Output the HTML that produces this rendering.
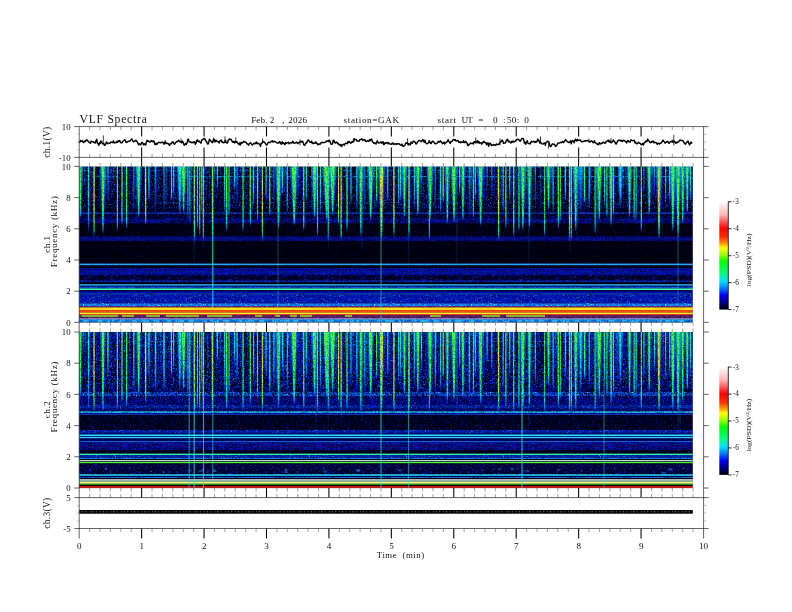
<!DOCTYPE html><html><head><meta charset="utf-8"><title>VLF Spectra</title>
<style>html,body{margin:0;padding:0;background:#fff}svg{display:block}text{font-family:"Liberation Serif","DejaVu Serif",serif;fill:#111}</style></head><body>
<svg width="792" height="612" viewBox="0 0 792 612">
<rect width="792" height="612" fill="#fff"/>
<defs>
<linearGradient id="gG" x1="0" y1="0" x2="0" y2="1">
<stop offset="0" stop-color="#48ff38" stop-opacity="1"/>
<stop offset="0.5" stop-color="#30ff48" stop-opacity="1"/>
<stop offset="0.72" stop-color="#10ff80" stop-opacity="1"/>
<stop offset="0.85" stop-color="#00e0d0" stop-opacity="0.95"/>
<stop offset="0.93" stop-color="#0090ff" stop-opacity="0.8"/>
<stop offset="1" stop-color="#0030ff" stop-opacity="0"/>
</linearGradient>
<linearGradient id="gY" x1="0" y1="0" x2="0" y2="1">
<stop offset="0" stop-color="#a0ff20" stop-opacity="1"/>
<stop offset="0.25" stop-color="#e8f020" stop-opacity="1"/>
<stop offset="0.4" stop-color="#ffd040" stop-opacity="1"/>
<stop offset="0.55" stop-color="#d0ff20" stop-opacity="1"/>
<stop offset="0.78" stop-color="#50ff50" stop-opacity="1"/>
<stop offset="0.9" stop-color="#00e0c0" stop-opacity="0.9"/>
<stop offset="1" stop-color="#0060ff" stop-opacity="0"/>
</linearGradient>
<linearGradient id="gC" x1="0" y1="0" x2="0" y2="1">
<stop offset="0" stop-color="#10f0d0" stop-opacity="1"/>
<stop offset="0.35" stop-color="#00f0e0" stop-opacity="1"/>
<stop offset="0.65" stop-color="#00c0ff" stop-opacity="0.95"/>
<stop offset="0.85" stop-color="#0070ff" stop-opacity="0.8"/>
<stop offset="1" stop-color="#0020ff" stop-opacity="0"/>
</linearGradient>
<linearGradient id="gc" x1="0" y1="0" x2="0" y2="1">
<stop offset="0" stop-color="#00c0ff" stop-opacity="0.9"/>
<stop offset="0.4" stop-color="#0080ff" stop-opacity="0.75"/>
<stop offset="0.8" stop-color="#0040ff" stop-opacity="0.5"/>
<stop offset="1" stop-color="#0020ff" stop-opacity="0"/>
</linearGradient>
<linearGradient id="gH" x1="0" y1="0" x2="0" y2="1">
<stop offset="0" stop-color="#00a0ff" stop-opacity="0.8"/>
<stop offset="0.5" stop-color="#0060ff" stop-opacity="0.65"/>
<stop offset="1" stop-color="#0020e0" stop-opacity="0"/>
</linearGradient>
<linearGradient id="gB" x1="0" y1="0" x2="0" y2="1">
<stop offset="0" stop-color="#0030ff" stop-opacity="0.9"/>
<stop offset="0.5" stop-color="#0020e0" stop-opacity="0.75"/>
<stop offset="0.85" stop-color="#0010c0" stop-opacity="0.4"/>
<stop offset="1" stop-color="#0010a0" stop-opacity="0"/>
</linearGradient>
<linearGradient id="gK" x1="0" y1="0" x2="0" y2="1">
<stop offset="0" stop-color="#000010" stop-opacity="0"/>
<stop offset="0.25" stop-color="#000010" stop-opacity="0.9"/>
<stop offset="0.75" stop-color="#000018" stop-opacity="0.9"/>
<stop offset="1" stop-color="#000020" stop-opacity="0"/>
</linearGradient>
<linearGradient id="gF" x1="0" y1="0" x2="0" y2="1">
<stop offset="0" stop-color="#50ff50" stop-opacity="1"/>
<stop offset="0.35" stop-color="#30ff90" stop-opacity="1"/>
<stop offset="0.65" stop-color="#20f0d0" stop-opacity="0.95"/>
<stop offset="1" stop-color="#20e0f0" stop-opacity="0.9"/>
</linearGradient>
<linearGradient id="gT" x1="0" y1="0" x2="0" y2="1">
<stop offset="0" stop-color="#00ffc0" stop-opacity="0.9"/>
<stop offset="0.5" stop-color="#00c0ff" stop-opacity="0.7"/>
<stop offset="1" stop-color="#0060ff" stop-opacity="0.0"/>
</linearGradient>
<linearGradient id="cb" x1="0" y1="0" x2="0" y2="1">
<stop offset="0" stop-color="#ffffff"/>
<stop offset="0.12" stop-color="#ffb4b4"/>
<stop offset="0.25" stop-color="#ff0000"/>
<stop offset="0.33" stop-color="#ff3000"/>
<stop offset="0.375" stop-color="#ff8000"/>
<stop offset="0.43" stop-color="#ffff00"/>
<stop offset="0.49" stop-color="#a0ff00"/>
<stop offset="0.555" stop-color="#00ff00"/>
<stop offset="0.666" stop-color="#00ff80"/>
<stop offset="0.74" stop-color="#00e0ff"/>
<stop offset="0.8" stop-color="#0080ff"/>
<stop offset="0.867" stop-color="#0000ff"/>
<stop offset="0.94" stop-color="#000080"/>
<stop offset="1" stop-color="#000000"/>
</linearGradient>
<pattern id="nb" width="97" height="97" patternUnits="userSpaceOnUse">
<path d="M75.5 69v1M29.5 81v1M33.5 86v1M7 81.5h2M83 34.5h1M10.5 43v1M40 73.5h1M0.5 61v2M4.5 95v1M84 2.5h1M0 62.5h2M68.5 34v1M54 16.5h2M9 30.5h1M20 12.5h1M18.5 74v1M82.5 91v1M22 47.5h2M58 61.5h1M89 65.5h1M75 77.5h1M69 67.5h1M93.5 81v1M62 22.5h1M67.5 27v1M17 59.5h1M8.5 25v1M90 20.5h1M56.5 62v1M30 12.5h1M83.5 65v1M56 89.5h1M64.5 92v2M30 88.5h1M74 1.5h1M28.5 71v1M87 78.5h1M41.5 21v1M79.5 52v1M35 62.5h1M95 36.5h1M6.5 0v1M1 35.5h1M86 63.5h1M72.5 31v2M37 23.5h1M66.5 4v1M53.5 32v1M30 62.5h1M88 59.5h1M18 6.5h1M48 13.5h1M49.5 45v1M38.5 21v1M6.5 77v2M14.5 73v1M75 76.5h1M79.5 67v1M41 55.5h1M56.5 43v1M82.5 50v1M29 60.5h2M23.5 13v1M72.5 21v1M85.5 46v1M79.5 11v2M52 70.5h1M15 12.5h1M96 10.5h1M27 94.5h1M39 80.5h1M49.5 23v1M29.5 25v1M28.5 42v1M44 27.5h1M68 14.5h1M42.5 1v1M13 82.5h2M41.5 90v1M79.5 93v2M38.5 11v1M71.5 73v1M80.5 30v1M95 49.5h1M83 20.5h1M96.5 51v2M95.5 67v1M60.5 96v2M86 75.5h2M11.5 88v1M79.5 38v2M20 80.5h2M13.5 22v2M66 92.5h1M90.5 56v1M92 5.5h1M96.5 0v1M82.5 47v1M21.5 80v1M25.5 43v2M9.5 85v2M35 39.5h1M88.5 46v2M38.5 47v1M19 40.5h1M92.5 77v1M34 42.5h1M16 27.5h1M74.5 30v1M60 26.5h1M0 64.5h1M16.5 78v1M47.5 46v1M65.5 60v2M49.5 85v1M87.5 12v1M38 46.5h1M49 60.5h1M67 93.5h1M5.5 20v1M23.5 11v2M88.5 61v1M33.5 58v1M36 38.5h2M75.5 49v1M34 85.5h2M40 70.5h1M51 35.5h1M44 6.5h1M39.5 23v2M76 43.5h1M29.5 34v1M48 36.5h1M57 16.5h2M47.5 3v1M84 87.5h1M88 51.5h1M81.5 15v1M85 14.5h1M53.5 4v2M10 53.5h1M57 1.5h1M23.5 82v1M90 83.5h1M50.5 58v1M4 1.5h1M21.5 65v2M2 72.5h1M33 52.5h1M52 89.5h1M45 53.5h2M55.5 8v1M80 9.5h1M43.5 85v1M7.5 3v1M60 87.5h2M12 84.5h2M19 63.5h1M60.5 85v1M85.5 5v1M20.5 6v1M77.5 51v1M77 36.5h2M30 68.5h2M60 70.5h1M25.5 52v1M95 42.5h2M41 61.5h1M1.5 14v1M40 96.5h1M7.5 42v1M81 4.5h2M92 2.5h1M37 28.5h1M17 87.5h2M42.5 37v1M74 41.5h1M20.5 81v2M91.5 51v1M19 40.5h1M7.5 91v1M50 56.5h1M88.5 86v2M40.5 62v1M38.5 68v1M65 75.5h2M72 92.5h1M71.5 28v1M48.5 11v2M66 32.5h1M93 11.5h1M29.5 28v1M56 11.5h2M96 42.5h1M56 41.5h1M38 67.5h1M14.5 94v1M42.5 28v1M47.5 69v1M15 77.5h1M81.5 20v1M46.5 77v1M67 78.5h2M0 41.5h1M21.5 40v1M89.5 12v1M9 67.5h1M59 76.5h1M91.5 19v1M89.5 51v2M96 89.5h1M66.5 35v1M73.5 50v1M36 60.5h1M69 31.5h1M41.5 5v1M33 80.5h1M30 86.5h2M92.5 78v1M82 35.5h1M9.5 3v1M96 6.5h1M39.5 90v1M60 21.5h1M48 42.5h1M48 34.5h1M35 60.5h1M42 9.5h1M11 62.5h2M18 25.5h2M92 39.5h1M25.5 82v1M22 70.5h1M17.5 78v1M24.5 75v1M79 35.5h1M18 18.5h1M9 92.5h1M21 24.5h1M60.5 49v1M92 2.5h2M44.5 96v1M32.5 33v2M52.5 86v1M7.5 47v1M57.5 61v1M36 68.5h1M9 82.5h1M53.5 61v2M90 94.5h1M13.5 27v1M64 91.5h1M27 14.5h1M89.5 87v2M85.5 69v2M64 90.5h1M2.5 79v2M23 65.5h1M56 17.5h1M45 9.5h1M35.5 51v2M85 87.5h2M95.5 54v1M42.5 12v1M82.5 55v1M42 61.5h1M90.5 93v1M68 69.5h1M9 95.5h2M47.5 68v1M28.5 3v1M47.5 63v2M40 39.5h1M16 15.5h2M27 59.5h2M46 40.5h2M49.5 20v1M53.5 75v1M90.5 74v1M55 33.5h1M37 1.5h2M53.5 24v1M82 5.5h1M70 27.5h1M80.5 31v2M53 45.5h1M70.5 16v1M85.5 4v1M59 49.5h1M94 67.5h2M56 87.5h1M44 83.5h1M85.5 63v1M14.5 29v1M89.5 88v1M78 3.5h1M18.5 44v1M91.5 27v1M55 95.5h2M24.5 25v1M30 36.5h1M63.5 24v1M89.5 30v2M47 40.5h1M2 36.5h1M64.5 14v1M7 5.5h1M49.5 66v1M46 47.5h1M77.5 4v1M11 61.5h1M43.5 79v1M94 43.5h1M86 92.5h1M29.5 36v1M76 57.5h1M64.5 44v1M45 52.5h1M60 85.5h1M91.5 46v1M74 16.5h2M72.5 12v2M39.5 43v1M65.5 3v1M76 16.5h1M59.5 57v1M42.5 71v1M55 11.5h1M47 6.5h1M17 20.5h1M59.5 58v1M48 78.5h1M19.5 57v1M68 90.5h1M48.5 27v1M85.5 66v1M54 79.5h1M93.5 52v2M2.5 76v1M30 65.5h1M96.5 49v1M16 73.5h1M1.5 19v1M67 26.5h1M26.5 73v1M36.5 57v1M87 84.5h1M78 24.5h2M61.5 54v1M88.5 83v1M28 47.5h1M70 25.5h2M65.5 28v1M18 41.5h1M68.5 89v1M8 25.5h2M46 69.5h1M57 67.5h1M24.5 14v1M44.5 64v1M47.5 0v2M18 87.5h2M11.5 57v1M55.5 10v1M37 69.5h1M8 77.5h2M71 23.5h1M15 2.5h1M15.5 53v1M14 17.5h2M10 12.5h1M79 33.5h1M42 22.5h1M25 29.5h1M23.5 17v1M45.5 40v1M66.5 65v1M65.5 77v1M57.5 65v1M28 30.5h1M83 42.5h1M25.5 41v1M2 8.5h2M28 72.5h1M46.5 85v1M95.5 23v1M77 32.5h1M39.5 42v1M89.5 29v2M74.5 6v1M11.5 26v1M84 82.5h1M49.5 54v1M22.5 28v2M87.5 24v1M12 90.5h1M57.5 49v1M67.5 61v1M84 22.5h1M15 17.5h1M63 30.5h1M11.5 72v1M96.5 17v1M6.5 71v2M11 26.5h1M4 87.5h1M91 0.5h2M21.5 63v1M94.5 33v1M18.5 5v1M64.5 8v2M44 50.5h1M31.5 76v1M58.5 95v1M68.5 38v1M28.5 28v1M62.5 74v1M2 27.5h1M68.5 54v1M73 61.5h1M29.5 65v1M11 22.5h2M22.5 35v2M45 61.5h1M46.5 21v2M4.5 14v2M2 53.5h2M29 56.5h1M47 64.5h1M0 42.5h1M42 72.5h1M56 60.5h1M4 0.5h1M94.5 70v1M0 19.5h1M28 41.5h2M91 18.5h2M86.5 11v1M22.5 47v1M93 50.5h1M5.5 18v2M47.5 93v1M4 74.5h2M73.5 58v2M60 29.5h1M66 85.5h1M72 27.5h1M59.5 47v1M65.5 44v2M46.5 11v2M30 76.5h1M58 92.5h2M42 84.5h1M29.5 96v1M68 61.5h1M92.5 23v1M61 85.5h1M5 53.5h1M42 65.5h1M23 50.5h1M26 87.5h2M53 95.5h1M0 67.5h1M82 3.5h1M57 44.5h2M26 70.5h1M19 80.5h1M60.5 59v1M95.5 15v2M73.5 43v2M66.5 72v1M56.5 53v1M25 29.5h1M40 42.5h1M13.5 13v1M74.5 29v1M10.5 92v1M17 66.5h1M1 1.5h1M52.5 40v1M51 40.5h1M45.5 12v1M79.5 56v1M9.5 63v2M93 76.5h2M47 20.5h1M82 25.5h1M33.5 36v2M71 77.5h1M18.5 25v2M29.5 62v1" stroke="#0018e8" stroke-width="1" fill="none"/>
<path d="M80 74.5h1M33.5 70v1M69.5 70v1M94 1.5h1M91.5 54v1M17 46.5h1M74.5 29v1M11.5 44v2M37.5 78v1M33 66.5h1M74.5 40v1M38 75.5h1M83.5 89v1M34.5 28v1M72 52.5h1M40 20.5h1M75 38.5h1M10 72.5h1M5 67.5h1M22.5 3v1M32.5 47v1M95.5 20v1M48 25.5h1M93 5.5h1M9 26.5h2M6.5 17v1M57 69.5h1M85.5 95v1M49.5 40v1M67 87.5h2M14.5 72v1M40 13.5h2M4.5 92v1M67 46.5h1M64 21.5h1M57.5 40v1M38 62.5h1M11 75.5h1M43 61.5h1M14 64.5h1M22.5 94v2M38 93.5h2M96 9.5h2M60.5 75v2M56 9.5h1M45 46.5h1M59 66.5h2M74 78.5h1M96 82.5h1M29.5 25v1M59.5 34v1M68 68.5h1M49.5 25v2M72.5 87v1M28 60.5h1M35.5 17v1M75 80.5h2M84.5 67v1M39.5 80v1M62 2.5h1M87.5 63v1M44.5 51v2M47 63.5h1M86 71.5h2M71 65.5h1M35.5 87v1M64.5 72v2M32.5 37v1M19 5.5h1M85 92.5h1M30 0.5h1M50.5 12v1M72.5 65v1M81.5 39v1M2.5 1v1M67.5 95v1M46.5 92v1M55.5 18v1M63 40.5h1M0.5 64v1M21.5 61v1M48 60.5h1M1 60.5h1M1 58.5h1M4.5 15v1M30 66.5h2M93 38.5h1M50.5 91v1M43.5 30v1M7.5 59v1M31 87.5h1M94.5 2v2M11 26.5h1M82.5 71v1M83.5 27v1M14 79.5h1M24.5 9v2M28.5 13v1M35.5 51v1M3.5 77v1M3.5 22v1M91 49.5h1M65 71.5h1M38.5 10v2M78.5 48v2M13.5 31v1M91.5 91v1M0 48.5h2M8 24.5h1M72.5 12v1M52 88.5h2M68.5 56v1M10 65.5h1M35 28.5h2M90.5 81v1M64 12.5h1M83 62.5h1M12.5 10v2M94 77.5h1M45.5 4v1M67.5 59v1M38 95.5h1M87 30.5h1M37 30.5h1M60 80.5h1M83 76.5h1M84.5 65v2M33 96.5h2M73 2.5h1M46 80.5h1M9 81.5h1M6.5 51v1M69 25.5h1M10 22.5h1M23.5 54v1M64.5 25v1M48.5 69v1M82.5 24v1M14 14.5h1M85 46.5h1M60 91.5h2M53 71.5h1M96 37.5h1M68.5 4v1M72 96.5h1M75.5 57v1M0 3.5h1M96 64.5h1M14 81.5h1M18 45.5h1M38.5 3v1M88.5 89v1M43.5 84v1M70 40.5h1M3 45.5h1M32.5 96v1M74.5 8v2M72 56.5h1M45 94.5h1M29.5 58v1M37 72.5h1M51 91.5h1M67 66.5h2M42 48.5h1M78 78.5h2M82 66.5h1M73.5 0v1M35 40.5h1M62 9.5h2M82.5 79v1M95.5 10v1M30 39.5h1M89 58.5h2M29.5 8v1M3 50.5h1M34 95.5h1M58.5 31v1M84 79.5h1M17 61.5h1M7 32.5h1M37.5 37v1M50 49.5h1M14 59.5h2M49 90.5h1M7.5 28v1M88 30.5h1M45.5 7v2M82.5 4v1M85.5 44v1M38 12.5h2M56 91.5h1M74 35.5h1M32.5 81v1M83 45.5h1M79.5 4v1M22 65.5h1M46.5 62v1M6 36.5h1M66 24.5h1M92 84.5h1M61.5 18v1M24 33.5h2M96 40.5h1M43.5 31v1M87 20.5h1M3.5 24v1M17.5 10v1M68.5 22v1M29.5 23v1M32 40.5h1M72 25.5h2M90 71.5h2M37.5 61v1M52 85.5h1M56.5 9v1M68.5 66v2M3.5 54v1M28.5 77v1M54.5 92v1M44.5 75v2M59 90.5h1M54.5 69v1M96.5 6v1M6.5 74v1M36 85.5h1M47.5 17v1M23.5 85v1M50 69.5h1M88.5 32v1M7.5 92v1M53.5 22v1M94.5 46v1M20 61.5h1M8.5 48v2M12.5 64v1M1 78.5h1M7 50.5h1M89 24.5h1M54 32.5h1M29.5 90v1M44 70.5h2M51 70.5h1M47.5 63v1M12 49.5h1M81 12.5h1M90.5 4v1M48 88.5h1M0 88.5h1M37 61.5h1M86.5 39v1M19 45.5h1M51 63.5h1M42.5 40v2M86 0.5h1M42 50.5h1M16.5 13v1M46 54.5h1M90.5 2v2M9 36.5h1M88 77.5h1M35.5 1v1M2.5 17v1M31 63.5h1M29 0.5h1M63 10.5h1M81.5 13v1M36 64.5h1M37 92.5h2M30 60.5h1M81.5 84v1M73 49.5h2M4 66.5h2M51 66.5h1M81.5 63v1M38.5 91v1M39.5 6v2M93.5 42v1M0 31.5h1M13 0.5h1M62.5 95v1M6 16.5h1M31 46.5h1M35.5 77v1M72 24.5h2M31 95.5h1M56 67.5h1M19 39.5h2M71 75.5h1M86.5 66v1M26.5 79v1M44.5 60v1M44.5 7v1M35.5 55v1M96.5 8v1M74.5 32v1M90 4.5h1M29.5 48v1M18 41.5h2M54 8.5h2M69.5 32v1M47.5 34v1M3.5 71v1M37 50.5h1M54.5 4v1M89 10.5h1M92 67.5h1M50 66.5h1M30.5 94v1M69.5 17v1M91 68.5h1M81.5 47v1M74 33.5h1M0.5 50v1M54.5 10v1M1 41.5h1M2.5 13v1M3.5 32v1M41.5 53v2M72 1.5h1M41.5 31v1M27.5 77v1M55 3.5h2M14 10.5h1M36.5 50v1M48 4.5h1M36 94.5h1M5.5 45v1M79 65.5h1M41 68.5h1M50 16.5h1M4.5 24v2M32 80.5h1M91.5 19v2M56.5 45v1M91 79.5h1M95.5 54v1M38 84.5h1M77.5 16v2M7 17.5h1M60 69.5h1M12.5 5v2M69.5 44v1M2 80.5h2M70 39.5h1M48 13.5h1M91.5 40v1M19 69.5h1M31 82.5h1M65 41.5h1M14.5 22v1M36.5 67v2M85.5 0v1M43.5 26v1M2 71.5h1M35 39.5h1M43.5 14v1M42.5 9v1M54 37.5h1M7.5 73v1M72 78.5h1M26 6.5h2M82 80.5h1M70.5 82v1M20 3.5h1M56.5 44v1M28.5 57v1M21 55.5h1M34 13.5h1M25.5 15v2M81.5 49v1M37.5 81v1M63 40.5h1M59.5 74v2M52 1.5h1M96.5 65v1M37.5 84v1M66.5 42v2M3.5 16v1M2 37.5h1M76.5 19v2M13 74.5h1M27.5 90v2M55.5 49v2M64.5 28v2M64 23.5h1M39.5 72v1M10.5 55v1M48.5 62v2M44.5 78v1M87 75.5h1M83 1.5h2M54 5.5h2M54 9.5h1M82.5 61v1M82.5 6v1M4 70.5h1M3 85.5h1M53 7.5h1M96.5 20v1M3 47.5h2M71 8.5h1M86 38.5h1M60 73.5h1M12 70.5h1M78.5 40v1M21.5 10v2M65.5 26v1M15.5 6v1M40.5 46v1M46 61.5h1M50 72.5h1M40 34.5h1M18.5 22v1M7.5 43v2M35.5 44v1M25 48.5h1M85 4.5h1M92.5 40v1M23.5 40v1M20.5 63v1M14 83.5h1M37 25.5h2M16 81.5h1M24.5 12v1M45 32.5h1M59 42.5h1M2 6.5h1M54 9.5h1M83 60.5h1M82.5 34v1M61.5 5v1M72 83.5h1M8.5 40v1M48.5 43v1M92 32.5h1M87 92.5h1M77.5 43v1M66 52.5h1M11 33.5h2M78 6.5h1M19.5 48v1M0.5 32v1M64 59.5h1M24 74.5h2M52 74.5h1M20.5 78v2M1.5 96v1M56.5 42v1M10 95.5h1M31.5 15v2M15.5 6v1M71.5 28v1M47.5 58v1M49.5 54v2M29.5 56v1M76.5 53v1M7 5.5h1M0 13.5h1M89.5 37v2M90.5 72v2M36 86.5h1M74.5 82v1M24.5 79v1M38.5 36v1M21.5 43v1M11 62.5h1M58 2.5h1M31.5 23v2M62 81.5h1M71 11.5h1M24.5 96v1M40 95.5h1M52.5 72v1M10.5 61v2M30 41.5h1M1 67.5h1M65.5 94v1M68.5 36v1M94 81.5h1M79.5 84v1M1 45.5h1M81.5 70v1M75.5 54v1M84.5 84v2M31 61.5h1M28 69.5h1M29.5 59v1M77.5 96v1M96.5 62v1M86 39.5h1M70 85.5h1M83.5 38v1M53 42.5h1M9.5 88v1M81 13.5h2M80 68.5h1M0.5 61v1M31.5 91v1M32 96.5h1M83 33.5h1M15 0.5h1" stroke="#0020ff" stroke-width="1" fill="none"/>
<path d="M5 38.5h2M85.5 89v1M73.5 72v1M34 36.5h1M5.5 48v2M49.5 82v1M34.5 55v1M7 86.5h1M34 59.5h1M36 69.5h1M14.5 43v1M61 7.5h1M15 21.5h1M83.5 69v1M55 6.5h1M33 15.5h1M48 85.5h1M13 75.5h2M65.5 67v1M53 10.5h1M86.5 66v1M56 75.5h1M37.5 85v2M74 34.5h2M26.5 59v1M3.5 61v1M40.5 15v1M67 14.5h2M18.5 42v2M94 50.5h1M93 14.5h1M29.5 64v1M4.5 91v1M24 20.5h1M80 50.5h1M45 23.5h1M40 68.5h2M56.5 48v1M59 91.5h1M66 7.5h1M13 52.5h2M70 14.5h1M62 13.5h2M47 81.5h1M92 44.5h2M93.5 40v1M24 15.5h1M45 40.5h1M50.5 27v1M50.5 76v1M41 13.5h1M49.5 91v1M25.5 85v1M93 20.5h1M50.5 90v1M56.5 33v1M48.5 84v1M67.5 12v1M18 56.5h1M21.5 28v1M57 32.5h1M43 48.5h1M71 55.5h2M91.5 20v1M27 37.5h1M25 57.5h2M30 32.5h1M55 27.5h2M32.5 79v2M72.5 63v1M7.5 1v1M10 34.5h1M20.5 29v1M60.5 67v1M46.5 45v1M9.5 36v2M69.5 74v2M44.5 35v1M28 83.5h1M11.5 21v1M92 38.5h1M84 19.5h1M54 3.5h1M58.5 30v1M80 94.5h1M34.5 12v1M53 95.5h1M45 26.5h1M38 69.5h2M11 49.5h1M70 96.5h1M0.5 30v1M61.5 20v2M36 86.5h1M35 62.5h1M17 85.5h1M12 8.5h1M5 52.5h1M30.5 32v1M63.5 86v1M66 27.5h2M57.5 77v1M12 37.5h1M92 50.5h2M51 33.5h1M40.5 75v1M9 60.5h1M80 56.5h1M58 14.5h1M31.5 47v1M65 50.5h1M7.5 88v1M51 9.5h2M37.5 2v1M61.5 69v2M52 11.5h1M5.5 78v1M47.5 16v1M34.5 15v1M77.5 55v1M88 22.5h1M86 3.5h1M38 72.5h1M57 39.5h1M43.5 24v1M78 37.5h1M58 11.5h1M71.5 25v1M63.5 38v1M16.5 52v1M48 19.5h1M31 76.5h1M83.5 40v1M91 91.5h1M91 59.5h2M73.5 44v1M32 0.5h1M28.5 32v2M15 44.5h2M71.5 52v1M47.5 46v1M21 6.5h1M25 29.5h1M82 19.5h2M66 74.5h1M43 37.5h1M59.5 16v1M16.5 38v1M35 33.5h1M69 45.5h1M32 90.5h1M22 72.5h1M33.5 39v2M5.5 39v1M83 44.5h1M94 12.5h1M36 93.5h1M54.5 26v1M32.5 78v1M74 63.5h2M6 52.5h1M25.5 72v1M48.5 11v1M22.5 55v2M47.5 48v1M81.5 72v1M12.5 68v1M81.5 14v1M39.5 18v1M45 1.5h1M10.5 64v1M38.5 82v1M56 92.5h1M20.5 31v2M43.5 5v1M9 20.5h2M53 22.5h1M67 22.5h1M20 48.5h1M93 25.5h1M3.5 34v1M35.5 92v1M4.5 13v2M27.5 24v1M57.5 15v1M33.5 80v1M54.5 61v1M8 1.5h1M1.5 6v1M54 13.5h2M49.5 17v1M20.5 4v1M86 22.5h1M11 31.5h1M16.5 11v1M95.5 3v2M46.5 1v1M54 37.5h2M43.5 77v1M75.5 69v1M22.5 35v1M21.5 78v1M35 85.5h1M22 89.5h1M87.5 37v2M95.5 56v1M90 93.5h2M3.5 59v2M17.5 19v2M20.5 1v2M53.5 58v1M7.5 81v2M9.5 80v1M54 3.5h1M84 73.5h2M92 26.5h1M38 73.5h1M17 67.5h1M26.5 38v2M6.5 25v1M61 74.5h1M80.5 67v1M16 36.5h2M25 37.5h1M90 82.5h1M63 64.5h1M37 0.5h1M96.5 62v1M45.5 46v2M67 86.5h1M92.5 79v2M23 19.5h1M2 66.5h1M56 78.5h1M39 88.5h1M57 41.5h2M25 51.5h1M88.5 82v1M5.5 55v2M81 1.5h1M17 61.5h1M45 31.5h1M40 41.5h1M49.5 20v1M62 41.5h1M5.5 34v1M41.5 80v1M14.5 75v1M94 68.5h1M35.5 16v1M76.5 24v2M93.5 37v1M8.5 45v1M82 10.5h1M63 18.5h1M26.5 92v1M8.5 77v1M35.5 24v1M43.5 36v1M72 74.5h1M15 83.5h1M92.5 45v1M3.5 52v1M0.5 44v1M47.5 53v1M8 87.5h1M94.5 37v1M50 15.5h1M17 21.5h1M67.5 44v1M17 30.5h1M60 92.5h2M77.5 52v1M73.5 74v1M76 74.5h1M10.5 12v1M83 15.5h1M69 95.5h2M26 7.5h2M18 39.5h1M8.5 77v1M32.5 90v1M19.5 0v1M33 3.5h1M91.5 38v1M39 44.5h1M58 12.5h1M92.5 89v1M57 27.5h1M88.5 5v1M59 82.5h1M0 92.5h1M17 38.5h1M39 26.5h2M2 59.5h2M16 47.5h2M12 46.5h1M19 94.5h1M65.5 58v2M34 0.5h2M94.5 71v1M44.5 76v1M90 58.5h1M47 7.5h2M14.5 29v1M27.5 5v1M70.5 0v1M71 47.5h1M95.5 89v2M32 38.5h2M39 80.5h1M88 52.5h1M93 56.5h1M91.5 2v2M10 37.5h2M92.5 56v1M2.5 50v1M31 96.5h1M47.5 25v1M75 94.5h1M18.5 66v1M63.5 87v1M75 96.5h1M70 46.5h1M15.5 94v1M79 54.5h1M22.5 19v1M86 64.5h1M44.5 56v2M19 54.5h1M89.5 36v1M96 34.5h1M78.5 18v1M58 67.5h1M46 74.5h1M43.5 84v1M89 5.5h1M27 91.5h2M85.5 76v1M77 48.5h1M50.5 74v1M83.5 51v1M20.5 29v1M8 91.5h1M3 25.5h1M24 92.5h2M44 33.5h1M93 39.5h1M79 95.5h2M43 24.5h1M19 30.5h1M49 55.5h1M88.5 94v1M70.5 49v1M18.5 5v2M19.5 6v1M71.5 56v1M77 77.5h1M34 75.5h1M16 76.5h1M83 17.5h2M14 92.5h1M45.5 34v2M44 50.5h1M5 90.5h1M39.5 22v2M62.5 1v1M25.5 79v2M84 90.5h1M89 93.5h1M72.5 93v1M95.5 87v2M7 48.5h2M45.5 48v1M57 35.5h2M13 10.5h1M44.5 96v1M30.5 6v2M50.5 28v1M68.5 14v1M12 25.5h1M24 55.5h1M66.5 49v1M84 51.5h1M31 28.5h1M23.5 73v1M37 88.5h1M72 6.5h1M14 28.5h1M46 26.5h1M29 81.5h1M68 91.5h1M95.5 68v1M77 73.5h2M14 0.5h1M50 52.5h1M85 74.5h1M19.5 9v1M80 23.5h1M71.5 49v1M37 37.5h1M21 44.5h2M53.5 12v2M53.5 74v1M77.5 87v2M90 61.5h1M40.5 95v1M83.5 18v1M62.5 33v1M11 32.5h1M70 17.5h1M82.5 62v1M59 32.5h1M39.5 71v1M52 66.5h1M7 29.5h1M0 65.5h2M47.5 51v1M56 77.5h2M19 82.5h1M89 30.5h1M63 78.5h1M5 26.5h1M43 20.5h1M6 86.5h1M44 57.5h1M87.5 41v2M7 55.5h1M17 27.5h2M21 41.5h1M60 16.5h1M49 66.5h1M78.5 57v1M46.5 14v2M38.5 26v1M20 29.5h1M5.5 11v1M33 86.5h1M55 22.5h1M89.5 50v1M32 34.5h1M15.5 59v1M22 96.5h1M83 19.5h1M19 70.5h1M24 51.5h1M11.5 53v1M30.5 51v2M18.5 26v2M73 36.5h1M86.5 57v2M91 45.5h1M71.5 82v2M29 47.5h1M19.5 18v1M20 92.5h1M93.5 25v1M17.5 88v1M92.5 35v2M15.5 85v2M84.5 85v2M74 43.5h2M82 14.5h1M14.5 85v1M30 59.5h1M16.5 45v2" stroke="#0028ff" stroke-width="1" fill="none"/>
<path d="M53.5 64v2M64 30.5h2M40 46.5h2M77 90.5h1M47.5 76v1M86.5 28v1M31 34.5h2M0 7.5h1M54 15.5h1M53 88.5h1M74.5 38v1M61.5 18v1M30 24.5h1M4.5 45v1M0 3.5h1M86.5 47v2M13.5 96v2M86 93.5h1M47.5 37v1M41 42.5h1M79 14.5h1M80 44.5h1M47 0.5h1M51 77.5h1M48 81.5h1M59.5 60v1M36 36.5h1M38.5 95v1M70 17.5h1M57.5 36v1M13 55.5h2M23.5 83v1M6 34.5h1M40 78.5h1M67.5 95v2M11 59.5h1M34.5 23v1M93 82.5h1M57.5 16v1M7 30.5h2M64 47.5h1M8.5 78v1M48.5 0v1M8.5 1v1M75 17.5h1M63.5 31v1M32.5 44v1M93 14.5h1M56.5 47v1M61.5 80v1M69.5 41v2M72.5 23v1M92 62.5h1M47.5 87v1M93.5 43v1M65.5 17v1M32 5.5h2M19.5 14v1M66.5 92v1M39.5 60v1M77 3.5h1M60 95.5h1M95.5 61v2M76.5 7v1M71.5 38v1M74 9.5h2M7.5 68v2M44 76.5h1M71 37.5h1M61.5 35v1M40 10.5h1M41.5 89v1M56.5 66v1M9 29.5h2M96 21.5h1M56.5 7v2M47.5 84v1M68 9.5h1M74.5 30v1M18 73.5h1M74 48.5h1M47.5 23v1M93.5 24v1M75.5 33v1M1.5 72v1M45.5 81v2M52 6.5h1M60 89.5h1M40 4.5h1M10 88.5h1M88.5 18v1M94.5 90v1M12.5 29v1M80.5 3v1M21 45.5h1M28 11.5h1M79.5 59v1M42.5 68v1M74 61.5h1M36.5 26v1M20.5 45v1M64 81.5h1M96 11.5h1M44 8.5h1M75.5 83v1M87.5 73v1M93 24.5h1M0 0.5h1M51.5 45v1M9.5 30v1M15 1.5h2M42.5 80v1M26.5 38v1M96 5.5h2M70.5 46v1M75.5 34v1M90 47.5h1M28.5 90v2M85.5 56v2M65 81.5h1M78.5 22v1M43.5 62v1M69.5 79v1M34 10.5h1M65.5 96v1M75 26.5h2M42 43.5h1M64.5 33v1M15.5 22v2M85.5 96v1M45 8.5h1M91.5 71v2M19 95.5h1M7 68.5h1M33.5 83v1M60.5 47v1M72 33.5h1M75.5 23v2M90 63.5h1M63.5 46v1M34 55.5h1M72.5 81v1M34 90.5h2M61.5 87v1M60 58.5h1M25 27.5h1M71.5 65v2M76 30.5h1M15.5 46v2M31 8.5h1M38.5 26v2M64.5 60v1M89 94.5h1M83.5 94v2M48 54.5h1M78.5 50v1M72 15.5h1M47.5 71v1M46 60.5h1M40.5 14v1M43.5 28v1M16.5 12v1M77.5 70v2M25 46.5h1M49.5 78v2M45.5 30v1M13 24.5h1M0.5 69v1M65.5 84v1M82.5 72v1M74.5 54v2M19 29.5h1M52.5 38v1M29 92.5h1M3 93.5h1M33.5 85v1M39.5 90v1M70.5 61v1M62 19.5h1M65.5 28v1M69.5 84v2M42 11.5h1M64.5 32v2M84.5 62v1M40 24.5h1M60 68.5h1M9.5 33v1M55 62.5h1M90.5 57v1M52.5 12v1M42 76.5h1M62.5 47v1M69.5 48v1M44 13.5h1M19 83.5h1M9 56.5h1M56.5 39v2M85.5 18v1M30 30.5h1M52.5 20v1M92.5 82v1M60.5 1v1M12 13.5h2M40 3.5h2M14 61.5h1M26.5 63v1M3 87.5h1M73.5 32v1M41 40.5h1M4 87.5h2M93.5 46v1M16.5 1v2M14.5 29v2M64 62.5h2M24.5 86v1M57.5 42v1M45 91.5h2M19 84.5h1M14.5 23v2M17.5 19v1M36.5 92v1M51.5 87v1M85 6.5h2M61.5 35v1M14.5 4v1M59 51.5h1M70.5 22v1M2.5 40v1M44 43.5h1M5 70.5h1M28 64.5h1M36.5 15v1M63.5 15v1M58 34.5h1M56.5 84v1M50 48.5h2M94 77.5h1M87.5 52v1M78.5 72v2M55.5 59v1M67 28.5h1M6.5 34v1M91.5 8v1M89 23.5h1M54.5 23v1M73 75.5h1M11.5 55v1M53.5 50v1M37 67.5h2M47.5 81v1M77 29.5h1M13 38.5h1M68 2.5h2M21 92.5h1M30 17.5h2M13.5 0v1M42.5 65v1M7 95.5h1M6 40.5h1M77 46.5h1M2.5 38v1M15.5 54v1M66 60.5h1M84 27.5h1M84.5 46v1M49.5 41v2M13 70.5h1M17 24.5h1M50 90.5h2M37 43.5h1M76.5 92v1M95 93.5h1M14.5 74v1M27.5 56v1M38.5 84v1M75 22.5h1M80.5 29v2M59.5 5v1M33.5 3v1M39 12.5h1M50.5 65v1M86 1.5h1M76.5 3v1M26 54.5h2M38 11.5h2M36.5 58v1M57 23.5h1M82.5 14v1M65.5 35v1M36.5 31v1M50 91.5h1M45.5 61v1M49.5 82v1M3.5 43v2M53.5 60v1M45.5 92v1M39.5 93v1M11 51.5h2M46 58.5h1M77 28.5h1M70 59.5h1M54 90.5h1M17 83.5h1M39.5 29v1M72 52.5h1M9 16.5h1M21 29.5h1M43.5 73v1M96.5 93v1M37.5 63v1M3 11.5h2M25 79.5h1M59.5 39v2M28 49.5h2M48.5 74v1M43 85.5h1M83 75.5h1M11.5 66v1M14.5 31v1M30.5 27v1M52.5 39v2M44.5 80v1M96.5 77v2M10.5 46v1M77.5 35v1M36 41.5h1M6.5 83v1M72.5 15v1M57.5 88v1M11 42.5h1M11.5 6v1M21.5 36v1M17 4.5h1M36.5 10v2M53 49.5h1M1.5 73v1M96 42.5h1M29.5 44v1M43.5 6v2M36.5 88v2M29.5 22v1M79.5 19v1M22.5 77v1M25.5 56v1M32.5 38v1M50.5 22v2M26.5 86v1M82 62.5h2M21.5 71v1M64 78.5h1M40.5 68v1M59.5 34v1M41 43.5h1M52 65.5h1M29.5 80v1M71.5 16v1M54.5 20v2M89.5 95v2M87 70.5h1M15 3.5h1M88 48.5h1M37 48.5h2M34.5 19v2M17.5 30v1M58 28.5h1M91 8.5h1M43.5 19v1M31.5 79v1M75 8.5h2M83 71.5h1M25.5 84v1M78 40.5h1M18.5 82v1M2 26.5h2M50 32.5h1M76 63.5h1M55 55.5h2M65.5 21v2M43.5 18v1M95.5 63v1M87 4.5h1M50 31.5h2M60.5 86v2M4.5 80v1M55 5.5h1M86.5 47v2M91 44.5h1M66.5 79v1M46 31.5h1M27 25.5h2M64 7.5h1M88.5 68v1M64.5 17v1M10 79.5h1M70.5 85v2M61 78.5h2M79.5 10v1M58 8.5h1M9 71.5h1M72 71.5h1M61.5 5v1M23.5 6v1M18 82.5h1M42.5 1v1M30.5 58v2M48.5 93v1M2.5 94v1M91.5 75v2M16 3.5h2M91 89.5h1M20.5 78v1M1 51.5h1M12 3.5h1M52 51.5h1M67.5 41v1M91 33.5h1M67.5 59v1M83.5 12v1M51.5 15v1M86 17.5h1M17.5 26v1M24 3.5h1M52.5 28v2M35.5 1v1M91.5 30v1M48 88.5h1M30 59.5h1M84 3.5h1M34.5 81v1M12 28.5h1M59 6.5h1M89.5 28v1M88.5 47v1M89 91.5h1M93 22.5h1M49 37.5h1M66 57.5h1M91.5 15v1M36.5 72v1M13 70.5h1M5 17.5h1M40 76.5h2M53 79.5h1M39 42.5h1M60 96.5h1M80.5 47v1M53 21.5h1M54 69.5h2M50.5 39v1M26.5 0v1M35.5 42v1M23 15.5h1M50 79.5h1M86 54.5h1M24 32.5h1M61.5 1v1M25 30.5h2M21.5 26v1M93 94.5h1M50 89.5h1M68 75.5h2M78 52.5h1M68.5 19v1M7.5 85v2M11.5 36v2M26 4.5h1M61.5 49v2M8 43.5h2M30.5 64v2M87.5 54v1M7.5 61v1M8.5 88v2M4 28.5h1M46 89.5h2M43 7.5h1M26.5 77v1M87 91.5h1M26 33.5h2M8 96.5h1M80.5 14v1M26.5 66v1M70 9.5h1M85.5 68v1M18.5 67v1M86.5 0v1M2.5 19v2M63 29.5h2M60.5 12v1M68.5 48v1M65 95.5h1M62.5 6v1M51 3.5h1" stroke="#0008b0" stroke-width="1" fill="none"/>
<path d="M37 54.5h1M76 68.5h1M3 72.5h1M79 44.5h1M75 36.5h1M88.5 65v2M61.5 95v1M61.5 4v1M14.5 86v1M70.5 7v1M32 21.5h2M93 10.5h1M56.5 67v1M13.5 91v1M19.5 34v1M68 54.5h1M59 58.5h2M26.5 33v1M30 51.5h1M93.5 37v1M2 21.5h1M19.5 21v1M88 86.5h2M78.5 6v1M43 72.5h1M5.5 14v1M25 32.5h1M77 66.5h1M42 30.5h1M23 12.5h1M1.5 16v1M77 69.5h2M3.5 54v1M62.5 82v1M80 0.5h1M23 80.5h1M35 13.5h1M47 18.5h1M8.5 53v1M46.5 65v1M55 93.5h2M74 63.5h1M81 95.5h1M84.5 42v1M65.5 67v1M30 51.5h1M91.5 53v1M77.5 61v1M27 14.5h1M41.5 18v1M27.5 16v1M87.5 17v1M36 87.5h1M5.5 27v1M69 85.5h1M51 3.5h1M9.5 63v1M90 65.5h1M14 87.5h1M86.5 38v1M63 8.5h1M53 85.5h2M77 51.5h1M17 50.5h1M75 43.5h1M36.5 25v1M13.5 53v2M40 77.5h1M69 42.5h1M85 10.5h1M84 42.5h1M27 96.5h1M0 41.5h1M81.5 40v1M60 20.5h1M23 12.5h1M95.5 14v1M84.5 74v1M33 69.5h1M13.5 41v1M45 75.5h1M36.5 87v2M49.5 78v1M10 31.5h2M31 88.5h1M60 83.5h1M22.5 56v1M42 7.5h2M53 29.5h1M17 65.5h1M2.5 15v1M48 64.5h1M95 63.5h1M73.5 70v1M2 71.5h1M16.5 74v2M6 11.5h1M91 33.5h2M10.5 96v1M12 14.5h2M33.5 88v1M9 36.5h2M60 34.5h1M35.5 60v1M29 10.5h1M5.5 24v2M35.5 25v2M36.5 25v1M21.5 76v1M21 37.5h1M22.5 4v1M28.5 17v1M69.5 84v2M21 45.5h1M22 19.5h1M52 84.5h1M72.5 3v1M63.5 56v1M23 94.5h1M22 9.5h1M64 13.5h1M23 54.5h1M40 58.5h1M82.5 29v1M91 86.5h2M50.5 72v1M93 50.5h1M65 27.5h1M8.5 30v1M41 86.5h2M90 23.5h1M32.5 49v1M72.5 85v1M57 75.5h1M12 36.5h1M44.5 62v1M18.5 52v1M10.5 41v1M5 24.5h2M39 51.5h1M61 33.5h2M39.5 65v1M81 40.5h1M39 38.5h1M61.5 44v2M2.5 76v1M93 58.5h1M40 84.5h2M28 79.5h1M88 78.5h1M33.5 73v1M55.5 72v1M49 14.5h1M72 48.5h1M74.5 56v1M71 83.5h1M1 24.5h1M63 2.5h1M16 54.5h2M68.5 78v2M67.5 7v1M43 79.5h1M49.5 19v2M9 52.5h1M74 62.5h2M20 63.5h2M6.5 27v1M84.5 61v2M60.5 51v2M49.5 28v2M34.5 10v1M64.5 50v2M58 8.5h1M33 63.5h2M8.5 96v1M37.5 84v2M38 53.5h1M79 72.5h1M33.5 84v1M19 45.5h1M59.5 17v2M5 66.5h1M58 93.5h1M48.5 93v1M77.5 56v1M26.5 16v2M84 81.5h2M30 15.5h1M57 56.5h1M47 33.5h1M63 72.5h1M20.5 28v2M90 91.5h2M83.5 56v1M46.5 27v1M74.5 50v2M71 7.5h1M33.5 72v1M55 7.5h2M55 19.5h1M12 0.5h2M72 27.5h1M23.5 67v1M37 68.5h1M23 71.5h1M72 82.5h1M83.5 64v1M57 6.5h1M25 79.5h1M19.5 34v1M0 85.5h1M91.5 43v1M84.5 0v1M22 92.5h2M70 37.5h1M62 19.5h1M88 15.5h1M36 6.5h1M65 61.5h1M28 21.5h1M59 67.5h1M70 91.5h1M71.5 84v1M14.5 19v2M16 55.5h2M63.5 69v1M94 96.5h1M33.5 64v1M25 84.5h1M65.5 26v1M56 42.5h1M60 69.5h2M13 46.5h1M73.5 35v1M6.5 57v2M0.5 64v2M72 84.5h1M90 23.5h1M8.5 22v1M31.5 54v1M42.5 80v1M52 29.5h1M58 46.5h1M76.5 34v1M22 83.5h1M57.5 26v1M27.5 71v1M53.5 48v1M58.5 79v1M40 78.5h1M1 28.5h1M96.5 81v1M74 96.5h1M66.5 23v1M53.5 35v2M15 6.5h1M75.5 49v1M85.5 53v1M52 22.5h1M83.5 70v1M67 25.5h2M53 37.5h2M85 83.5h2M7.5 48v1M9 8.5h2M67.5 48v2M21 36.5h1M44 59.5h1M51.5 28v1M27.5 53v2M31.5 74v1M92.5 75v1M8 72.5h1M13.5 29v2M47.5 55v2M55.5 91v1M80.5 40v1M66.5 51v1M12 94.5h1M31 75.5h1M70 74.5h1M86 48.5h1M48 36.5h1M24.5 16v1M16 53.5h2M25.5 18v1M50 79.5h1M28 37.5h1M28 27.5h1M80.5 59v1M73 86.5h2M7.5 16v1M64.5 85v1M9.5 69v1M56 30.5h1M2.5 37v1M22 25.5h2M87.5 42v1M23 12.5h1M20.5 90v1M7.5 25v1M92 21.5h1M64.5 90v1M54 93.5h1M30.5 55v2M79.5 56v1M67.5 80v1M96 72.5h1M92.5 17v1M75.5 30v1M94.5 66v2M16 30.5h2M51 0.5h1M77 81.5h1M52.5 47v1M23 47.5h1M24.5 16v1M77 39.5h2M65 90.5h1M87 61.5h2M13 79.5h2M18 59.5h1M45.5 14v1M44 29.5h1M67.5 39v1M69 74.5h1M79 8.5h1M95 89.5h1M19 58.5h1M4 43.5h2M90.5 35v2M10 36.5h1M84 87.5h1M37 71.5h2M11 69.5h1M36 3.5h1M49 52.5h1M90.5 68v1M13.5 37v1M94 55.5h1M44.5 37v1M20.5 48v1M57 55.5h1M4.5 54v2M43 73.5h1M34 59.5h1M91.5 7v1M13 44.5h2M1.5 14v1M30.5 25v1M29 72.5h1M64 21.5h2M86.5 75v1M12 45.5h1M41 76.5h1M60 42.5h1M24.5 47v1M46 52.5h2M13 85.5h1M22.5 54v2M73.5 22v2M33 18.5h1M54 66.5h1M0.5 89v1M29 34.5h1M86.5 57v1M90 11.5h1M91.5 88v1M77.5 50v1M54.5 93v1M21.5 68v1M88 43.5h1M74 41.5h1M35 13.5h1M96 28.5h1M8 45.5h1M80.5 61v1M28 75.5h1M89 77.5h1M49 53.5h2M90.5 3v1M7 45.5h2M78 72.5h1M40 45.5h2M17.5 73v1M42.5 57v1M80 80.5h1M59.5 14v1M38.5 63v1M18 79.5h1M0 7.5h1M82.5 21v1M0.5 77v2M68.5 34v1M49 13.5h1M23 0.5h2M6.5 46v1M88.5 51v2M50.5 37v1M44 75.5h1M71 21.5h1M4.5 75v1M58.5 54v2M66 61.5h1M12.5 4v1M6.5 88v2M37.5 53v1M19 7.5h2M90.5 8v1M36.5 82v1M51 6.5h1M94.5 68v1M38 75.5h1M25 61.5h1M73 47.5h2M42 27.5h2M96 9.5h2M29 5.5h2M10 89.5h2M71.5 2v1M6 23.5h1M61 91.5h1M2 12.5h1M27.5 20v1M3.5 6v2M21 9.5h1M37 51.5h1M11.5 87v1M81 39.5h1M46.5 54v1M82.5 42v1M6 87.5h2M0.5 21v1M33 66.5h1M84 76.5h2M57.5 19v1M92 89.5h1M78 95.5h1M30.5 71v1M4 47.5h1M38 76.5h1M5.5 51v2M72.5 37v1M10 62.5h1M40.5 83v1M8 32.5h1M96 51.5h1M46.5 77v2M92.5 31v1M91 0.5h1" stroke="#0010d0" stroke-width="1" fill="none"/>
</pattern>
<pattern id="nB" width="97" height="97" patternUnits="userSpaceOnUse">
<path d="M38 13.5h2M13.5 33v1M22 31.5h1M52 54.5h1M29.5 39v1M41 12.5h1M15 42.5h2M32 48.5h1M76.5 86v1M41.5 4v1M34.5 85v1M20.5 85v2M22 90.5h1M86.5 79v1M42 83.5h1M79.5 84v1M95.5 41v1M4 40.5h1M90 92.5h1M38 61.5h1M32.5 65v1M10.5 20v1M57 93.5h2M67 75.5h1M4.5 25v2M89.5 39v1M86.5 26v1M6.5 6v1M17.5 50v1M2 3.5h1M79.5 5v1M55.5 94v1M93 44.5h2M63.5 60v1M20 18.5h1M22.5 25v1M13 66.5h1M61 83.5h1M33.5 75v2M38 20.5h1M42 81.5h1M47 82.5h1M55.5 87v1M73 79.5h1M78.5 23v1M2 58.5h2M28.5 60v1M22 25.5h1M28 1.5h1M20.5 88v1M71 9.5h1M62.5 31v1M86 49.5h1M80 31.5h1M8.5 63v1M86 60.5h1M37 85.5h2M78.5 47v1M10 76.5h1M92 44.5h1M22 28.5h2M76.5 42v1M80 21.5h2M17 78.5h1M50.5 74v1M93 53.5h1M51.5 72v1M95 21.5h1M34.5 24v1M62.5 41v1M19 8.5h1M14 60.5h2M96.5 65v1M92.5 50v2M77 77.5h1M34 77.5h1M88 91.5h1M54 96.5h1M62 85.5h2M27 12.5h1M12 26.5h1M16 12.5h1M61 66.5h1M72 71.5h1M96.5 76v1M62.5 4v1M24.5 8v1M35 10.5h1M53 22.5h1M15.5 50v1M10 87.5h1M33 67.5h1M23 30.5h2M85.5 41v1M72 67.5h1M81.5 76v1M85 93.5h1M72 64.5h2M36 45.5h2M39.5 92v1M74.5 77v1M28 60.5h2M1.5 24v1M94 89.5h1M70 65.5h1M30 75.5h1M41.5 15v1M14.5 59v1M32 66.5h2M17 74.5h1M39 52.5h1M55.5 12v1M12.5 93v1M69 14.5h1M57.5 39v2M40.5 18v2M82.5 50v1M76 0.5h1M19 19.5h2M52 20.5h2M32 80.5h2M8 95.5h2M76 26.5h1M91.5 17v2M16 54.5h1M33 71.5h1M73 22.5h1M4.5 25v1M84.5 38v2M51 62.5h1M5 92.5h1M41 33.5h1M29 32.5h1M75 95.5h1M32 29.5h1M76 24.5h1M34 63.5h1M42 24.5h1M15 29.5h1M75 90.5h1M93 22.5h1M41.5 28v2M27 20.5h2M65.5 22v2M69.5 38v1M13.5 25v1M25 9.5h1M93 54.5h1M70.5 0v1M81.5 31v1M94.5 29v1M23 3.5h1M8 77.5h1M71.5 57v1M56 39.5h1M59 85.5h1M35.5 5v2M50 45.5h1M32 90.5h1M7.5 25v2M7 60.5h1M76 80.5h1M50.5 80v1M68.5 94v1M84.5 12v1M9.5 35v2M54 22.5h1M2.5 92v1M29.5 66v1M47.5 23v1M55.5 12v1M12.5 44v2M78 40.5h1M35.5 79v2M49.5 61v1M38.5 1v1M61.5 3v1M37.5 68v1M65 58.5h1M44 77.5h1M91.5 41v1M0 50.5h1M19 31.5h1M69.5 30v1M90.5 50v1M91 77.5h1M27 3.5h1M56.5 40v1M60.5 93v2M39.5 8v1M43.5 62v2M15.5 80v1M91.5 52v1M75 38.5h1M27.5 48v2M81.5 91v1M4.5 11v1M6 44.5h1M29.5 65v1M96 3.5h1M42.5 34v1M7 89.5h1M95 41.5h2M50 32.5h1M35 44.5h1M81 75.5h1M79.5 50v1M14.5 72v2M36.5 3v2M46 45.5h1M21 45.5h2M59.5 4v1M53.5 54v2M82 83.5h1M44.5 70v1M71.5 17v1M16 8.5h2M57.5 28v2M51 39.5h1M57 9.5h2M40.5 10v1M5.5 36v2M41.5 95v2M96 81.5h1M27.5 67v1M24.5 60v1M30 8.5h1M26.5 36v1M47 80.5h2M0 66.5h1M86 0.5h1M40 27.5h2M23.5 45v1M12.5 5v1M39 15.5h1M80.5 69v2M50.5 49v1M32.5 78v1M96 69.5h1M79 11.5h1M39.5 65v1M90.5 32v2M53 46.5h1M34 48.5h1M62 42.5h1M36 31.5h1M80.5 43v1M8 66.5h1" stroke="#0858ff" stroke-width="1" fill="none"/>
<path d="M2 51.5h1M28 66.5h1M5.5 59v2M52 25.5h2M45.5 89v1M37 79.5h1M46 5.5h1M72 51.5h1M55 26.5h1M27.5 20v1M50.5 48v1M66 1.5h1M10 69.5h1M79 46.5h1M82 39.5h1M77.5 2v1M45.5 12v1M22.5 83v1M92 70.5h1M35.5 86v1M29 29.5h1M80.5 27v1M9.5 28v1M1 61.5h1M61 55.5h2M21 79.5h1M31.5 66v1M84.5 22v1M23 19.5h1M28.5 24v1M57 89.5h1M10.5 61v1M23 78.5h1M92 84.5h1M68.5 44v1M77 19.5h1M37 60.5h2M0.5 37v1M11.5 66v1M88 7.5h1M77.5 0v1M83 87.5h1M12 23.5h1M90.5 62v1M42.5 68v1M63.5 1v2M29.5 43v1M4.5 56v1M43.5 90v1M26 91.5h1M21.5 18v1M35 33.5h1M13.5 51v1M70.5 24v1M13.5 17v2M81.5 41v1M19 40.5h1M71 59.5h2M93.5 68v2M61 53.5h1M54.5 50v2M70 19.5h1M79.5 80v1M32.5 72v1M16 2.5h2M83.5 1v1M7 8.5h2M7.5 43v2M63 82.5h1M22.5 30v1M31.5 41v1M26.5 30v1M5.5 82v1M37.5 24v1M17.5 91v2M76.5 91v1M70.5 20v1M65 32.5h1M1 42.5h1M6.5 95v1M14 0.5h1M89.5 72v2M1.5 17v1M3 84.5h1M91.5 1v1M10 79.5h2M2.5 27v1M18 36.5h1M43.5 11v1M73 5.5h1M0.5 4v1M68.5 5v1M3.5 91v2M9 55.5h2M34 63.5h1M71 32.5h2M89 39.5h2M47.5 61v1M11.5 48v1M49.5 19v2M43 0.5h1M43 71.5h1M18 21.5h1M93 84.5h1M67 25.5h2M24.5 23v1M34 65.5h1M0.5 38v1M51 63.5h1M68.5 72v1M72.5 69v1M75.5 86v1M87 0.5h1M64 76.5h1M8 18.5h1M25.5 6v1M95 78.5h2M70.5 43v1M54.5 23v1M11.5 29v1M94 9.5h1M53 64.5h1M9.5 43v1M91.5 68v1M58.5 89v2M94 90.5h2M0 10.5h2M27 48.5h1M57.5 73v1M87.5 19v1M80.5 71v1M90 18.5h1M49.5 21v1M18 18.5h1M48 78.5h1M6.5 92v1M22 96.5h1M78 30.5h1M65.5 60v1M89.5 25v1M95.5 79v2M36.5 11v1M31 86.5h2M29.5 91v2M6 96.5h1M70.5 7v1M0 51.5h1M41 11.5h1M74.5 78v1M48.5 45v1M44.5 19v1M92.5 42v1M9 33.5h1M7.5 22v1M59 92.5h2M81 22.5h1M4 82.5h1M21.5 68v1M52 83.5h1M94 48.5h2M0 92.5h1M17 87.5h1M70.5 28v1M80.5 41v1M12 51.5h1M26 86.5h1M39.5 16v1M66 33.5h2M6.5 10v1M69.5 70v2M44 29.5h1M23.5 67v1M25 36.5h2M94 5.5h2M24 22.5h2M68.5 62v1M73 46.5h1M11.5 42v2M49.5 12v1M38.5 15v1M93 10.5h1M48 56.5h1M63.5 54v1M35 86.5h2M59 78.5h2M27.5 39v2M35.5 50v2M15 70.5h1M71 24.5h1M31.5 66v2M22.5 46v1M25.5 21v2M56 50.5h1M39 66.5h2M56.5 43v1M74 61.5h1M62.5 15v1M59.5 62v1M54.5 60v2M13 2.5h1M51.5 2v1M60 82.5h1M29.5 77v1M20 10.5h2M54.5 43v1M88.5 18v1M56.5 0v1M15 71.5h1M17.5 88v1M86.5 58v1M6.5 6v1M38.5 59v1M36.5 48v1M37.5 10v1M88 28.5h2M9 13.5h1M87.5 78v1M19.5 11v1M38 79.5h1M12.5 58v1M92.5 84v1M48.5 53v1M58.5 90v1M40 95.5h2M10 85.5h1M67.5 59v1M64 38.5h1M83.5 17v2M92.5 46v2M28.5 14v2M20 40.5h2M35.5 1v1M16.5 64v1M47.5 95v1M44 65.5h1M87 57.5h1M6.5 57v1M90 90.5h1" stroke="#0040ff" stroke-width="1" fill="none"/>
<path d="M34 24.5h1M11 77.5h1M0.5 37v1M55.5 95v1M94 86.5h1M19.5 83v1M37.5 73v1M31 67.5h1M18.5 41v1M43.5 50v1M80 85.5h1M49 29.5h2M33.5 69v1M45.5 29v1M69.5 59v2M84 43.5h1M25 73.5h1M56 52.5h1M77 39.5h2M16.5 6v1M2.5 67v1M78.5 80v1M39.5 82v2M61.5 80v1M13.5 84v1M38 49.5h2M26 90.5h2M35 65.5h1M86.5 82v1M85.5 27v2M1 58.5h1M37 72.5h1M94 77.5h1M90 85.5h2M46.5 55v1M73 24.5h2M69.5 63v2M68 4.5h1M53.5 5v1M9 25.5h1M17.5 75v1M68.5 58v1M90.5 26v1M47 84.5h1M4.5 66v1M65 44.5h1M12 48.5h1M12 16.5h1M52 40.5h1M54.5 56v1M19.5 33v1M79.5 65v1M73.5 51v1M84 81.5h2M34 73.5h1M89 36.5h1M3.5 10v1M74.5 51v1M93.5 4v1M74.5 65v1M41.5 88v1M95.5 56v2M78.5 1v1M55.5 26v1M32 7.5h1M72 13.5h1M79.5 95v1M72 12.5h1M35.5 86v2M56 27.5h1M52 16.5h2M88 54.5h1M21 56.5h1M21 6.5h2M59.5 60v1M37.5 76v1M7.5 66v1M0.5 67v1M62 91.5h1M27.5 38v1M15 13.5h1M25 71.5h1M34.5 96v2M35 96.5h1M64.5 64v2M6 65.5h1M67.5 54v1M55 71.5h1M27.5 76v1M9 78.5h1M45.5 90v1M32.5 40v1M40.5 66v1M80 84.5h1M2.5 72v1M6 19.5h2M90 11.5h2M17.5 67v1M78.5 73v2M69.5 75v1M42 79.5h1M32.5 94v1M37 43.5h1M74.5 29v1M86 46.5h1M21 13.5h1M62.5 86v1M67.5 24v1M80.5 8v1M64 93.5h1M78 92.5h1M72 84.5h1M22 70.5h1M82.5 4v1M76 68.5h1M15 65.5h1M70 26.5h1M19 8.5h1M45.5 67v1M34.5 11v1M81.5 27v1M0 3.5h1M56.5 93v1M81 12.5h1M59 60.5h1M76.5 72v1M76.5 8v1M78.5 8v1M0.5 79v1M67 57.5h2M66.5 26v1M38 33.5h1M85.5 87v1M61.5 77v1M68 36.5h1M22.5 48v1M88.5 84v1M36.5 9v1M43 5.5h1M79 64.5h2M26 14.5h1M51 95.5h1M8 20.5h1M43 71.5h1M52.5 46v2M13 81.5h1M40.5 48v1M46 3.5h1M22 92.5h1M94 96.5h1M83 41.5h1M33 10.5h1M67 78.5h1M91.5 90v2M67 40.5h1M57.5 53v1M19 85.5h1M83.5 58v2M93 74.5h1M36.5 69v2M21 15.5h2M94 42.5h1M74.5 93v1M63.5 75v1M54 78.5h1M21.5 18v1M81.5 85v1M19 39.5h1M60.5 39v1M50 68.5h1M55.5 4v2M13.5 60v1M61 18.5h1M88 92.5h1M32.5 81v1M1.5 78v1M18.5 29v1M50.5 79v1M17.5 49v1M2.5 58v1M31.5 16v1M52 4.5h1M76 55.5h2M30 13.5h1M41.5 95v2M43.5 19v1M58 62.5h2M91 7.5h1M72 83.5h1M50 32.5h1M12.5 88v1M93.5 33v2M39 8.5h1M75 88.5h2M7 24.5h1M77 67.5h1M45.5 63v1M54 49.5h1M57 54.5h2M41.5 90v1M49.5 80v1M71.5 60v1M90 53.5h1M67 87.5h1M21 90.5h1M63 40.5h1M80 49.5h1M18.5 94v1M20.5 77v1M6 77.5h1M43 95.5h1M92.5 15v1M96.5 28v2M52 52.5h1M71 92.5h1M3.5 15v1M82.5 82v1M23 83.5h1M5.5 60v2M85 12.5h1M60.5 52v1M57.5 85v1M56.5 32v1M95.5 5v2M27.5 30v1M60 2.5h1M47.5 59v2M55.5 27v2M38.5 86v1M66 41.5h1M4 81.5h1M3.5 38v2M42 26.5h1M73 2.5h2M64.5 6v1M18.5 12v1M51.5 42v1M91 6.5h1M15 28.5h1M74.5 13v1M80 79.5h1M50 34.5h1M82 50.5h1M4 57.5h1M15 64.5h2M15.5 81v1M34 56.5h1M45.5 64v2M15.5 10v2M32.5 27v1M89 34.5h1M95 43.5h1M33 44.5h1M36 82.5h1M5.5 89v1M12 19.5h1M24.5 7v1M34.5 9v1M83 39.5h1M81.5 42v1M57.5 58v1M18.5 33v2" stroke="#0068ff" stroke-width="1" fill="none"/>
<path d="M89.5 43v1M26 14.5h1M83 25.5h1M62 4.5h1M27 63.5h1M82.5 40v1M72 60.5h2M3.5 10v1M71 32.5h1M8.5 80v1M54 15.5h1M67 9.5h1M78 79.5h1M84.5 73v1M76 30.5h1M51.5 64v1M88 71.5h2M79 3.5h1M77 8.5h1M42 21.5h1M45 10.5h1M63.5 8v2M80.5 52v1M20 17.5h2M27.5 14v1M36.5 67v1M4.5 36v1M38.5 75v1M93 55.5h1M70 93.5h1M49 67.5h1M93.5 13v2M94 95.5h1M76.5 17v2M32.5 75v1M73 29.5h1M46.5 8v1M90.5 93v1M56 46.5h2M76.5 92v1M67 41.5h1M34.5 33v1M10.5 34v1M91 85.5h1M53 47.5h1M73 3.5h1M52.5 32v2M52.5 34v1M21 2.5h2M43 7.5h1M76.5 35v1M55 59.5h1M96 67.5h1M47 70.5h2M57.5 36v1M28.5 49v2M75.5 20v1M16 69.5h1M41 72.5h1M27 68.5h1M15.5 23v1M27 9.5h1M89 35.5h1M28.5 33v1M66.5 74v1M34.5 2v1M38.5 17v1M96 92.5h1M81.5 58v1M62 43.5h1M69 26.5h2M10.5 84v1M12.5 88v2M74 36.5h1M80.5 60v1M81 86.5h2M22.5 72v2M65.5 53v2M67.5 38v1M42 87.5h1M33 89.5h1M14 1.5h1M78 1.5h1M63 81.5h1M63.5 9v1M88.5 57v1M23 66.5h1M31.5 94v1M6.5 89v1M61 15.5h1M51.5 4v1M44 23.5h1M19.5 33v1M12.5 17v1M43.5 86v1M87 71.5h1M1.5 27v1M12 27.5h1M89.5 56v1M9 40.5h1M77 89.5h1M18 68.5h1M74 34.5h2M16.5 65v1M83 53.5h1M11.5 4v2M79 83.5h2M85.5 11v1M47.5 4v1M22 76.5h2M82.5 88v1M89 9.5h1M74 14.5h1M28 88.5h1M47.5 89v1M46.5 41v2M7.5 15v1M27 15.5h1M12 28.5h1M54 88.5h2M79 89.5h1M93.5 6v1M86 90.5h2M55.5 48v1M78 0.5h1M41 32.5h1M59 32.5h1M58 53.5h1M91.5 53v2M57 81.5h1M78.5 22v2M4 5.5h1M79 13.5h1M30.5 90v1M49 20.5h2M30.5 74v1M55 58.5h1M90 75.5h1M85 59.5h1M50.5 35v1M44 16.5h1M88.5 25v1M35 34.5h1M36.5 30v1M92 0.5h2M32 94.5h1M2 22.5h1M81 44.5h2M94 85.5h2M5.5 38v2M16 89.5h1M2 74.5h1M38.5 11v1M24.5 57v1M39.5 3v2M11 3.5h1M30.5 60v1M64.5 60v1M95.5 41v1M88.5 70v1M77.5 40v1M88.5 72v1M55 25.5h2M3.5 5v1M18.5 90v1M26.5 12v1M35.5 59v1M62 22.5h1M38.5 25v1M47 55.5h2M87.5 23v2M32.5 8v1M53.5 72v1M45 34.5h2M38 71.5h1M94.5 52v2M79 77.5h1M68 9.5h1M68.5 94v1M74 13.5h1M25 34.5h1M50 12.5h1M56 94.5h1M19.5 12v2M78 21.5h1M90.5 0v1M36.5 69v1M39 65.5h1M52.5 9v1M43 34.5h1M21 81.5h2M63 53.5h1M78.5 3v2M48 5.5h2M83 75.5h1M58 81.5h1M88.5 64v1M68 38.5h1M24 67.5h1M81 62.5h1M40 2.5h1M25 85.5h2M80.5 64v1M50.5 64v1M75 51.5h2M80.5 14v2M12 15.5h1M59.5 4v1M63 82.5h2M35 90.5h1M89 7.5h1M36 94.5h1M94 49.5h1M69 2.5h1M53 0.5h1M52.5 86v2M65 96.5h1M7.5 12v2M43.5 83v1M47 53.5h1M41.5 19v1M87 71.5h1M38 4.5h1M25.5 70v1M50 12.5h1M0.5 77v1M6.5 83v1M38 66.5h1M92.5 48v1M70 86.5h1M53 20.5h1M81 50.5h1M83.5 79v1M11.5 2v1M84.5 40v1M58.5 8v1M71.5 28v1M75.5 2v1M81.5 29v1M69.5 9v2M65 62.5h1M44 13.5h1M62 41.5h1M66 7.5h1M1 19.5h2M0.5 21v1M34.5 14v1M51 68.5h1M42.5 68v1M75 61.5h1M38.5 2v2M44 92.5h1" stroke="#1888ff" stroke-width="1" fill="none"/>
</pattern>
<pattern id="nc" width="97" height="97" patternUnits="userSpaceOnUse">
<path d="M94.5 45v1M61 89.5h1M51 2.5h1M18.5 43v1M60 51.5h1M65 70.5h2M88 75.5h2M62.5 33v2M83 22.5h1M41 85.5h1M44 35.5h2M92.5 3v1M23 61.5h1M52.5 14v2M12 37.5h1M45.5 16v1M59 18.5h1M63 32.5h1M62 36.5h1M37.5 63v2M78 37.5h1M87 95.5h1M70.5 58v1M7.5 17v1M71 70.5h2M14.5 35v2M7 88.5h1M12.5 91v1M88.5 57v1M47.5 12v1M55 33.5h1M25.5 96v1M65.5 49v1M78 74.5h2M31 12.5h1M79 9.5h1M93 9.5h1M2.5 14v2M71 58.5h1M76 87.5h1M27 50.5h1M42.5 27v1M47 61.5h1M91.5 74v2M21.5 75v1M70 47.5h1M49.5 21v1M71 15.5h1M33 58.5h1M66 84.5h2M62.5 80v1M96.5 74v1M52 52.5h1M83.5 13v2M36 21.5h2M80 45.5h1M17 67.5h1M11 22.5h1M23.5 0v1M92 10.5h1M73.5 57v2M12 10.5h2M5.5 39v1M12.5 63v1M33.5 58v2M60 40.5h1M47 43.5h1M12 43.5h1M52 21.5h2M81 27.5h2M11 29.5h1M72 60.5h1M39 88.5h1M91.5 28v2M6 75.5h1M29.5 85v1M55.5 0v1M13 80.5h1M5 18.5h1M18 69.5h1M25 18.5h1M91.5 55v1M61 14.5h2M84 83.5h1M35 39.5h1M64.5 89v1M40 42.5h1M9 13.5h1M84.5 73v1M17.5 87v1M48 31.5h1M22.5 74v1M22.5 43v1M25 46.5h2M94.5 46v1M14.5 74v2M88.5 65v1M43 54.5h2M16.5 33v1M92.5 74v2M29 64.5h1M88 44.5h1M22 3.5h1M42.5 20v1M79.5 47v1M31.5 80v1M44 77.5h1M41 73.5h1M18.5 68v1M33 46.5h2M21 1.5h1M53 30.5h1M54 84.5h1M19.5 54v1M50.5 4v1M65 75.5h1M95.5 2v1M49 93.5h1M22.5 15v2M1.5 88v1M71 55.5h1M37 42.5h1M60 37.5h1M33 53.5h1M7 79.5h1M47.5 91v1M78.5 40v1M20 85.5h1M64.5 77v1M27.5 49v1M46 75.5h1M68.5 87v1M44.5 81v2M1 5.5h1M88.5 95v1M14.5 19v1M3 32.5h2M94 26.5h1M27.5 59v2M91 35.5h1M60 42.5h1M41.5 79v1M72.5 14v1M32.5 2v1M0.5 15v1M31.5 42v1M79 23.5h2M29.5 30v1M11.5 59v1M3.5 11v1M22.5 64v1M64.5 34v1M74 41.5h1M61.5 64v1M92.5 79v1M88.5 14v2M19 79.5h1M11.5 58v1M11.5 47v1M2.5 78v1M54 45.5h1M3 69.5h2M94.5 65v1M30 45.5h1M78.5 44v2M44 86.5h1M14.5 65v1M9.5 74v1M75 50.5h1M69 46.5h2M51.5 95v1M69.5 28v1M12.5 96v1M50 77.5h1M94.5 81v2M95 53.5h1" stroke="#40ffe0" stroke-width="1" fill="none"/>
<path d="M83 6.5h1M48 69.5h1M52.5 35v1M16 0.5h1M21.5 21v1M23.5 88v1M33.5 8v1M7.5 32v1M15.5 96v1M92.5 6v1M80 52.5h1M7 53.5h1M66 58.5h2M80 63.5h1M88.5 57v2M25 46.5h2M28.5 87v1M91 47.5h1M41 80.5h2M63.5 37v1M1.5 54v2M37 59.5h1M37 90.5h1M52 20.5h1M32.5 96v1M47 58.5h1M95.5 14v1M37.5 42v2M94 23.5h1M9 47.5h2M15 85.5h1M93.5 20v1M84.5 10v2M59.5 46v1M5.5 4v1M22 89.5h1M10.5 40v1M76.5 9v1M39.5 61v1M89 10.5h1M73.5 3v1M33 63.5h2M74 79.5h1M80.5 90v1M59 76.5h1M68 60.5h1M61 90.5h2M35.5 25v1M46.5 45v1M49 2.5h1M36 36.5h1M86 78.5h1M55 24.5h1M89.5 78v2M47.5 78v2M91 70.5h1M43.5 48v1M34 85.5h1M24.5 56v1M50.5 64v1M38.5 24v1M58 9.5h1M72.5 17v1M39 7.5h1M47 43.5h1M94.5 15v1M68 89.5h1M33 40.5h1M45.5 10v2M53 70.5h2M5 12.5h2M24 41.5h1M31 21.5h2M37.5 83v1M85 51.5h2M82.5 35v1M94.5 12v1M13 22.5h1M54.5 53v2M41.5 74v1M88.5 42v1M55 78.5h1M5.5 28v2M47.5 58v1M13 88.5h1M30.5 92v1M78.5 62v1M36.5 93v1M15.5 77v1M75.5 59v1M77 20.5h2M94.5 13v1M37 69.5h1M35 51.5h2M35 48.5h1M47.5 55v1M72 78.5h1M53.5 62v1M59.5 61v2M30.5 41v1M1.5 62v1M40.5 36v2M5 55.5h2M46 70.5h2M40 63.5h1M26 44.5h1M48.5 66v1M65.5 2v2M88 74.5h2M78.5 50v1M63.5 53v1M75 73.5h2M6 49.5h1M74 93.5h2M17 70.5h1M9 24.5h2M10 84.5h2M75 77.5h1M6 0.5h2M77 59.5h1M46 72.5h1M22.5 25v1M2 69.5h1M14.5 56v1M84 60.5h1M33.5 96v1M10 21.5h1M2 56.5h1M89 87.5h1M11.5 91v2M11 13.5h1M31 72.5h1M67.5 26v1M16 37.5h2M93.5 56v1M92.5 78v2M41 68.5h1M76.5 80v1M62.5 34v1M25 42.5h2M52 91.5h1M88 17.5h2M30 64.5h1M65 61.5h1M55 80.5h1M59 51.5h1M81.5 61v1M12.5 69v1M67.5 84v1M74 32.5h1M12.5 84v1M8 43.5h1M21 94.5h1M6.5 3v2M21.5 66v1M70 37.5h1M69 76.5h1M86 95.5h1M61 29.5h1M73.5 33v1M63.5 28v1M29 69.5h2M44 87.5h1M60.5 37v1M83.5 42v1M63 1.5h1M1.5 59v1M23.5 19v2M44.5 38v2M23 42.5h2M40.5 64v1M77.5 64v1M22.5 48v2M32.5 35v1M69 96.5h1M87 94.5h2M36 41.5h1M32 78.5h2M79 43.5h1M48.5 81v1M46.5 2v1M86 0.5h1M66 14.5h1M61.5 84v1" stroke="#20e0ff" stroke-width="1" fill="none"/>
<path d="M20.5 9v1M38 2.5h1M74.5 1v1M44.5 65v1M13.5 75v2M4.5 30v2M83.5 53v1M38.5 79v1M28 21.5h1M44.5 48v1M25.5 17v2M20.5 76v1M31 37.5h1M1 61.5h1M4.5 31v1M49.5 60v1M39.5 18v1M42.5 68v1M61.5 41v1M6.5 19v2M27 17.5h2M17.5 92v2M46.5 66v1M84 44.5h1M41 59.5h1M20 30.5h1M11 60.5h1M57.5 39v1M69.5 45v1M66 80.5h1M40 16.5h1M89 31.5h1M96 71.5h1M71 16.5h1M16 46.5h1M54 15.5h1M87 6.5h1M44 18.5h1M4 12.5h1M57.5 74v1M46.5 75v1M50 0.5h2M23 28.5h2M61 67.5h1M35 10.5h2M43.5 95v1M31 11.5h1M48.5 1v1M46.5 36v1M19.5 25v2M17.5 59v1M17.5 30v1M44 2.5h1M5 7.5h1M22 76.5h1M86.5 83v1M22 25.5h1M73 44.5h1M64.5 68v1M22.5 81v1M9.5 28v1M55.5 14v1M5 26.5h1M90.5 77v1M88.5 93v2M86 20.5h2M66 77.5h1M84.5 36v1M43 93.5h1M59.5 47v1M15.5 94v1M87 93.5h1M61 37.5h1M79 78.5h1M64 25.5h2M7.5 38v1M21 14.5h1M57 18.5h1M67.5 25v2M21 50.5h1M27 56.5h1M73.5 9v1M12.5 20v1M89.5 7v1M54 15.5h1M84 29.5h1M59 79.5h1M33.5 16v1M45.5 35v1M4 24.5h2M74.5 85v1M29 7.5h1M18 15.5h1M28 56.5h2M76 77.5h1M50.5 62v2M68.5 7v2M61 29.5h1M66 0.5h1M12 39.5h1M14.5 13v1M67.5 24v2M52 1.5h2M61 32.5h1M23.5 28v1M73 17.5h1M41 85.5h1M52.5 28v1M96.5 67v2M45 38.5h1M25.5 50v1M36 79.5h1M60.5 77v1M82 79.5h1M2.5 83v1M21 45.5h1M62.5 53v2M96.5 86v1M17.5 42v1M10 43.5h1M75.5 49v1M9.5 57v1M2 87.5h2M92.5 21v1M3 5.5h1M90.5 63v1M27.5 54v1M31 80.5h1M45.5 53v2M8 87.5h2M91.5 30v2M24 80.5h2M28 29.5h2M8 50.5h2M1.5 17v1M28.5 59v1M31 42.5h2M10 3.5h1M63 64.5h1M20 53.5h1M59 19.5h1M32 88.5h1M76.5 89v2M12 75.5h1M53.5 42v2M64.5 30v1M23.5 58v1M10.5 24v1M33.5 66v1M8.5 17v1M13 17.5h1M39.5 89v1M7.5 69v1M8 59.5h1M11.5 37v1M10 16.5h1M55.5 33v1M89.5 67v1M95.5 70v2M24 21.5h1M49.5 51v1M39.5 1v1M15.5 92v2M11.5 70v2M4 58.5h2M14 72.5h1M87.5 95v1M62.5 76v1M33 58.5h1M71.5 90v1M31.5 49v1M57 81.5h1M19 7.5h2M50.5 12v2M12.5 61v1M69.5 91v1M68.5 3v1M3 52.5h1" stroke="#00a0ff" stroke-width="1" fill="none"/>
<path d="M76 86.5h1M55.5 11v1M39 87.5h1M80.5 19v2M63.5 42v1M92.5 85v1M48.5 13v1M2.5 16v1M88.5 55v1M8.5 93v1M84 3.5h1M51 89.5h1M28.5 78v1M84 48.5h2M95 51.5h1M40 87.5h2M83.5 43v1M15 64.5h1M23 25.5h1M61.5 4v1M82.5 77v1M59.5 7v1M63 50.5h1M93 6.5h2M3 15.5h1M25.5 48v1M35 91.5h1M85 38.5h1M15.5 30v1M19.5 14v1M40.5 24v2M24 86.5h1M25 26.5h1M31 51.5h2M76 47.5h1M73 14.5h1M66 55.5h1M70 61.5h1M0 18.5h1M27.5 3v1M1 23.5h1M36 14.5h1M1.5 27v1M83.5 15v2M94 27.5h1M63 0.5h1M52 92.5h1M5.5 8v2M82 87.5h1M25.5 33v1M88 14.5h1M52 42.5h2M59.5 48v1M78.5 68v1M82.5 59v1M43.5 73v1M0.5 62v2M20 73.5h1M95.5 64v1M18 54.5h1M24 68.5h1M90.5 77v1M95.5 0v2M92.5 77v1M29.5 61v1M68.5 61v1M82 87.5h1M75 38.5h1M43 26.5h1M65.5 72v2M39.5 46v1M22.5 1v1M72.5 13v1M8 10.5h1M87 51.5h1M5 25.5h1M81.5 14v2M36 62.5h1M75 41.5h1M75.5 74v1M25 64.5h2M15.5 57v1M8 54.5h1M96.5 2v1M26 24.5h1M33.5 67v1M40 39.5h1M85 22.5h1M95.5 44v1M43 5.5h1M54 24.5h1M48 40.5h2M96 58.5h1M91 76.5h1M2.5 85v1M89.5 67v1M44.5 36v1M27 85.5h1M12 75.5h1M68 94.5h1M87.5 9v1M81.5 2v1M14.5 60v1M5 14.5h2M21.5 87v2M76.5 92v1M48.5 36v1M38 20.5h1M18.5 22v2M37.5 26v2M16.5 81v1M69.5 89v1M74.5 18v2M41.5 81v1M48.5 17v2M89.5 60v2M5 43.5h1M35 93.5h1M25.5 33v1M80 34.5h2M1 92.5h1M2.5 2v1M70.5 74v1M4 25.5h1M51.5 56v1M85.5 54v1M52 3.5h1M47 23.5h2M94 6.5h1M14.5 3v1M93.5 62v1M68.5 21v1M82.5 21v1M39 15.5h1M52 69.5h1M37 52.5h2M36.5 13v2M88 18.5h1M59.5 88v1M8.5 10v1M57 89.5h1M76.5 66v1M56 3.5h1M12 80.5h1M78.5 3v1M61.5 1v1M5.5 74v1M60.5 81v2M42 89.5h1M19.5 89v1M25 14.5h2M62 24.5h1M49 75.5h2M64.5 53v1M38 88.5h1M55 21.5h1M38 23.5h1M84 46.5h2M52.5 18v1M49.5 4v1M27 93.5h1M45 55.5h1" stroke="#00c0ff" stroke-width="1" fill="none"/>
</pattern>
<pattern id="nk" width="97" height="97" patternUnits="userSpaceOnUse">
<path d="M10 62.5h1M75 60.5h3M69.5 87v1M93.5 33v3M37.5 12v3M46.5 62v1M89.5 64v1M34 39.5h2M79.5 39v1M95 50.5h1M22 2.5h1M46 24.5h1M32.5 52v2M20.5 79v1M72 14.5h2M1 54.5h3M80 31.5h1M12.5 91v1M10.5 20v2M57 63.5h3M30 68.5h3M86 14.5h1M63 81.5h1M3 23.5h1M70 84.5h1M95 47.5h1M12 86.5h1M28.5 52v1M22.5 6v1M93 54.5h2M1.5 32v1M87.5 42v1M4 46.5h1M34 29.5h1M66 80.5h2M13 0.5h1M50.5 60v1M69.5 60v1M46 28.5h1M64 14.5h1M96 15.5h1M31.5 22v1M5.5 64v3M28.5 60v1M26 77.5h1M7 10.5h1M11 22.5h2M91.5 9v2M58 24.5h3M17 50.5h1M82.5 35v1M95.5 15v1M7 52.5h1M85 60.5h1M20.5 46v1M76.5 14v1M66 33.5h2M92.5 35v3M7 64.5h1M5.5 86v1M9.5 93v1M24.5 64v1M61 42.5h1M27 85.5h1M69 83.5h2M69.5 21v3M89.5 36v1M4 56.5h1M55.5 46v3M25 78.5h1M0.5 19v1M5 62.5h1M76.5 44v3M6.5 7v1M30 67.5h2M57.5 48v3M9 12.5h1M31.5 69v1M90 78.5h1M30 41.5h3M93 13.5h1M40 57.5h1M5 9.5h1M49.5 38v2M91.5 80v1M15.5 22v1M50.5 68v1M42 90.5h1M71.5 85v1M15 42.5h1M90 60.5h1M96 73.5h3M30 89.5h1M92.5 91v2M29.5 76v2M15 15.5h1M57 81.5h1M55.5 74v1M41.5 35v1M78.5 37v1M54 23.5h1M3.5 14v1M29 11.5h1M26 13.5h2M57.5 71v1M55.5 45v2M65.5 21v1M31 32.5h2M15 11.5h3M49.5 45v2M20 82.5h1M0 90.5h2M96 40.5h1M79 81.5h1M11.5 64v1M2 58.5h2M66 60.5h1M83.5 83v2M60.5 14v1M18 38.5h1M9.5 73v1M3.5 2v1M26 83.5h1M45.5 21v2M75 73.5h1M40 89.5h3M93.5 20v1M6.5 34v1M3.5 79v1M53 62.5h3M17.5 72v1M20 64.5h1M65.5 71v1M41.5 65v1M31 63.5h1M86.5 15v1M34 5.5h2M15.5 87v1M45.5 52v1M24.5 60v1M62.5 94v1M74 84.5h1M86 37.5h2M30 48.5h1M11.5 86v1M7.5 93v1M20.5 42v1M84.5 28v1M61 14.5h1M10 88.5h1M13 15.5h1M33 16.5h3M95 17.5h1M92 95.5h1M46 12.5h3M41 24.5h1M83 65.5h1M56.5 5v1M48.5 76v1M54 42.5h1M84 17.5h2M0 6.5h1M36.5 28v1M95.5 50v1M80 38.5h1M50.5 24v1M62 16.5h1M8 59.5h2M11 22.5h1M71.5 17v1M67 14.5h1M51.5 69v1M45.5 80v3M79 44.5h1M59.5 11v1M94.5 16v1M14.5 68v1M21.5 28v1M90 53.5h1M45.5 68v1M70 59.5h2M4.5 61v3M85.5 65v1M47.5 33v1M79 49.5h1M73.5 65v3M69.5 77v1M19 54.5h1M45.5 45v1M25 18.5h1M59 16.5h1M60.5 32v1M70 91.5h1M74 18.5h3M55 81.5h2M70.5 14v3M8.5 48v2M73.5 18v1M40.5 15v1M90 28.5h1M88.5 69v1M37.5 32v3M47 7.5h1M78.5 56v1M39 60.5h2M20.5 53v1M47 57.5h1M25.5 88v1M5 8.5h1M52.5 82v1M25 70.5h1M14 17.5h1M74.5 47v2M31.5 45v1M88.5 64v1M10.5 77v1M74 82.5h1M10.5 2v1M27 82.5h3M38.5 14v1M89 89.5h1M62 38.5h1M52 92.5h1M51 2.5h1M19 19.5h2M6.5 81v1M37.5 67v2M31.5 83v3M96.5 65v1M95 62.5h1M11.5 27v3M67.5 78v1M30.5 14v1M35 40.5h1M43 51.5h1M54 5.5h1M68 58.5h1M81 89.5h2M1 1.5h1M48.5 22v1M21 36.5h1M14 47.5h1M4.5 9v1M26.5 19v1M65 15.5h1M88.5 69v1M85 67.5h3M46.5 27v1M93 31.5h1M40.5 87v1M53.5 38v1M25.5 67v1M17.5 40v3M95 80.5h1M11 75.5h1M69.5 21v1M57 75.5h1M11 11.5h1M30.5 19v1M53 3.5h1M71.5 2v1M35 55.5h3M58 10.5h1M11.5 2v1M45.5 42v1M45 22.5h1M48 93.5h1M3.5 57v1M61.5 35v1M74.5 40v1M43 63.5h1M0 79.5h1M17.5 53v3M73 10.5h1M20.5 93v1M48 34.5h1M84 89.5h1M40 24.5h1M65 73.5h1M48 95.5h1M93.5 69v1M32 27.5h1M40.5 8v1M93.5 34v1M3.5 90v1M19.5 77v1M88 59.5h1M40.5 1v2M28 34.5h1M57 34.5h3M58.5 94v2M39 40.5h1M39 0.5h3M57.5 69v3M18.5 72v1M83.5 3v2M46 52.5h1M33.5 51v1M27 67.5h1M87 34.5h1M56.5 13v1M42.5 50v1M28 22.5h2M24 33.5h3M47 77.5h1M26.5 53v1M49.5 58v1M84.5 22v2M84.5 77v1M84.5 15v1M37.5 39v1M40 92.5h1M3 61.5h1M53 90.5h1M7 76.5h1M18 73.5h1M15.5 81v3M79 57.5h1M67.5 3v2M82 30.5h1M4.5 69v1M6.5 12v1M73.5 74v1M57.5 72v2M2 54.5h1M57.5 49v2M36.5 1v2M80 13.5h1M2 23.5h2M51 2.5h3M34.5 82v3M13.5 11v1M89 12.5h1M79.5 96v3M3 12.5h1M71 38.5h1M92.5 60v1M83 75.5h2M23.5 95v1M82 49.5h1M91 95.5h3M65.5 37v1M89 30.5h1M41 23.5h1M20 2.5h2M72.5 33v1M21 95.5h1M58 29.5h3M63 25.5h3M74.5 17v2M19.5 85v2M91.5 66v1M58.5 47v1M65 42.5h1M30.5 59v3M22 27.5h1M37 27.5h2M4.5 47v2M53 78.5h1M51 1.5h1M53.5 3v2M8 57.5h1M23 59.5h2M47.5 43v1M38.5 19v1M4 96.5h1M74.5 25v2M21.5 70v2M85.5 89v1M51 58.5h3M17 31.5h1M31.5 60v3M64 30.5h1M95 5.5h1M15.5 43v2M46.5 18v1M87.5 33v1M87.5 40v1M80.5 33v2M17.5 34v1M49.5 62v2M70 45.5h1M95.5 48v1M7 96.5h1M88 77.5h1M91.5 77v1M28 69.5h1M68.5 28v1M30 15.5h1M20.5 28v1M38.5 70v1M93 78.5h1M36.5 23v1M83 40.5h1M65.5 72v2M69 52.5h1M86.5 12v3M86.5 37v3M24 37.5h1M36 36.5h1M82.5 61v2M23 90.5h2M62.5 84v2M23.5 40v1M56 56.5h3M8 57.5h1M51 44.5h1M22 9.5h2M38.5 27v1M65.5 67v1M89.5 51v1M66 68.5h3M7.5 60v3M26.5 71v2M12.5 56v1M36.5 74v1M49.5 5v1M87.5 95v1M60 80.5h1M92.5 19v1M15.5 15v2M23 1.5h1M88 57.5h3M52.5 66v1M21 79.5h1M75.5 7v1M37 32.5h2M38.5 34v3M33 8.5h2M49 92.5h1M56.5 3v1M50 28.5h3M3 5.5h2M46 13.5h1M7.5 17v1M32 64.5h1M28 96.5h2M5 27.5h1M76 35.5h2M59.5 29v1M1.5 29v3M76.5 77v2M77.5 92v1M93 73.5h1M38 56.5h1M78 46.5h2M19.5 55v1M20 26.5h1M59 71.5h1M55.5 67v3M61 45.5h2M70.5 79v3M27 62.5h2M80.5 3v1M59 40.5h1M8.5 96v1M76.5 71v1M34.5 68v1M78.5 34v1M28 8.5h1M13.5 42v3M4 78.5h1M77.5 80v1M21.5 82v1M54 3.5h2M56 71.5h1M65.5 47v1M24 48.5h1M75.5 21v2M61 4.5h2M72.5 70v1M4 66.5h1M54.5 87v2M32 61.5h2M34.5 7v1M64 56.5h1M61.5 37v1M23.5 50v1M16 59.5h1M74 12.5h1M43.5 15v1M9 38.5h2M31 36.5h1M15 63.5h3M30 76.5h1M66.5 37v2M70 88.5h2M54.5 42v1M24.5 26v1M2 19.5h1M17.5 57v1M10 61.5h1M60 45.5h1M61 79.5h1M3.5 88v1M39 48.5h1M27 66.5h1M38.5 21v2M41.5 65v1M87.5 21v1M90.5 60v1M75.5 16v1M49.5 51v1M54 11.5h1M57.5 80v1M26.5 46v3M61 4.5h1M20.5 78v1M18.5 76v1M14 5.5h1M80 95.5h1M39 15.5h1M39.5 77v1M69 54.5h1M54.5 0v3M76 14.5h3M19.5 75v1M59 4.5h1M10 84.5h1M87 95.5h3M90.5 48v3M65 44.5h1M25 63.5h3M72.5 95v1M35.5 30v1M74.5 79v1M81.5 93v3M4 74.5h1M12 67.5h1M85.5 35v1M18 55.5h1M46.5 77v1M9.5 59v1M41.5 63v1M67 45.5h1M3.5 96v1M32.5 90v1M94.5 1v1M63.5 87v1M26 7.5h1M61.5 95v2M5 8.5h1M95.5 36v1M70 85.5h1M95 9.5h1M74 28.5h2M29.5 81v1M86 82.5h1M33 53.5h1M26 91.5h1M28.5 79v1M50 79.5h3M11 85.5h1M8.5 50v3M52 26.5h1M60 6.5h1M88 80.5h1M34.5 77v1M73 44.5h1M52.5 37v3M67 81.5h1M21 80.5h1M39.5 48v3M76.5 9v1M92.5 41v1M10.5 96v1M32 24.5h1M27 64.5h1M43.5 38v1M90.5 75v1M60.5 52v1M3 56.5h1M89.5 88v1M42 20.5h1M18 24.5h1M4.5 9v1M36.5 77v1M77.5 75v1M78.5 85v1M8.5 52v1M24.5 71v1M11.5 63v1M91 54.5h3M35 36.5h1M82.5 14v1M42.5 40v1M78.5 59v2M77 1.5h1M5.5 35v2M32.5 24v1M73 93.5h1M29.5 8v3M66 6.5h1M22 91.5h3M18.5 79v2M36.5 88v1M26.5 23v1M42 69.5h1M11.5 15v1M90 30.5h1M9 61.5h1M32 20.5h1M70 90.5h1M27 9.5h1M48.5 13v1M1.5 82v1M52 71.5h3M14 38.5h1M74 12.5h2M95.5 75v1M43 72.5h3M32 34.5h1M67.5 88v3M40.5 87v2M19.5 95v1M20.5 35v3M47.5 30v3M32.5 76v1M82.5 88v1M25.5 30v1M58.5 34v1M19 70.5h1M60.5 77v1M19 5.5h3M4.5 44v1M90 24.5h3M33 6.5h1M42.5 27v1M66.5 94v1M90.5 68v1M72.5 26v1M20.5 16v1M85.5 59v1M15 20.5h1M48.5 19v1M20 47.5h1M18.5 72v1M34 40.5h1M1 71.5h2M58.5 39v2M69 88.5h1M13.5 58v2M7.5 18v1M35 88.5h1M14 65.5h1M80.5 74v1M12 63.5h1M95 36.5h1M45.5 80v1M47.5 22v1M89.5 37v1M50.5 50v1M58 61.5h1M4.5 92v3M31.5 20v3M23 11.5h3M33 12.5h1M22 80.5h1M79.5 29v1M25.5 62v3M56.5 70v1M66 68.5h1M39 27.5h1M60 88.5h1M45 68.5h1M53.5 10v1M89 36.5h3M75 96.5h3M85 13.5h2M20.5 20v1M20.5 23v3M33 60.5h1M18 88.5h2M39 88.5h1M64 8.5h2M79.5 72v1M64.5 9v1M96.5 72v3M70.5 33v1M81 92.5h2M3.5 75v1M33.5 88v1M56.5 14v1M44 43.5h1M64.5 60v2M86 35.5h1M1.5 37v2M40 77.5h2M51.5 49v2M5.5 56v1M90.5 9v1M36.5 83v1M80 20.5h2M37 11.5h1M3 29.5h1M16.5 58v1M73.5 12v3M96.5 14v2M56 74.5h1M1.5 51v1M80 75.5h1M85 13.5h1M85.5 26v1M60.5 44v1M52.5 9v1M43.5 39v2M39.5 82v1M90 62.5h1M66.5 21v1M74.5 34v1M31 4.5h1M38 86.5h1M30.5 90v1M76.5 66v1M73.5 15v1M82.5 58v1M2 23.5h3M95 87.5h1M76.5 43v2M75 63.5h1M88 39.5h3M35 41.5h1M0 61.5h1M21 96.5h1M44 50.5h3M26.5 19v2M93 31.5h1M47.5 82v1M61 46.5h1M67 11.5h1M83 45.5h2M39.5 44v1M19 22.5h3M85 14.5h1M22.5 82v2M28 17.5h1M59 0.5h1M74.5 40v2M16 64.5h3M77 54.5h2M59.5 87v1M60 46.5h1M41.5 12v1M85.5 5v2M72 9.5h1M75.5 53v2M91.5 5v1M96.5 74v1M82.5 58v1M57 12.5h3M36 62.5h1M3 52.5h1M81.5 20v1M39.5 31v2M35.5 95v2M85.5 35v1M28 76.5h1M86.5 67v1M93.5 47v1M63 58.5h1M62 54.5h1M58 20.5h1M85 28.5h1M75.5 26v1M63.5 63v1M8.5 30v1M18 38.5h1M52.5 54v1M23.5 35v1M33.5 38v2M32 28.5h1M2.5 43v1M85.5 50v1M40 59.5h1M37 20.5h1M24.5 23v1M43 28.5h1M42.5 3v1M1.5 84v1M91.5 55v2M88.5 87v1M96.5 47v3M44 72.5h1M81 25.5h1M55.5 58v1M32.5 21v1M69.5 49v2M67 67.5h1M83 13.5h2M60.5 56v1M4.5 53v1M12 3.5h1M82 47.5h1M48 77.5h1M29.5 73v3M16.5 68v1M29 7.5h1M57.5 10v1M53.5 51v1M86.5 33v1M49.5 69v2M68 8.5h3M6.5 39v1M86 63.5h1M77 54.5h1M60.5 1v1M87 76.5h1M30 92.5h1M31.5 26v3M10 95.5h1M90 10.5h1M78.5 11v2M6.5 62v3M64.5 42v1M33 78.5h1M90 84.5h1M96 83.5h3M10 45.5h1M54.5 71v1M16.5 70v1M65.5 66v1M22.5 65v1M52 84.5h2M69 68.5h3M5.5 23v1M95.5 64v1M91 50.5h1M47 15.5h1M65.5 23v2M41.5 7v1M23.5 28v1M80 27.5h1M33 95.5h1M32.5 60v2M23.5 71v1M15.5 73v1M28 77.5h1M80.5 35v2M14 55.5h3M76 48.5h1M86.5 91v3M51.5 41v3M16.5 82v1M91 18.5h3M18 93.5h3M90 46.5h3M46 85.5h1M38.5 5v3M81.5 66v1M33 96.5h1M51.5 69v3M89 47.5h1M62.5 30v1M0 48.5h3M16.5 6v2M15.5 11v1M46.5 77v1M23 85.5h3M67 68.5h1M2.5 40v2M22 90.5h1M95 34.5h3M86.5 81v1M69 20.5h1M5.5 59v1M2.5 4v2M78.5 30v1" stroke="#000030" stroke-width="1" fill="none"/>
<path d="M34.5 62v3M77.5 55v1M64 86.5h1M76.5 26v3M21.5 2v3M77 85.5h2M56.5 61v2M89 55.5h1M28.5 89v1M72 49.5h1M21 88.5h2M5.5 60v1M21.5 84v1M25 83.5h3M46.5 88v2M44 17.5h1M31.5 84v1M52.5 79v1M24.5 48v1M66.5 6v1M14.5 75v3M83.5 3v1M13.5 57v1M86 70.5h1M51.5 90v1M56.5 42v1M67 63.5h1M41 1.5h3M35 7.5h1M61 84.5h3M65 69.5h1M71 15.5h1M8 93.5h1M19.5 12v1M72 28.5h2M13 77.5h1M81.5 3v3M78.5 94v1M79 44.5h1M3 60.5h3M27 6.5h2M28.5 41v1M76 0.5h1M37 69.5h3M34.5 80v1M31 39.5h1M73.5 96v1M77.5 45v1M20.5 9v1M53 75.5h1M6.5 93v1M4.5 50v1M1.5 60v3M80.5 51v1M37 72.5h1M64 43.5h1M1.5 14v1M28.5 13v1M88.5 93v1M3.5 92v1M81 38.5h1M40.5 9v1M19 35.5h1M31 42.5h1M6 11.5h1M28 92.5h1M40 94.5h3M10.5 22v1M2 59.5h1M8.5 21v1M79 60.5h1M55.5 5v1M22.5 14v1M44 9.5h1M54.5 36v3M31 10.5h1M83.5 1v3M75 0.5h1M28 72.5h3M50.5 19v1M88.5 33v3M77.5 91v1M50 63.5h1M55.5 2v1M18.5 90v1M8 68.5h1M78.5 49v1M12.5 39v1M25 73.5h1M65.5 83v3M38.5 88v1M42 21.5h1M58 51.5h3M3 32.5h1M12.5 42v3M26 50.5h3M71 13.5h1M22.5 67v1M30 54.5h1M27.5 63v1M79 39.5h1M7.5 39v2M56 80.5h1M20.5 21v1M5 16.5h1M19 24.5h1M21 75.5h1M33 66.5h1M81 39.5h3M75.5 3v1M47.5 63v1M1.5 83v1M21 29.5h1M69.5 84v1M4.5 7v2M73 80.5h1M86.5 36v1M87 16.5h1M14.5 25v1M24 14.5h1M78.5 25v1M93 45.5h1M2.5 59v1M48.5 25v1M56.5 52v1M74.5 27v3M48.5 9v1M87 43.5h3M41.5 21v1M26.5 33v1M37 88.5h1M70.5 13v1M85 60.5h1M10.5 1v1M91.5 51v3M68 36.5h1M86 64.5h3M82 95.5h3M62 91.5h1M80.5 34v2M23.5 44v2M41 58.5h1M10.5 89v1M29.5 53v1M47 8.5h3M4 61.5h3M60 96.5h1M9.5 34v2M86 1.5h1M38.5 63v2M9.5 84v1M7.5 65v1M52 9.5h3M95.5 56v2M50 40.5h1M94 21.5h1M34 14.5h1M47 36.5h3M63.5 14v1M73 45.5h1M49 67.5h2M42 5.5h1M83 69.5h1M56.5 57v1M6 95.5h1M49.5 24v1M2.5 84v1M92.5 85v2M48 36.5h2M21.5 6v1M16.5 52v1M64.5 95v1M81.5 61v1M70.5 19v1M69.5 68v1M57.5 35v1M82 68.5h1M29 9.5h1M92 27.5h1M48 51.5h2M24.5 32v1M15.5 72v1M73 68.5h1M65.5 43v1M19 26.5h1M19.5 86v1M16.5 55v1M46.5 88v3M36 55.5h1M1.5 8v1M26.5 32v1M0 89.5h3M1 54.5h2M34.5 27v1M7 11.5h1M17.5 72v1M39 51.5h1M36 31.5h3M15.5 67v1M48.5 7v1M68.5 68v1M36.5 25v1M86.5 6v1M93.5 20v3M91 15.5h1M31.5 48v3M6.5 95v1M61.5 10v1M91 52.5h3M45 91.5h1M73.5 53v1M20 15.5h3M20.5 26v1M64.5 58v1M26 96.5h1M38.5 92v3M42.5 88v1M37 44.5h1M9.5 61v2M43 92.5h1M91 29.5h2M37.5 77v1M75.5 14v1M93 76.5h1M10.5 11v3M83.5 58v3M19.5 9v1M26 77.5h2M31 42.5h1M83.5 2v1M37 67.5h1M47 71.5h1M17 84.5h3M36.5 47v2M30 12.5h1M62.5 84v1M88 23.5h1M20 69.5h1M66 29.5h1M10.5 28v2M9.5 40v1M57.5 23v2M90.5 56v3M39.5 30v1M27 21.5h1M26.5 73v1M13 36.5h1M64.5 70v1M11.5 61v1M19 93.5h1M22.5 33v1M9.5 83v2M89.5 17v1M51.5 90v1M42.5 91v3M45.5 93v1M49 46.5h2M32 74.5h1M71 78.5h1M5 81.5h1M23.5 48v1M8 83.5h1M19 26.5h2M89.5 88v1M39 73.5h1M39 75.5h1M19.5 37v3M47 23.5h1M16.5 75v1M80.5 20v1M41.5 11v2M82.5 38v1M52 31.5h1M11 0.5h1M20.5 59v1M43.5 16v1M4 43.5h1M53 83.5h2M92 19.5h3M27 61.5h1M49 90.5h3M37.5 30v1M84.5 88v3M77 90.5h3M96 9.5h1M17 79.5h1M4 82.5h1M96 3.5h1M41 17.5h1M83.5 54v1M33.5 12v1M70.5 26v1M6 90.5h1M50 41.5h1M34 64.5h1M35 34.5h2M43.5 6v3M20.5 13v1M26 49.5h2M86.5 84v3M26 24.5h1M58.5 84v2M68.5 33v1M78.5 73v1M94 57.5h1M17 18.5h1M53 60.5h3M38 42.5h1M54 18.5h1M21.5 2v1M65.5 52v3M43 7.5h3M35 73.5h3M41 37.5h1M17.5 70v1M1.5 84v1M32.5 48v1M13.5 77v1M4.5 52v2M80.5 43v1M75 30.5h1M93 73.5h1M60.5 6v2M23 45.5h2M34 91.5h1M78 20.5h1M5 35.5h2M35 63.5h1M50.5 15v1M93 11.5h1M89 58.5h3M91.5 1v2M59.5 81v1M44 47.5h1M89 89.5h2M88.5 7v1M2.5 96v3M68 33.5h1M19 0.5h1M41.5 85v1M27.5 9v2M21 78.5h1M60.5 83v1M0.5 27v1M1.5 10v1M49.5 58v1M44 59.5h3M32 14.5h3M58.5 77v1M78.5 6v1M4 21.5h1M66.5 60v1M52.5 21v1M28.5 16v1M49.5 52v2M94.5 4v2M9.5 3v2M20 95.5h2M92 75.5h1M73.5 83v1M18 69.5h3M62.5 10v3M89 49.5h1M27.5 52v2M85.5 62v3M29.5 51v2M20 18.5h3M26 28.5h1M44.5 23v1M91 3.5h1M92.5 4v1M75.5 0v1M72 34.5h1M36 18.5h1M56 58.5h1M14 79.5h1M7.5 74v1M22 79.5h1M61 11.5h1M78.5 63v3M80 77.5h1M49.5 75v2M42 62.5h1M81 26.5h3M25.5 74v1M0.5 63v1M66 75.5h2M30 9.5h1M14.5 81v1M6.5 78v1M33 40.5h2M37.5 55v1M12 11.5h3M34 39.5h1M88.5 88v1M63 24.5h1M49 30.5h2M30.5 93v3M15 17.5h1M63.5 22v2M56 26.5h1M26 90.5h3M54 90.5h1M80 37.5h1M94.5 66v2M95.5 94v1M35 80.5h1M78 60.5h1M96 75.5h1M81 63.5h1M86.5 9v1M89 89.5h1M59 60.5h3M63.5 27v2M23.5 49v1M48 76.5h1M91 92.5h1M41 15.5h1M75.5 74v1M14 83.5h1M10.5 88v1M16.5 75v3M84.5 10v1M8.5 37v3M52.5 22v1M94 41.5h1M56.5 72v1M63 33.5h1M24.5 0v2M88 48.5h1M96 58.5h3M71.5 65v1M47.5 13v1M69.5 76v2M17 88.5h2M90 24.5h2M64 59.5h1M71 15.5h1M27 33.5h3M34.5 49v2M57 59.5h2M48 42.5h3M0 93.5h3M10 55.5h1M32.5 16v1M30.5 25v2M33.5 31v3M65 41.5h3M18 91.5h1M18.5 2v1M71.5 5v1M46.5 83v1M59.5 50v1M45.5 57v1M33.5 24v1M21.5 26v1M68.5 6v1M44.5 7v1M44.5 51v1M45 32.5h1M40.5 3v1M36.5 37v2M67.5 86v1M66.5 15v3M79.5 95v1M47.5 21v1M39 96.5h1M77 13.5h1M41 1.5h1M13 89.5h1M6 93.5h3M71.5 82v1M38 93.5h1M86.5 87v3M46.5 5v1M49 58.5h1M50 45.5h1M56 86.5h1M58 65.5h1M60.5 13v1M64.5 9v2M14 31.5h1M79 54.5h1M14.5 91v1M90 27.5h1M77.5 62v1M0 70.5h3M69 68.5h1M67 34.5h1M70.5 89v3M88 70.5h1M24.5 58v1M25.5 59v1M44.5 20v1M84.5 74v1M1 86.5h2M43.5 19v2M74 95.5h1M1.5 66v1M86 70.5h1M69 6.5h1M90 5.5h3M24.5 30v1M62.5 19v1M7.5 3v1M58 5.5h1M95 17.5h1M58.5 34v3M23.5 60v1M6.5 73v1M46 79.5h1M21.5 49v1M79 6.5h1M8 1.5h1M32.5 56v1M77 73.5h1M18 95.5h1M34 11.5h2M45.5 18v1M83 29.5h1M42.5 26v1M83.5 68v1M10.5 4v3M54 23.5h3M62.5 23v1M13.5 53v1M93 34.5h1M52 92.5h2M78 68.5h1M54 39.5h2M70 63.5h1M60 16.5h1M41 82.5h1M61.5 60v1M66.5 9v1M78.5 55v1M82.5 36v2M83 2.5h1M91.5 46v1M5.5 58v3M6.5 86v3M18.5 84v1M12.5 26v1M31.5 41v1M89 5.5h1M36 62.5h1M42.5 31v1M36.5 95v3M47 84.5h1M58 10.5h1M64.5 96v2M75 45.5h1M50 8.5h1M29.5 93v1M40 59.5h1M53 22.5h1M21 47.5h1M52 2.5h1M77 47.5h1M27.5 1v3M78.5 86v1M50 65.5h2M76.5 17v1M65.5 33v1M53 90.5h3M42.5 37v1M70.5 95v1M8 31.5h1M79.5 52v1M71.5 53v2M91 57.5h2M18 38.5h1M90 27.5h1M22 70.5h1M56.5 56v3M19.5 70v1M2 86.5h1M28.5 84v1M3 85.5h1M76.5 12v1M12 7.5h1M44.5 83v3M52 24.5h2M26.5 12v1M74 60.5h2M79 67.5h1M78.5 54v1M44 88.5h3M37 66.5h3M28 91.5h1M81.5 75v3M66 65.5h3M64.5 95v3M70 26.5h1M40 37.5h1M92.5 78v2M88 75.5h2M95.5 95v2M66.5 33v1M17.5 65v1M29 4.5h1M26 71.5h3M49 63.5h1M6 25.5h1M62 46.5h2M5.5 59v1M55.5 55v1M14.5 69v1M41.5 57v2M4.5 85v1M77 63.5h1M13 5.5h1M56.5 52v1M23 83.5h2M1.5 64v1M20 37.5h1M31.5 91v1M91 62.5h1M85.5 94v1M42.5 57v1M41.5 59v1M66 12.5h1M27 33.5h1M11.5 29v3M78.5 34v3M63.5 74v1M36 59.5h3M5 0.5h1M60 19.5h1M13 12.5h2M4 48.5h1M62.5 88v1M45 71.5h1M55.5 9v3M62.5 61v1M50 57.5h3M51.5 35v1M59 63.5h3M8 27.5h1M85 27.5h3M93.5 55v1M96.5 45v1M12.5 91v1M21.5 77v1M56 51.5h1M64 21.5h1M9 90.5h1M47 91.5h1M0.5 91v1M87.5 87v3M42 79.5h2M68.5 81v1M89 61.5h1M46.5 3v3M26 13.5h1M46 93.5h1M31.5 57v1M31 13.5h1M5 35.5h1M43 65.5h1M14.5 39v1M95 71.5h1M50.5 58v1M53 41.5h1M19.5 12v1M53 45.5h1M76 68.5h1M45.5 1v1M67.5 52v1M78 76.5h2M4 1.5h1M49 19.5h1M88.5 0v3M64.5 36v1M58 18.5h1M78.5 24v1M14.5 90v1M4 76.5h1M56 76.5h3M33.5 21v1M24 27.5h1M46 80.5h1M29 82.5h1M48 85.5h1M60.5 35v1M57 49.5h1M36.5 23v2M73 60.5h1M32.5 1v1M38 71.5h1M36.5 94v1M28.5 27v3M40.5 67v1M2.5 64v1M12 2.5h2M52.5 17v2M41.5 92v1M21 30.5h1M78 71.5h3M45 15.5h1M33 72.5h1M82 5.5h1M69 21.5h1M61 51.5h1M40 65.5h3M6.5 79v1M50 49.5h1M91 28.5h2M37 46.5h3M19 53.5h3M67 79.5h1M55 45.5h1M79.5 6v2M88 20.5h2M81 36.5h1M58 68.5h2M33 48.5h1M96 86.5h2M71.5 91v1M27 8.5h1M2.5 70v3M45 13.5h1M19.5 30v3M33.5 63v1M6 5.5h3M43 38.5h1M67 14.5h1M73.5 10v1M18.5 32v3M40.5 6v1M91.5 86v3M57 52.5h1M46 78.5h2M80.5 14v1M0.5 91v1M10.5 58v1M59.5 21v1M21.5 10v2M20 90.5h2M10.5 62v1M48 85.5h3M9 61.5h1M37 67.5h1M47 88.5h1M95.5 28v1M84.5 20v1M95 58.5h3M60 36.5h3M56.5 83v2M56.5 25v1M25.5 48v1M20 66.5h1M14 41.5h1M75 44.5h2M17 31.5h1M61 65.5h1M16.5 13v1M78.5 12v1M10 12.5h1M77 31.5h1M34.5 34v2M51 50.5h1M39.5 80v2M20.5 59v1M42.5 32v3M56.5 85v1M65.5 9v1M42 92.5h1M12.5 2v1M88.5 52v3M49.5 5v1M79.5 81v2M59.5 22v2M93 89.5h1M47 30.5h1M33.5 44v1M48.5 96v1M47 31.5h3M86.5 14v1M84 62.5h1M81 24.5h1M45.5 3v1M40.5 86v1M71.5 46v1M15.5 84v1M10 24.5h1M6.5 8v1M77 23.5h1M60 72.5h1M95.5 14v2M2 72.5h1M10 52.5h2M0.5 30v1M73.5 79v1M76 60.5h3M76 49.5h2M37.5 10v1M55 30.5h1M54 67.5h1M88.5 10v1M31.5 30v2M34.5 6v3M57.5 33v1M42 4.5h1M52 17.5h1M22.5 12v1M89.5 12v1M39 64.5h1M90 22.5h1M76.5 74v2M59.5 24v1M93 45.5h1M69 17.5h1M10.5 60v3M1 9.5h1M25.5 91v1M2.5 16v1M16 59.5h1M35 63.5h1" stroke="#000000" stroke-width="1" fill="none"/>
<path d="M42 11.5h1M56 89.5h1M16 86.5h1M9 66.5h1M10 24.5h2M77 60.5h2M63 39.5h2M82.5 50v3M71 0.5h1M75.5 7v1M29.5 12v1M92.5 8v3M91.5 74v1M36.5 46v1M35 35.5h2M4.5 91v1M4.5 6v3M94.5 19v1M88.5 20v1M67.5 56v1M11.5 60v1M0.5 59v1M4.5 24v1M19 58.5h1M40.5 17v1M46 42.5h3M83 84.5h1M94.5 58v3M25 73.5h1M80.5 33v2M7.5 1v1M79.5 43v1M18.5 96v1M95.5 51v3M37 69.5h2M27 90.5h3M73 23.5h1M15 83.5h2M81 46.5h1M12.5 69v1M7.5 83v1M91 39.5h1M93.5 32v1M82 83.5h1M88 60.5h2M63.5 82v1M38.5 46v1M41.5 9v1M20 22.5h1M4 2.5h1M60.5 25v1M60.5 47v1M92 45.5h1M36.5 19v3M77 1.5h3M3 78.5h1M7.5 14v1M47.5 57v1M84.5 65v1M42 74.5h3M31 18.5h1M76 46.5h2M34.5 10v1M18 78.5h2M14.5 16v3M45 14.5h3M81 52.5h3M15 58.5h1M85.5 30v1M16 66.5h1M83.5 64v1M50.5 2v1M81 31.5h1M79 8.5h1M90.5 47v1M2.5 22v1M25.5 28v1M62.5 47v1M87 27.5h1M35.5 29v3M39.5 92v1M12.5 69v2M76.5 27v1M35 80.5h3M20.5 36v1M47 17.5h2M1 71.5h3M16.5 86v1M20.5 82v1M13 77.5h1M14 38.5h1M21.5 91v1M58 88.5h1M64.5 72v1M24.5 32v1M27.5 19v1M81 42.5h1M94 26.5h1M59 32.5h1M29.5 26v1M24.5 92v1M1 14.5h1M9 59.5h1M9 43.5h2M96 11.5h1M56 79.5h1M4.5 80v1M80 3.5h3M93.5 25v1M92 88.5h1M87.5 92v1M39.5 63v1M93 20.5h2M90 1.5h3M37 41.5h1M4.5 45v1M0 89.5h1M93.5 17v2M1 24.5h1M52.5 52v1M82 25.5h1M36 72.5h1M90 9.5h1M52 9.5h1M58 0.5h1M20 42.5h1M46 56.5h1M32 17.5h2M48.5 12v1M75 36.5h1M19 76.5h1M61.5 80v1M13.5 42v1M76.5 15v2M19 22.5h2M11 77.5h1M75.5 76v1M95 74.5h1M66.5 44v1M50.5 75v1M75 1.5h3M79 15.5h2M40 35.5h1M33.5 34v1M39 93.5h2M18.5 93v3M90.5 52v1M76.5 62v1M86 75.5h3M66 40.5h2M6 95.5h1M29 85.5h1M43 39.5h2M12.5 17v1M51 51.5h1M26.5 36v1M57.5 14v1M25.5 14v1M86.5 28v3M38.5 87v1M63 56.5h1M78 68.5h1M74.5 12v2M51 24.5h1M71 31.5h1M23 34.5h2M22.5 67v1M58.5 34v1M46 57.5h3M71.5 47v3M50.5 13v1M56.5 31v3M13 0.5h1M76 92.5h1M17.5 5v1M42.5 15v3M82 17.5h1M51 50.5h2M68.5 61v1M70.5 93v2M59 17.5h1M4 79.5h1M66.5 1v1M55.5 3v1M77.5 41v1M29.5 26v1M88.5 18v1M3 57.5h1M84.5 37v2M83.5 83v1M36 89.5h1M11 42.5h1M74.5 85v1M78.5 52v1M12 69.5h2M7 30.5h2M47.5 81v1M12.5 26v1M61 29.5h1M79.5 0v2M10.5 57v1M73 52.5h1M44 13.5h1M36.5 70v3M69 40.5h1M15.5 6v1M87.5 87v1M74.5 92v1M51.5 23v1M40 75.5h2M79 6.5h1M66 84.5h1M69.5 44v1M83 45.5h1M60 96.5h3M9 86.5h1M25.5 23v1M72.5 8v1M90.5 78v3M3 80.5h1M87.5 45v3M19 82.5h1M12 4.5h1M39 74.5h1M92 39.5h1M64 13.5h1M57 72.5h1M27 88.5h3M78.5 71v1M88 72.5h1M6 12.5h2M93 86.5h2M18.5 62v1M65.5 87v1M1 95.5h1M44.5 69v1M15.5 45v1M60 49.5h3M0.5 2v1M87.5 21v1M18 28.5h1M18.5 57v1M93.5 66v1M24.5 7v3M93.5 1v1M12 37.5h1M7.5 71v1M22 58.5h1M56.5 70v3M20 41.5h2M72 82.5h2M27.5 5v1M20.5 1v1M13 90.5h3M61 82.5h1M7.5 33v1M84 11.5h1M11.5 31v1M12 48.5h1M86.5 17v1M50.5 57v1M65 31.5h2M91.5 55v1M88.5 69v1M32 56.5h3M4 1.5h2M33.5 56v1M58 20.5h1M35.5 96v2M58 35.5h1M65 92.5h1M11 58.5h1M23.5 69v2M14 2.5h1M32.5 72v2M41.5 40v2M79 12.5h1M68 60.5h1M28 72.5h1M17.5 88v2M34.5 58v1M53 13.5h1M85.5 71v1M0 36.5h1M73 39.5h1M6.5 33v2M0.5 67v1M85.5 30v1M78 40.5h1M5 62.5h1M45.5 16v1M15 29.5h1M47.5 47v1M81 53.5h3M12.5 84v1M13.5 49v1M16.5 96v2M7.5 1v2M12.5 54v3M5 43.5h1M1.5 26v1M10.5 58v2M84.5 95v3M92 83.5h1M93 38.5h1M26 67.5h1M18 36.5h1M13.5 87v1M17 51.5h1M35.5 38v1M12.5 92v1M49 10.5h1M62 9.5h1M10 87.5h1M32.5 28v2M82 27.5h3M13 90.5h1M47.5 34v1M96.5 9v1M28.5 96v1M4 39.5h1M41 22.5h3M6.5 60v1M1.5 89v1M6.5 64v1M39.5 69v1M38 32.5h1M86 62.5h2M50 35.5h1M76 60.5h2M58.5 69v3M42 51.5h1M54.5 75v3M66 0.5h1M19 37.5h1M45 54.5h1M12.5 35v1M34 11.5h1M96.5 21v1M46.5 49v1M46.5 6v1M17 44.5h1M63 90.5h2M84.5 75v3M77 86.5h1M2 72.5h1M1.5 13v1M64 63.5h3M69.5 86v1M17.5 31v1M56 61.5h1M28.5 65v1M32.5 53v1M39 82.5h3M41 12.5h1M45.5 7v1M26.5 9v1M36 8.5h3M76 32.5h2M79.5 21v1M78.5 96v1M92.5 70v1M52.5 93v1M51 77.5h1M61 95.5h1M17.5 33v1M86 39.5h1M74.5 30v1M51.5 88v1M28 24.5h1M87.5 11v1M14.5 70v1M53.5 20v3M78.5 11v2M56.5 40v1M51.5 95v2M84.5 78v3M82 66.5h2M89 21.5h1M54 38.5h3M70.5 11v1M85 16.5h1M33 25.5h2M45.5 3v2M10.5 37v2M14 88.5h2M53 94.5h1M13 18.5h1M2.5 48v3M91 47.5h1M72 94.5h1M67.5 61v2M84 87.5h1M64 10.5h1M29 84.5h1M58.5 71v1M43 93.5h1M66 39.5h1M38 21.5h1M51 23.5h1M59.5 53v1M45.5 74v1M96.5 26v1M48.5 96v3M22.5 45v1M58.5 52v2M56.5 23v1M4 82.5h2M34 49.5h1M90 43.5h3M12 24.5h1M88.5 2v1M26 17.5h2M80 53.5h1M12.5 68v1M0 53.5h3M71 52.5h1M79.5 16v1M60 82.5h1M92 63.5h1M27.5 94v1M95 89.5h3M59.5 75v3M46.5 37v1M50.5 59v3M15 5.5h1M58 43.5h1M27 6.5h1M1 54.5h1M80 85.5h1M26 96.5h1M96.5 90v1M77 28.5h1M30 10.5h3M78.5 68v1M54 54.5h3M41 70.5h2M27.5 17v1M23.5 4v3M29 62.5h1M22.5 80v2M1 16.5h1M25 16.5h1M24.5 77v1M57 65.5h1M20.5 25v2M79.5 0v1M86.5 63v1M56 5.5h1M59.5 96v1M80 68.5h1M63.5 32v1M10 60.5h1M50 90.5h1M96 11.5h3M50.5 29v1M56.5 19v3M78.5 65v1M55.5 74v1M50.5 61v1M18 14.5h3M60.5 82v1M35.5 10v1M17.5 25v3M79 32.5h1M21.5 56v1M40 22.5h2M42.5 9v3M70.5 53v1M33.5 2v1M65 48.5h1M45.5 61v1M47 57.5h1M92 16.5h1M2 80.5h1M62.5 74v1M83 37.5h1M96 49.5h1M79.5 41v1M2 19.5h1M91.5 45v1M18.5 46v1M51 93.5h1M90 56.5h1M4 6.5h1M96 25.5h1M62.5 14v3M42.5 79v1M69 8.5h1M63.5 36v1M72 58.5h1M52 46.5h1M76.5 61v1M53 96.5h3M72.5 3v2M66 20.5h1M90 73.5h1M6 79.5h1M19 91.5h3M2 44.5h3M2.5 24v1M13.5 41v1M80.5 87v1M75.5 39v2M25 74.5h2M15 87.5h1M70.5 53v1M91 43.5h1M36.5 26v1M91.5 36v2M94 23.5h2M36.5 96v1M20.5 84v3M48 89.5h1M29 40.5h2M44 85.5h1M86 80.5h1M8.5 70v1M69.5 5v1M83 13.5h1M51 69.5h1M48.5 10v1M19 14.5h2M70 92.5h1M85.5 72v1M53 56.5h1M42 45.5h2M61 21.5h1M39.5 29v1M3.5 91v2M41 56.5h1M73.5 92v1M68.5 59v1M74.5 40v1M60 52.5h2M40 18.5h1M21.5 81v1M23.5 55v3M88.5 31v1M62 77.5h2M58 93.5h2M63.5 49v1M34 41.5h1M51.5 1v1M48 38.5h2M7.5 18v1M38 39.5h2M38 88.5h2M8.5 14v1M90.5 14v1M60.5 84v3M44 86.5h3M19 50.5h2M56.5 44v1M13.5 50v1M49 20.5h2M5 1.5h2M42 45.5h2M83 72.5h1M55 4.5h2M34 95.5h1M64.5 58v1M9.5 61v1M56.5 5v1M22.5 19v3M50.5 19v1M36.5 63v1M89.5 58v1M12 79.5h3M1 44.5h1M66.5 48v2M32 28.5h1M62.5 72v1M30 18.5h1M6.5 52v1M61.5 42v1M47 6.5h1M93.5 63v1M55 52.5h2M33.5 38v1M94 63.5h1M49 25.5h1M53 19.5h1M2 39.5h1M21 3.5h1M87 0.5h1M60.5 31v1M30 17.5h1M36 52.5h2M11.5 11v1M57 37.5h1M77 73.5h3M21 16.5h1M21 85.5h1M67 76.5h1M82.5 32v1M9 15.5h1M50 65.5h1M44 28.5h1M72.5 70v1M1 58.5h1M0 14.5h1M76.5 83v1M6.5 72v3M85.5 49v1M17 69.5h1M53 45.5h1M55 45.5h2M39.5 73v2M93.5 37v1M88.5 34v1M69 33.5h1M91 33.5h1M76.5 11v3M52.5 76v1M36 19.5h1M55.5 41v1M78 5.5h2M71 11.5h2M21.5 82v1M25 51.5h1M27 9.5h1M60 72.5h1M24 19.5h2M45 82.5h1M1 93.5h1M90.5 61v1M2.5 93v2M58.5 51v2M83 51.5h1M28 22.5h2M49.5 57v2M5 26.5h2M62.5 32v3M15 45.5h1M60.5 41v2M70 90.5h3M95 88.5h1M17.5 77v1M43.5 89v1M94 63.5h1M74 60.5h1M15 53.5h3M29.5 4v2M90 30.5h3M82 35.5h1M42.5 9v1M4.5 74v1M62.5 94v3M50 8.5h1M83 61.5h2M71.5 59v1M89 51.5h3M10.5 25v3M34.5 1v1M16.5 64v1M80.5 62v1M72 75.5h1M92.5 21v1M64 54.5h1M82 17.5h1M50 48.5h1M22.5 38v3M86.5 59v1M91 55.5h1M95.5 82v2M10 33.5h3M88.5 24v2M5 61.5h3M18.5 20v1M28 7.5h1M86.5 20v1M58 40.5h1M59 56.5h3M37.5 9v1M78 96.5h1M56.5 87v2M77 8.5h1M82.5 78v1M75.5 86v1M12 4.5h1M27 11.5h1M85.5 57v1M89 46.5h1M5 93.5h1M89 64.5h1M47.5 31v1M37 58.5h1M95 26.5h1M41 67.5h1M87 0.5h1M14.5 18v1M64.5 85v1M80.5 3v1M44 16.5h1M22 60.5h1M82 77.5h1M10 44.5h1M3.5 51v3M45 26.5h1M57 48.5h1M56.5 19v1M42.5 51v1M41.5 85v1M50 17.5h1M12 25.5h1M41.5 76v1M52.5 37v3M61 15.5h1M60 84.5h1M1.5 74v1M23 0.5h1M7.5 57v1M47.5 63v1M64.5 46v1M53 21.5h1M91 8.5h2M93.5 90v1M15 23.5h1M10.5 54v1M76.5 50v1M74.5 38v1M55 35.5h1M75.5 37v1M40.5 24v1M73 27.5h3M58.5 76v1M59.5 88v1M52.5 75v2M62 18.5h1M94 31.5h1M76 37.5h1M93.5 22v1M80.5 52v3M26.5 64v3M49 91.5h1M68.5 74v3M38.5 74v1M45.5 69v2M82.5 58v3M73.5 9v2M57 2.5h1M33.5 82v1M40.5 81v1M85.5 74v1M72 56.5h1M4 11.5h1M87 25.5h1M0.5 83v1M45 13.5h2M21.5 65v2M1 78.5h2M0 7.5h1M33 48.5h2M91.5 18v1M55 21.5h2M1.5 25v1M31.5 86v1M1.5 57v2M87.5 26v1M50 86.5h2M38.5 79v1M72 78.5h1M45.5 44v1M60 37.5h1M72.5 74v1M77 58.5h1M72 27.5h3M65.5 25v1M83.5 92v3M71 53.5h1M84.5 49v2M22.5 47v1M0 88.5h3M35.5 8v1M50 19.5h3M18.5 49v1M8.5 1v1M61 0.5h1M67 12.5h1M94 35.5h1M3 46.5h1M50.5 17v1M79.5 35v2M61.5 50v2M73 95.5h2M65.5 27v1M33 26.5h1M53.5 71v2M6 58.5h1M35 6.5h1M41 71.5h1M67 4.5h1M41.5 48v2M63 14.5h3M52 86.5h1M55 77.5h1M74.5 8v3M9 87.5h1M19.5 28v1M70 59.5h3M16 51.5h1M60 38.5h1M19.5 53v2M7.5 60v1M51 91.5h1M47 42.5h1M36 22.5h2M49 29.5h1M18 47.5h1M14 49.5h2M3.5 0v1M9.5 22v1M9 22.5h1M24.5 64v2M70.5 19v1M49 64.5h3M79.5 44v1M82 42.5h1M34 51.5h3M67.5 3v1M96.5 0v1M29.5 81v2M39 94.5h1M48 76.5h1M80.5 85v3M91 28.5h1M66 90.5h1M72 60.5h3M94 6.5h3M64 88.5h3M49.5 51v3M92 87.5h3M11 42.5h3M21 79.5h1M84 21.5h2M55 72.5h1M42 41.5h1M29.5 95v1M66 13.5h1M33.5 32v1M52 81.5h2M40 93.5h3M37 2.5h1M35.5 58v2M25.5 31v1M75.5 69v1M40.5 10v1M66 12.5h3M14 11.5h1M65 30.5h1M13 4.5h3M54 15.5h1M31.5 10v3M69 44.5h1M77.5 26v1M86.5 95v1M88.5 55v2M47 66.5h1M11.5 80v1M14 39.5h1M65.5 28v1M64 91.5h1M79 19.5h1M8 48.5h3M51 78.5h2M37 74.5h2M29.5 1v1M61 14.5h3M73.5 59v1M76 33.5h3M6.5 11v2M6 50.5h1M65 30.5h1M93.5 69v1M53 0.5h1M4 17.5h1M54 9.5h1M93.5 54v1M93.5 46v1M15.5 12v1M29 93.5h1M83 96.5h3M89 16.5h1M8 3.5h3M37 32.5h1M79 61.5h1M16 24.5h1M51.5 23v1M47 30.5h1M32.5 64v1M51.5 40v1M56 11.5h1M82.5 76v1M61.5 61v1M47.5 75v1M16 83.5h3M10.5 32v1M24.5 75v1M3 72.5h1M18 83.5h1M28 88.5h3M74 42.5h1M7.5 7v3M59 19.5h1M49.5 75v2M57.5 35v1M75.5 64v1M11 71.5h1M56.5 40v1M41 53.5h1M21.5 91v1M72 19.5h1M2 52.5h3" stroke="#000010" stroke-width="1" fill="none"/>
</pattern>
<pattern id="nk2" width="89" height="89" patternUnits="userSpaceOnUse">
<path d="M60 61.5h1M63 54.5h1M40 58.5h1M1 56.5h2M15 58.5h1M19 81.5h1M59 58.5h1M18.5 51v1M55 64.5h1M36 50.5h1M65.5 3v3M74.5 61v1M36 83.5h1M76 24.5h1M2 44.5h1M52 7.5h1M44 2.5h2M21 51.5h1M81 57.5h1M36.5 72v2M34.5 57v1M1 60.5h3M73.5 13v2M27.5 20v3M2 0.5h3M15 42.5h1M41 50.5h1M80 47.5h1M1 58.5h1M40 88.5h1M15 31.5h1M65 7.5h2M10 85.5h1M70.5 23v3M79 36.5h1M52 19.5h1M48 62.5h1M73.5 55v1M76 7.5h2M30 87.5h1M58.5 31v2M66 40.5h1M85.5 78v1M81 78.5h1M79 24.5h1M83 39.5h1M0.5 34v2M40.5 75v1M21 63.5h1M48 31.5h1M34 27.5h1M39.5 22v1M37 62.5h1M20 49.5h1M24 83.5h1M7 75.5h1M27 19.5h1M1 56.5h1M34.5 8v3M85.5 32v3M57.5 7v2M85.5 43v2M16 75.5h3M18 43.5h1M64.5 22v2M71 75.5h2M34.5 44v2M26.5 78v1M54 34.5h1M87 19.5h1M52 67.5h1M23 77.5h3M83 59.5h1M35 47.5h1M69.5 45v1M81.5 23v1M74 63.5h1M74.5 5v2M81 19.5h1M8 24.5h1M74.5 86v2M80.5 12v2M64.5 71v1M2.5 56v3M83 61.5h2M46.5 47v1M53.5 32v1M39 29.5h1M19.5 85v2M1.5 31v1M10.5 68v1M33 46.5h1M86.5 23v1M22.5 56v2M85 48.5h1M51 23.5h1M20.5 28v3M77 4.5h1M24 8.5h1M7.5 35v1M71 64.5h2M42.5 47v2M27.5 9v1M15 58.5h1M34.5 73v1M45 12.5h3M87 26.5h1M84 34.5h1M37 9.5h3M75.5 65v2M72.5 20v1M12 85.5h1M36 56.5h3M13.5 11v1M20 51.5h3M10 24.5h1M23.5 69v1M44.5 34v2M41.5 83v1M51.5 62v1M82 49.5h3M81 12.5h1M54.5 86v3M34.5 56v3M63 43.5h1M21 33.5h1M3.5 76v1M60 10.5h1M47.5 84v1M71.5 31v1M23.5 38v1M4.5 24v2M71 87.5h1M62 41.5h1M32 29.5h3M8.5 28v2M53 87.5h2M45 56.5h1M66 26.5h1M57.5 43v1M68 12.5h1M70.5 36v3M36 63.5h3M40 14.5h1M67 64.5h1M43 79.5h2M30 21.5h1M68 84.5h3M68.5 13v1M59.5 11v2M64.5 44v1M25.5 34v1M8 37.5h1M42 38.5h1M75 11.5h1M67.5 14v1M71.5 39v3M8 33.5h1M83 5.5h1M55.5 15v1M73.5 82v1M82 88.5h1M9 76.5h1M10 88.5h1M18 45.5h3M12 61.5h1M64 5.5h1M34 57.5h1M77.5 71v1M10.5 17v1M15 15.5h1M69.5 18v2M65.5 6v3M15 40.5h3M84 31.5h1M57.5 29v1M20.5 5v1M21.5 52v2M6.5 37v3M70 16.5h1M88.5 3v1M43.5 75v3M14.5 11v1M42.5 85v2M23 64.5h1M8 72.5h3M20.5 44v1M15.5 37v1M85.5 47v1M50 57.5h1M40.5 84v2M32 79.5h2M65.5 65v1M37 46.5h1M48 30.5h1M19 2.5h1M42.5 86v1M27.5 28v1M70 3.5h1M24 5.5h1M73 65.5h2M55 41.5h1M6.5 40v1M34 87.5h1M75.5 44v1M42 84.5h1M24.5 80v1M71 24.5h3M3 70.5h3M53 37.5h1M57 34.5h3M27.5 31v1M77.5 57v1M69 50.5h1M5.5 18v1M33.5 82v1M67 41.5h1M38.5 44v1M28.5 80v1M87.5 22v1M14 80.5h3M8 29.5h1M9.5 16v1M59.5 42v1M11.5 84v2M49 84.5h1M48 21.5h1M83.5 68v1M34 53.5h1M87.5 86v1M54.5 81v2M77 24.5h3M59 50.5h1M21.5 11v2M13.5 51v1M75 41.5h1M24.5 67v1M65 56.5h1M52.5 30v1M47.5 70v3M57 56.5h2M66 34.5h1M20.5 34v3M74.5 26v1M42 79.5h1M32.5 51v1M30 25.5h1M82.5 15v1M63.5 47v1M5.5 41v1M29 36.5h2M23 61.5h1M30 47.5h1M35 53.5h1M81 22.5h1M5 77.5h1M85 32.5h1M33.5 10v3M54 5.5h1M29 87.5h2M10.5 81v3M66.5 20v1M65 35.5h1M56.5 26v3M20.5 86v1M6.5 63v3M46 29.5h1M32 48.5h1M12 18.5h1M38.5 82v1M46.5 61v1M21.5 13v2M70.5 30v1M78.5 52v1M49.5 67v1M88 54.5h1M51.5 62v1M3 4.5h1M21 81.5h3M13 55.5h1M51.5 15v2M72 37.5h1M20.5 28v1M46 73.5h1M14 2.5h2M78 30.5h2M68.5 40v1M10.5 37v1M87 36.5h1M15 82.5h1M7.5 42v1M55 39.5h1M66 73.5h1M13 47.5h1M27 34.5h1M84.5 38v1M80.5 47v2M51.5 71v1M54 69.5h1M21 20.5h1M74 42.5h1M26.5 29v1M73 23.5h1M29.5 15v1M87.5 56v1M78.5 55v1M8.5 10v1M88 20.5h1M72.5 3v1M5 4.5h3M44.5 79v1M53.5 79v1M8.5 65v1M22 49.5h1M3.5 9v1M23.5 45v1M53 48.5h1M5 61.5h1M38.5 9v3M4 55.5h1M84.5 16v2M64 33.5h3M85 88.5h1M26 57.5h1M43.5 53v1M50 3.5h2M86.5 82v1M14.5 55v1M71.5 71v1M77 78.5h1M17 29.5h3M61.5 52v2M2 4.5h1M8 61.5h1M50.5 82v1M22.5 80v1M1.5 68v1M65 48.5h3M5 75.5h1M29.5 31v1M50 27.5h1M73 59.5h3M17.5 20v1M88 9.5h1M11.5 34v2M7 50.5h3M75.5 41v2M9 17.5h1M19.5 29v1M47 24.5h1M62.5 16v1M73 44.5h1M13 49.5h1M22 22.5h3M55 67.5h1M75.5 49v3M84 88.5h3M86.5 50v3M53.5 9v1M80 69.5h1M51 3.5h1M40.5 32v2M71.5 45v1M72 65.5h1M73 44.5h3M23.5 40v1M41 81.5h1M64 59.5h1M62.5 1v1M72.5 10v1M71.5 36v1M48 54.5h1M3.5 17v1M10.5 78v1M42 15.5h2M69.5 5v3M57.5 8v3M60 46.5h2M61.5 17v1M79.5 83v1M43 85.5h1M54.5 83v3M6.5 16v1M58 18.5h1M20 86.5h2M3 54.5h1M35.5 11v1M77 76.5h1M58 8.5h1M78 19.5h1M58.5 59v1M8 76.5h1M78.5 55v2M56.5 69v1M64 16.5h1M0.5 54v1M25 73.5h2M20 23.5h1M41 7.5h1M35.5 69v1M43 51.5h1M78 5.5h1M59.5 32v2M36 88.5h1M77.5 51v1M75 43.5h1M31 88.5h1M22 57.5h1M87.5 43v1M36.5 34v3M22 49.5h1M54.5 27v1M7.5 22v1M76.5 23v1M56 33.5h2M1.5 60v1M18 58.5h1M24 16.5h1M43.5 6v3M29.5 14v1M81 87.5h3M14 78.5h3M88 70.5h3M26.5 14v3M47.5 52v1M70 5.5h1M80.5 68v1M4 1.5h1M64 11.5h3M83.5 26v2M78 31.5h3M9 75.5h2M39 36.5h1M36.5 51v2M74 0.5h3M22 63.5h3M74.5 84v1M70.5 46v1M5.5 50v1M39 64.5h1M10.5 4v1M27.5 80v1M35.5 0v3M30 38.5h2M45 50.5h1M19.5 88v1M70.5 66v1M16 26.5h1M52 83.5h1M88.5 69v1M23.5 33v1M68.5 19v3M19 82.5h3M44.5 2v1M50 74.5h3M50.5 66v1M9 87.5h1M37 23.5h1M68 61.5h1M86.5 57v1M19.5 28v1M66.5 10v1M83.5 54v3M20 59.5h1M4.5 29v1M20 29.5h1M70 63.5h2M49 87.5h1M22.5 7v1M88 33.5h3M16.5 63v1M41 53.5h1M73 81.5h3M67 74.5h1M32.5 85v1M61 85.5h1M57 4.5h1M15.5 32v1M0.5 24v1M26 72.5h3M58 84.5h1M81.5 43v1M36.5 64v1M5 73.5h1M88 70.5h1M62 5.5h1M48 29.5h3M4 50.5h1M80 26.5h2M87 65.5h1M11 23.5h2M20 22.5h1M17 88.5h1M81.5 38v2M53.5 30v1M64.5 34v1M7.5 77v2M43.5 5v1M43 21.5h1M69.5 73v1M52 4.5h1M66.5 34v3M42.5 49v1M9 78.5h1M9.5 23v1M77 57.5h3M13.5 42v3M68.5 61v2M25 20.5h1M72 18.5h2M77 27.5h3M53.5 58v1M70 70.5h1M10 65.5h3M62 55.5h1M65.5 70v1M47 75.5h1M82 18.5h1M0.5 18v1M22 16.5h1M46 63.5h1M85.5 16v1M70.5 78v3M2 71.5h1M26 35.5h1M84 34.5h1M48.5 85v3M32.5 71v1M6 24.5h1M17 8.5h1M53 77.5h1M3.5 57v1M51.5 69v2M86.5 20v2M77 28.5h1M53.5 62v2M29.5 10v1M9 50.5h1M30 45.5h1M2.5 85v2M32.5 45v1M87 84.5h2M41 12.5h1M68 64.5h1M39 25.5h1M39.5 67v1M59 44.5h2M71.5 85v1M41 75.5h1M4 24.5h2M48.5 41v1M47.5 32v1M32.5 23v2M85 76.5h1M51.5 29v1M21 46.5h3M1 51.5h2M55.5 31v1M85 26.5h1M71 28.5h1M3 50.5h1M54.5 55v1M18.5 46v1M54.5 1v1M71 30.5h1M18 30.5h1M18 8.5h1M56 5.5h3M13.5 33v1M70 27.5h1M47.5 53v1M12.5 68v1M52 41.5h3M81.5 46v1M83 18.5h1M18 29.5h1M47.5 14v1M41.5 21v1M14 40.5h1M11 23.5h1M42 26.5h1M38 30.5h1M22 57.5h3M22 61.5h3M48 37.5h2M68 11.5h1M38.5 7v1M35.5 26v1M30 7.5h1M67.5 56v1M11 55.5h1M21.5 62v2M13 14.5h1M77 3.5h1M62.5 59v1M53 51.5h1M42 68.5h1M8.5 52v1M81.5 2v1M3.5 27v3M13 3.5h1M28 0.5h2M43 12.5h1M1.5 49v3M57.5 36v1M54 48.5h3M47.5 8v2M84.5 74v1M23.5 27v1M88.5 27v3M17 42.5h1M71 60.5h2M0 15.5h1M52.5 1v1M74 67.5h3M22.5 43v1M79.5 21v1M82 80.5h3M32.5 44v2M6.5 58v1M64 35.5h1M79.5 74v1M9 41.5h3M51 29.5h1M50 25.5h1M34 46.5h1M28.5 0v2M15 11.5h1M83 83.5h1M32 67.5h1M64.5 45v1M27.5 15v3M26 18.5h1M57.5 85v1M17 80.5h1M71.5 54v1M9.5 42v2M32.5 84v1M72.5 60v1M36 34.5h2M43 16.5h1M50.5 83v1M50.5 7v1M76 73.5h1M72 78.5h1M70 80.5h2M10 30.5h1M59.5 56v1M8.5 79v1M24 74.5h2M14.5 25v1M15.5 71v1M35.5 28v1M4 21.5h1M80.5 54v3M65 27.5h2M25 39.5h1M26.5 73v1M39.5 5v3M75 48.5h1M79 67.5h1M69.5 75v3M57 52.5h1M47.5 51v2M81 43.5h1M13.5 50v1M80.5 67v1M25 49.5h3M74 45.5h1M46 36.5h1M36.5 21v3M43.5 61v3M79.5 61v3M52.5 48v1M86 55.5h1M25.5 76v1M78 4.5h1M36 55.5h1M11.5 63v3M10.5 18v1M51 79.5h2M58.5 22v1M7.5 16v3M12 28.5h1M9.5 65v1M60.5 24v1M6 59.5h2M63.5 22v3M53 60.5h1M9.5 4v1M9.5 23v1M36 13.5h1M49.5 74v3M18.5 9v1M49 36.5h1M28.5 57v1M45 59.5h1M78.5 28v2M42 26.5h1M58 65.5h2M86.5 70v1M46 53.5h1M88 21.5h3M67.5 39v2M36.5 45v1M72.5 49v1M44.5 19v1M27.5 16v1M60 74.5h1M28 54.5h1M82.5 33v1M24.5 69v1M63 12.5h1M65.5 76v1M19.5 37v1M20 80.5h1M49.5 62v3M12.5 60v1M40.5 6v1M59.5 80v1M30.5 17v1M0 85.5h1M12 12.5h1M39.5 70v3M76 11.5h1" stroke="#000010" stroke-width="1" fill="none"/>
<path d="M52.5 84v1M37 38.5h3M59.5 58v1M39.5 46v1M66 47.5h1M18 29.5h2M84 83.5h1M11 69.5h1M30 67.5h1M14 53.5h2M62.5 38v1M39.5 63v1M75 56.5h1M80.5 85v1M59.5 10v3M1 80.5h1M49.5 80v1M78.5 88v1M44 26.5h1M59 10.5h3M87 51.5h1M21.5 24v2M75 68.5h1M53.5 19v1M40.5 21v1M34 24.5h1M77 25.5h1M22.5 49v2M3 82.5h1M68 2.5h1M21 33.5h1M63 16.5h1M67 36.5h1M25 77.5h1M81 86.5h1M84.5 85v1M49 55.5h1M22.5 43v3M25 55.5h1M76 70.5h1M78.5 47v3M43.5 1v1M47.5 86v1M2 8.5h1M87 62.5h3M25.5 48v2M79 85.5h1M62 33.5h1M70 66.5h1M76 85.5h1M14 70.5h1M79.5 38v1M0 77.5h3M48 66.5h1M11 34.5h2M28 85.5h1M67.5 76v1M41 63.5h1M40 14.5h1M24.5 77v1M70 53.5h2M57 61.5h1M19.5 77v1M30 0.5h1M38 49.5h2M41.5 12v2M39 67.5h2M66 3.5h3M10.5 6v3M82 72.5h2M20.5 4v1M30 9.5h1M3.5 83v1M74 18.5h1M67 7.5h1M45 45.5h1M11.5 77v1M52 27.5h1M3 44.5h1M35.5 60v1M78.5 56v1M72 23.5h2M16.5 23v3M26 3.5h1M37 86.5h3M36 75.5h3M12 50.5h1M77 28.5h1M70 84.5h1M88.5 33v1M62.5 60v1M52.5 41v1M43 83.5h3M74.5 27v1M50 37.5h3M88.5 44v1M58 14.5h1M14 5.5h1M58 9.5h2M22 22.5h1M49 49.5h1M30.5 57v1M47.5 2v1M29.5 65v1M6.5 83v1M34.5 13v1M29 43.5h1M25 52.5h1M63.5 36v1M42.5 67v3M74 63.5h1M59.5 74v1M10.5 33v1M42.5 76v1M73 22.5h1M40 78.5h1M70 85.5h1M36 80.5h1M32.5 87v3M46 80.5h1M67 76.5h1M11 13.5h3M21.5 2v1M85 50.5h1M10 32.5h1M1.5 5v1M76 46.5h1M84.5 85v1M46.5 82v1M84.5 27v1M74 34.5h2M49.5 73v1M84.5 65v1M11.5 59v1M47.5 61v1M44.5 52v1M0 72.5h1M42.5 78v1M20.5 14v1M71 61.5h1M14 35.5h1M32 87.5h1M23 68.5h1M2.5 30v2M50 3.5h1M21.5 43v1M16.5 19v1M32.5 60v1M59.5 8v1M62.5 53v3M75 31.5h1M22 34.5h1M60 27.5h1M31.5 4v1M22 35.5h2M49 56.5h1M16 60.5h1M47 63.5h3M42 49.5h1M54.5 76v1M40 76.5h1M23.5 61v1M74 22.5h1M10.5 69v3M4.5 11v3M19 80.5h1M50.5 51v1M23.5 72v1M67.5 26v3M48 65.5h1M64 82.5h1M16 7.5h1M7 2.5h1M41.5 68v1M53.5 46v2M31.5 24v2M55 28.5h1M66.5 12v1M0 36.5h1M78 23.5h1M60 75.5h2M31 25.5h1M19 11.5h1M52 27.5h1M64.5 11v2M14.5 78v3M75.5 72v1M46 39.5h1M83.5 47v1M57 42.5h1M9.5 7v1M66.5 67v1M52.5 57v1M80 61.5h2M4.5 78v3M48 61.5h1M25.5 71v1M8.5 22v1M2 64.5h3M74 88.5h1M62 41.5h2M80 22.5h1M40 59.5h3M47 69.5h1M2 48.5h1M73 87.5h1M5.5 67v3M82.5 65v1M33 59.5h1M60.5 79v3M81.5 2v1M64 65.5h1M0 75.5h2M28.5 69v1M12.5 72v1M74.5 14v1M1.5 47v1M70 46.5h2M68 81.5h1M9 27.5h2M60 24.5h1M11 74.5h1M58 88.5h1M31.5 40v3M5 23.5h1M64.5 17v1M28 1.5h1M56.5 17v1M87 67.5h1M16 85.5h1M15.5 39v1M87 46.5h1M17.5 29v3M37.5 14v1M12.5 66v2M85.5 82v1M30 66.5h1M55 25.5h1M42.5 88v1M68 62.5h1M17 4.5h1M28 74.5h1M40.5 62v1M25 20.5h1M65 59.5h1M13 14.5h1M26 19.5h1M42 47.5h1M10.5 39v3M2 35.5h3M82 44.5h1M41.5 25v1M62 5.5h1M58.5 84v2M85.5 18v1M17.5 35v1M45 86.5h2M24.5 20v1M61.5 75v1M45 7.5h1M67 7.5h1M46 75.5h1M23 73.5h1M10 28.5h3M81 17.5h1M73 60.5h1M46 13.5h1M88.5 83v1M14.5 24v2M40.5 58v1M5 77.5h1M74 67.5h1M49 5.5h1M33.5 56v1M25.5 13v1M15.5 81v1M38.5 19v1M9 37.5h1M86.5 46v1M35.5 56v1M53 54.5h1M2.5 24v3M69.5 78v2M17 15.5h1M60.5 33v1M42 20.5h1M46.5 42v1M35.5 24v1M13 24.5h1M40.5 22v3M12.5 72v1M60.5 34v1M41.5 43v3M21 87.5h2M78 14.5h1M51.5 41v3M15.5 47v3M45.5 22v1M29.5 87v1M43 30.5h1M15.5 75v1M46.5 15v1M6 32.5h1M13 81.5h1M22.5 19v1M23 17.5h3M19.5 31v1M30.5 47v1M74 59.5h1M51.5 2v2M48 13.5h1M55.5 63v1M59.5 43v1M17.5 53v1M23 46.5h1M19 85.5h1M34 72.5h1M33.5 22v1M9 55.5h1M1 86.5h1M88 70.5h1M14.5 5v1M35 36.5h3M36 37.5h1M33.5 1v1M54 75.5h1M84 87.5h1M27.5 72v2M14 42.5h1M10.5 82v3M15.5 35v3M15 32.5h1M33.5 44v1M22.5 68v3M84 60.5h1M23.5 3v1M74.5 36v1M66 86.5h2M64 36.5h1M4.5 45v1M81.5 88v1M32 19.5h1M11.5 53v1M62.5 22v1M73 52.5h3M76.5 21v2M22 12.5h1M45 80.5h2M10.5 22v1M67.5 25v1M50 33.5h1M69 33.5h1M55.5 87v3M14.5 22v1M10.5 77v2M61 50.5h3M35 34.5h1M80.5 27v1M45.5 18v1M33.5 81v1M83.5 75v3M32 26.5h2M60 0.5h1M43.5 22v2M7 87.5h3M18 3.5h1M18 88.5h1M23 36.5h1M21 7.5h1M80 55.5h1M32.5 77v1M50 56.5h1M36.5 59v1M27.5 79v3M50.5 10v1M35 34.5h1M23 43.5h1M75.5 47v1M8.5 54v3M6 58.5h1M20.5 64v3M3 35.5h1M27 2.5h2M67 24.5h2M59 37.5h1M61 14.5h1M43 57.5h1M18.5 70v3M42.5 9v3M73.5 4v1M3 81.5h3M11.5 78v2M26 67.5h1M22.5 70v1M87 41.5h1M11.5 3v1M13 41.5h1M39 81.5h1M8.5 9v1M53.5 38v2M74.5 39v3M65 33.5h1M59 27.5h1M85.5 24v1M17 59.5h1M12.5 5v1M20.5 19v1M33 50.5h2M27.5 46v1M69.5 57v1M56.5 88v1M24 85.5h2M11.5 88v2M29.5 62v3M25 28.5h1M48 34.5h1M44.5 5v1M8 87.5h3M76.5 29v1M83.5 21v1M84 22.5h1M59 78.5h3M9.5 23v1M48.5 77v1M73 81.5h1M78.5 5v1M0 23.5h3M62.5 67v1M85.5 29v1M72 23.5h1M72 38.5h1M81.5 2v3M24.5 59v1M56.5 56v1M67.5 13v1M73.5 55v1M73 44.5h1M51 3.5h1M8.5 38v1M7 18.5h1M75.5 29v1M60.5 24v1M76.5 52v1M87.5 83v1M61 36.5h3M54.5 62v1M36 19.5h2M26.5 88v1M10.5 48v1M52.5 35v1M46 65.5h1M5 70.5h1M77.5 71v1M34.5 87v1M20.5 14v2M41 85.5h2M37.5 13v1M1.5 3v1M39.5 30v2M4.5 86v1M22 37.5h1M78.5 66v1M48.5 74v1M65.5 20v1M5 51.5h3M11 39.5h1M84.5 22v1M13.5 60v3M15.5 59v1M59 21.5h1M16 37.5h1M24 84.5h1M63 59.5h1M74 4.5h1M17.5 64v3M67.5 37v2M34 52.5h1M51 35.5h1M48.5 23v2M22.5 25v1M82.5 23v1M64 62.5h2M65.5 56v1M78.5 25v1M79.5 58v2M62 39.5h1M0.5 46v1M25 18.5h2M35.5 27v1M50 31.5h1M49 4.5h1M84 49.5h1M73.5 21v1M70.5 38v3M35 74.5h1M68 51.5h1M67.5 45v1M1 3.5h1M28.5 85v3M2.5 82v1M53.5 0v1M8 40.5h1M79.5 36v1M60.5 88v1M87.5 86v2M7.5 54v1M27.5 65v1M77.5 20v1M85.5 11v1M0.5 5v1M13.5 41v1M88.5 71v1M59.5 37v1M20.5 1v1M39 41.5h2M58.5 36v1M64.5 13v2M0 64.5h3M84.5 18v1M71.5 7v1M10.5 79v3M20.5 2v1M34 68.5h1M71 43.5h2M53 41.5h1M14.5 43v2M45.5 9v2M59.5 70v1M56.5 48v1M61.5 59v1M8 84.5h2M12.5 28v2M86.5 65v1M63 64.5h2M80.5 60v3M43 50.5h1M61.5 81v1M23 64.5h1M50 82.5h1M53 16.5h1M59 3.5h1M22.5 77v1M10 22.5h1M68 24.5h1M8 73.5h3M87 10.5h1M74 87.5h1M80.5 12v1M65.5 83v1M79.5 38v1M75.5 46v1M85.5 27v1M63 72.5h1M58 56.5h2M73 6.5h1M67.5 75v1M50.5 41v1M22 71.5h1M3 55.5h1M1 13.5h1M59.5 25v1M20.5 24v1M43 51.5h1M3.5 49v1M52.5 9v1M60.5 40v3M17.5 74v2M20 67.5h1M76 35.5h1M59.5 57v3M86 39.5h2M50 75.5h2M40.5 15v3M66 20.5h1M22 4.5h3M86 24.5h3M85 80.5h1M42 60.5h1M83.5 56v1M19.5 16v2M27.5 35v1M38.5 25v3M13 70.5h1M83.5 88v1M76 21.5h1M53 8.5h1M71 72.5h3M56 51.5h1M64 5.5h1M70 75.5h1M32 9.5h1M16 79.5h1M37 13.5h1M26 86.5h1M53 26.5h1M0.5 3v2M21.5 81v1M16 7.5h1M19 41.5h1M78.5 30v1M45.5 42v1M25.5 28v1M22.5 82v1M61 72.5h1M81 18.5h3M0.5 4v2M56.5 68v1M55.5 72v1M18.5 44v3M41.5 21v1M38.5 38v1M35.5 11v1M5 36.5h3M76.5 67v1M66.5 24v1M71 12.5h1M43.5 85v2M11.5 36v2M77 42.5h1M76.5 74v3M23.5 35v1M21 0.5h1M81.5 75v1M7.5 79v1M12.5 2v1M47.5 58v1M18 9.5h1M42 34.5h1M40 48.5h1M6.5 21v2M65.5 84v3M88.5 12v1M12.5 32v1M64 4.5h2M5.5 59v1M8 51.5h2M38 57.5h1M44 54.5h1M78.5 67v1M62 28.5h1M16 27.5h2M72.5 64v2M75.5 72v1M6.5 1v1M47 3.5h1M33 37.5h2M34.5 17v1M39.5 40v1M4.5 28v1M68 47.5h1M70 39.5h1M38 31.5h3M23 26.5h1M40 13.5h1M16 83.5h1M70 67.5h2M65.5 55v1M85.5 71v1M71.5 29v3M76 85.5h1M84 60.5h1M28.5 39v1M14.5 11v1M28 48.5h1M4.5 81v1M20 1.5h3M79 65.5h1M22 55.5h1M6.5 17v1M64 25.5h1M83.5 23v2M9 84.5h3M30 26.5h1M19 82.5h1M3.5 42v3M40 0.5h1M7 31.5h1M77.5 70v1M58.5 48v1M77 73.5h1M40.5 72v1M20 63.5h1M10 2.5h1M73.5 12v1M17.5 33v1M64.5 45v1M42 34.5h1M8 2.5h2M28.5 33v1M77 88.5h3M39.5 3v1M60.5 28v1M56 82.5h2M62 85.5h1M17.5 42v1M66.5 11v1M79 37.5h1M68.5 25v1M36 59.5h1M15.5 53v2M62.5 41v1M3.5 48v1M85.5 27v3M73 87.5h2M43.5 42v2M58 54.5h1M45.5 42v1M81.5 36v1M59 78.5h3M44.5 84v1M79 81.5h1M24.5 27v1M60 83.5h1M6 37.5h2M36.5 23v1M6.5 14v1M20 10.5h1M66.5 0v1M73 25.5h1M35.5 9v1M66.5 88v3M23.5 46v1M63.5 37v1M81.5 75v1M73 80.5h1M87.5 72v1M34 80.5h1M27.5 69v1M32.5 62v1M19.5 81v1M13 34.5h1M12.5 77v1M74.5 51v1M85 9.5h1M68.5 10v1M69 65.5h3M1.5 60v1M29.5 62v1M0 48.5h3M74 34.5h2M66.5 59v1M80.5 77v1M16 67.5h1M88 54.5h3M53 69.5h2M53.5 39v1M35.5 0v1M14.5 5v1M75.5 79v2M35.5 25v1M61.5 21v1" stroke="#000000" stroke-width="1" fill="none"/>
<path d="M77 39.5h1M32.5 2v3M37.5 74v1M85 87.5h1M5.5 14v1M18 34.5h1M25 54.5h3M63.5 22v1M42.5 68v1M79.5 26v1M88.5 28v1M69.5 84v3M22 13.5h1M20.5 26v1M85.5 70v1M52.5 3v1M68.5 0v2M18 78.5h1M56.5 40v1M33.5 48v1M61 2.5h1M10 35.5h1M52.5 11v2M52.5 65v1M18 30.5h1M1.5 52v1M55 81.5h1M76.5 84v1M25.5 78v1M31 34.5h1M39.5 31v1M77 82.5h3M76 59.5h1M83.5 47v3M75 53.5h1M48 68.5h1M31.5 59v2M56 38.5h2M32.5 20v1M57.5 47v2M51 40.5h1M68 31.5h1M11.5 44v2M81 72.5h1M12 23.5h1M25.5 26v1M72 30.5h1M85 56.5h2M0.5 22v1M53 21.5h1M23 61.5h2M88.5 46v1M8.5 38v1M30.5 70v1M54.5 85v1M56.5 19v1M44 23.5h3M81 40.5h1M26 8.5h1M17 2.5h1M18.5 45v1M5.5 33v1M55 56.5h2M41 87.5h1M81.5 28v1M63 10.5h1M78 59.5h1M36 58.5h1M67 23.5h1M48 35.5h1M53 63.5h1M4.5 10v1M79 87.5h1M74.5 52v1M88 85.5h1M33 53.5h1M22.5 74v1M62.5 35v3M5.5 46v1M53 74.5h1M57.5 41v1M42 12.5h1M51 23.5h1M71.5 66v1M5.5 32v1M82.5 58v1M34.5 31v1M81 50.5h1M78 75.5h1M46.5 21v1M25 45.5h1M46 58.5h1M7 60.5h1M47 6.5h1M76.5 6v1M43 82.5h1M1.5 56v2M45 43.5h2M5 41.5h1M71.5 40v2M69 20.5h1M71.5 51v1M67.5 7v3M82.5 83v1M25.5 10v3M32.5 13v1M13.5 27v2M83 8.5h1M5 55.5h1M35 3.5h1M52.5 24v1M83 1.5h2M59.5 11v1M6.5 79v3M64 66.5h1M33 31.5h1M85.5 63v3M2 87.5h1M16.5 32v2M34 14.5h1M31 69.5h1M51 2.5h1M30.5 81v2M16 81.5h2M51.5 5v1M59 48.5h1M81 30.5h2M78.5 14v1M81.5 70v3M24 1.5h2M33.5 20v3M60 49.5h1M46 76.5h1M35 28.5h1M27.5 20v1M7.5 39v2M71 83.5h3M24.5 49v1M62.5 88v1M26 31.5h1M3 28.5h2M13.5 6v1M87 64.5h1M85 75.5h3M74.5 60v1M11 86.5h1M6 43.5h1M37.5 68v3M0 35.5h3M54.5 37v1M69.5 67v2M55 60.5h3M77 71.5h1M33 33.5h1M38.5 10v1M61.5 16v1M42.5 84v2M83.5 1v1M15 59.5h3M67 80.5h1M10.5 40v1M48 37.5h3M52.5 80v1M10.5 65v1M11 26.5h1M63 12.5h1M29.5 5v2M49.5 68v1M10.5 87v1M44.5 22v1M14 55.5h3M6.5 22v1M50 67.5h1M82 9.5h2M72.5 9v1M35.5 73v1M55.5 47v1M76 86.5h1M73 0.5h1M33.5 19v2M26 21.5h3M14 15.5h1M15.5 39v1M57 18.5h2M15.5 65v1M28.5 34v1M48 52.5h1M50.5 31v1M75 80.5h1M82 40.5h3M30 62.5h1M70 53.5h3M63 11.5h1M8 8.5h1M48.5 47v1M20 80.5h1M78.5 50v1M29 66.5h1M23 54.5h1M38 81.5h1M15.5 39v1M85 13.5h1M6.5 57v1M27 35.5h1M47.5 48v1M7 75.5h1M88 88.5h1M83 65.5h1M3 13.5h3M54.5 49v1M34 78.5h3M34 27.5h1M65 9.5h2M21.5 81v3M23.5 52v1M10.5 46v1M37 74.5h1M70.5 87v1M38.5 42v2M80.5 12v3M42 67.5h1M74 78.5h1M23.5 29v1M19.5 29v1M22.5 23v2M27 78.5h1M31 22.5h1M19 66.5h3M29 18.5h3M86 74.5h1M19.5 16v1M42.5 59v1M71 63.5h2M10 67.5h1M65 29.5h3M75.5 76v1M49 32.5h1M19 36.5h3M28.5 67v1M85.5 18v2M51.5 45v1M86.5 25v2M72.5 64v1M77 78.5h3M22 17.5h1M86.5 76v1M71.5 43v1M48 46.5h2M26 58.5h2M53.5 6v1M5.5 75v1M55.5 78v1M78.5 9v1M73 3.5h3M76 21.5h3M55.5 52v1M33.5 49v3M84 32.5h1M27 69.5h1M34 41.5h1M40 43.5h2M31.5 71v1M66 35.5h1M81 83.5h2M55.5 59v1M23.5 10v1M22.5 14v3M29 15.5h1M38 49.5h1M35 20.5h3M83 8.5h1M62.5 37v1M25 65.5h1M1.5 5v3M53 69.5h3M29 29.5h1M20.5 3v3M64 80.5h1M35.5 79v1M6.5 38v1M70 30.5h3M4 4.5h3M83.5 67v1M80 75.5h1M29 65.5h1M86 3.5h1M28.5 62v1M73.5 31v1M81 15.5h1M29 31.5h1M47 87.5h1M79 59.5h1M61.5 69v1M86 27.5h1M3.5 67v1M81 18.5h1M58.5 51v1M50 3.5h1M59 6.5h3M5.5 75v1M61 1.5h1M30.5 36v3M36.5 61v1M34 46.5h1M62.5 51v2M56.5 71v3M59.5 80v2M45.5 4v1M73.5 13v2M38 2.5h2M30 75.5h1M39 70.5h1M0.5 85v1M55.5 0v1M45 45.5h1M51.5 5v1M66 26.5h1M64.5 42v1M43 22.5h1M53.5 20v2M44.5 24v1M19.5 55v3M84 50.5h3M3 41.5h2M25 40.5h1M42 21.5h2M52.5 80v1M2 55.5h3M82 49.5h1M28.5 88v1M14.5 11v1M25 29.5h3M4.5 8v1M56.5 5v1M84.5 81v1M54.5 80v1M24.5 51v1M50 56.5h1M43 31.5h3M11.5 72v1M10 60.5h2M1 29.5h1M18 54.5h1M88.5 27v1M87.5 44v1M57.5 30v3M40.5 55v2M4.5 2v1M42 29.5h2M5 10.5h1M7 62.5h1M16.5 83v3M5.5 23v3M38.5 80v3M25 61.5h1M28.5 24v1M42 16.5h1M83.5 67v1M61 40.5h1M26 33.5h1M65 22.5h1M48 43.5h3M6 17.5h1M34 0.5h1M72.5 19v1M19.5 68v3M46.5 48v1M65 70.5h1M22.5 25v1M5.5 39v1M46 18.5h1M85.5 27v3M72 31.5h1M52 45.5h1M19 7.5h1M86.5 22v1M76.5 75v3M54 23.5h3M34.5 1v1M41.5 63v3M87 24.5h1M38 55.5h1M72.5 52v1M27 29.5h2M9.5 13v1M71 3.5h3M34.5 24v1M22.5 55v1M82 8.5h1M60 65.5h1M45.5 50v1M36.5 18v1M78.5 76v1M82.5 52v1M56.5 40v1M2 65.5h3M68 57.5h1M69.5 30v1M58.5 35v1M67.5 7v1M7.5 24v1M23.5 43v1M13.5 19v1M19.5 60v3M21.5 78v1M83.5 1v1M49 84.5h1M43 1.5h1M87.5 20v1M21 61.5h1M10.5 57v1M52.5 60v2M4.5 48v1M61.5 5v2M5.5 9v1M36 70.5h2M83 49.5h1M50.5 24v1M31 60.5h1M16 32.5h1M23 55.5h1M40.5 23v1M55 14.5h1M68 74.5h1M48 38.5h3M7 47.5h3M78.5 38v1M18 6.5h1M70 57.5h1M30.5 61v1M15.5 73v1M61 83.5h1M36.5 77v1M24 45.5h1M50 52.5h1M46.5 3v1M56 46.5h1M38.5 17v1M28 51.5h1M24.5 28v1M34 48.5h1M87.5 29v1M37 25.5h1M63 37.5h2M3 16.5h1M0 34.5h1M64.5 37v1M74.5 73v1M38.5 43v2M20.5 70v1M33.5 58v2M63 0.5h1M62 19.5h1M85.5 50v1M31.5 77v1M18 45.5h2M42 57.5h1M16.5 41v1M6.5 59v2M33.5 28v3M46 77.5h1M61.5 14v1M48 41.5h1M44.5 49v1M5 55.5h3M77.5 50v1M88 2.5h1M45 78.5h1M8.5 78v3M42 40.5h1M87 44.5h2M9 45.5h1M43 83.5h1M2.5 12v1M61.5 0v2M22 77.5h2M77 32.5h1M18 30.5h1M32.5 39v1M86 72.5h3M74.5 88v1M17.5 87v1M38.5 3v1M41 59.5h1M10.5 65v2M24.5 0v1M26 34.5h1M54.5 36v1M66 63.5h1M24.5 12v2M42.5 24v1M11.5 65v1M16.5 6v1M62 78.5h3M32 50.5h1M80.5 45v1M57 79.5h1M68.5 77v1M31.5 41v2M58 29.5h1M14.5 0v3M65.5 66v3M25.5 69v1M37 69.5h3M64 14.5h1M20.5 70v1M76.5 23v1M0 76.5h1M34 64.5h1M67.5 36v1M41 48.5h1M39.5 31v1M49 4.5h1M77 41.5h1M56.5 87v1M63 1.5h1M27.5 67v1M41.5 12v3M57 80.5h1M26.5 34v1M82.5 49v1M25 41.5h1M79.5 62v1M49.5 31v1M35.5 31v1M12.5 36v1M63.5 37v3M16 27.5h1M62 39.5h1M60.5 54v3M35 85.5h1M17.5 5v3M45 6.5h2M66.5 22v1M37.5 50v3M26 21.5h2M35 59.5h1M83.5 48v1M2.5 43v1M4 19.5h1M1 18.5h1M36 51.5h3M82 49.5h1M2 50.5h1M63 15.5h1M60 13.5h1M36.5 29v1M15 68.5h1M58 31.5h1M23 49.5h1M79 54.5h1M65 39.5h3M64.5 40v1M76 33.5h1M32.5 62v1M71 88.5h1M74 70.5h1M64 74.5h1M61.5 86v1M85 78.5h1M62.5 51v1M12 88.5h3M86.5 67v1M24 78.5h1M31.5 32v1M53 58.5h1M41 11.5h1M8 74.5h1M46 82.5h1M12 87.5h1M35 81.5h1M36 23.5h1M81 4.5h3M29 6.5h1M81 33.5h3M61.5 43v1M13 38.5h2M78.5 6v1M44 48.5h1M80 87.5h1M63 57.5h1M73.5 37v2M61 10.5h3M58 54.5h1M67 18.5h1M10 9.5h2M85 37.5h1M3 9.5h1M78 79.5h1M27 10.5h1M65 63.5h1M40 61.5h1M9 34.5h3M83 6.5h1M80 38.5h2M3 66.5h1M49.5 40v1M1.5 69v3M21 21.5h1M29 42.5h2M84.5 79v1M86.5 59v1M24 18.5h1M6.5 17v3M78 55.5h1M14 55.5h1M5 38.5h3M76 52.5h1M39.5 3v2M24 68.5h1M16.5 36v1M51.5 25v1M27 50.5h3M22 58.5h2M26 21.5h1M26 25.5h1M50 3.5h1M2 40.5h1M55 81.5h1M68.5 22v1M3.5 5v1M28 80.5h1M31 46.5h1M2 42.5h2M26 6.5h1M60 56.5h1M59.5 65v1M5.5 75v1M69.5 31v1M41 34.5h1M17.5 18v3M4 34.5h1M61 13.5h2M15 32.5h1M3 2.5h1M42.5 3v3M61.5 56v1M29.5 52v2M22 28.5h2M76 82.5h3M49 38.5h1M69.5 83v1M3.5 1v1M76.5 52v2M45 3.5h1M49.5 76v2M4.5 36v1M81.5 66v1M46 70.5h1M37 7.5h1M60 87.5h1M27.5 4v2M80.5 83v2M67.5 75v1M58.5 53v2M51 67.5h1M44.5 59v1M72.5 5v2M8.5 43v1M26 68.5h1M1 51.5h1M55.5 32v1M66.5 42v1M67.5 44v2M88.5 6v1M82 46.5h1M6.5 24v3M32 71.5h2M18 7.5h3M23.5 38v2M10.5 22v1M10 85.5h1M20 66.5h3M85 80.5h3M84.5 55v1M80.5 4v1M18 13.5h1M66.5 67v1M9 62.5h1M1.5 86v3M18.5 2v1M2.5 75v2M83.5 80v1M55 60.5h1M43.5 7v1M22 52.5h1M68 18.5h1M13 42.5h1M53.5 83v1M72 28.5h1M5 27.5h1M6.5 82v1M82.5 73v1M67 16.5h1M39 46.5h2M54 85.5h1M12.5 71v1M53 19.5h1M77 73.5h1M80.5 79v3M88.5 43v1M68.5 85v1M78.5 13v1M88 23.5h1M62.5 87v1M29 86.5h1M66.5 74v1M67.5 82v1M7.5 26v3M82.5 26v1M8 87.5h1M28 43.5h3M22.5 56v1M42.5 25v3M71 44.5h1M41 0.5h3M20.5 73v1M11.5 80v2M78.5 78v1M15.5 51v1M86 4.5h3M11.5 25v1M3 1.5h1M48 37.5h3" stroke="#000028" stroke-width="1" fill="none"/>
</pattern>
<pattern id="nw" width="61" height="61" patternUnits="userSpaceOnUse">
<path d="M23.5 24v1M8 15.5h1M29 31.5h1M57 53.5h1M44 17.5h1M24.5 39v1M34.5 60v1M60.5 55v1M10.5 48v1M22.5 33v1M18 21.5h1M19.5 7v1M26 36.5h1M48 33.5h1M1 58.5h1M45 59.5h1M6.5 13v1M12.5 31v1M39 53.5h1M15 50.5h1M52.5 51v1M41.5 10v1M1 39.5h1M29.5 29v1M8.5 38v1M20.5 50v1M41.5 51v1M46 2.5h1M58 46.5h1M6 34.5h1M21.5 47v1M35.5 50v1M36.5 45v1M14 20.5h1M48.5 28v1M53.5 53v1M18.5 25v1M41.5 15v1M41.5 17v1M50 9.5h1M2 28.5h1M0 47.5h1M55.5 43v1M25.5 50v1M27.5 22v1M14.5 33v1M27 46.5h1M36 49.5h1M58.5 20v1M7 24.5h1M31.5 21v1M1.5 48v1M30.5 53v1M43 25.5h1M35 53.5h1M40 54.5h1M35.5 7v1M55 31.5h1M32.5 20v1M41.5 9v1M24 28.5h1M20.5 8v1M55.5 55v1M48.5 26v1M3 59.5h1M44.5 0v1M56.5 21v1M55 46.5h1M60.5 42v1M8 42.5h1M47.5 37v1M41 7.5h1M14.5 21v1M28.5 18v1M41 12.5h1M30 39.5h1M17 23.5h1M56.5 0v1M46.5 14v1M55.5 39v1M39 0.5h1M22 47.5h1M2.5 4v1M49 57.5h1M16.5 30v1M13 46.5h1M19 19.5h1M40 12.5h1M46.5 17v1M39 13.5h1M17.5 35v1M2.5 39v1M8 23.5h1M51.5 45v1M37.5 44v1M24.5 11v1M59.5 44v1M18 36.5h1M26.5 19v1M3.5 56v1M40 34.5h1M38.5 41v1M33.5 57v1M3 38.5h1M24.5 27v1M45.5 55v1M33 45.5h1M14 50.5h1M15 33.5h1M17.5 1v1M21.5 47v1M45 18.5h1M45.5 13v1M8.5 23v1M18 44.5h1M56 37.5h1M38 19.5h1M51 13.5h1M54.5 33v1M60 19.5h1M49 15.5h1M54.5 13v1M21 33.5h1M8.5 48v1M20.5 1v1M6.5 48v1M47.5 27v1M49.5 7v1M6 23.5h1M36 59.5h1M29 6.5h1M1 20.5h1M60 44.5h1M38.5 41v1M38.5 33v1M17.5 24v1M22.5 4v1M56.5 38v1M4 58.5h1M58 17.5h1M19.5 7v1M37 10.5h1M9 40.5h1M57.5 44v1M20 54.5h1M5 54.5h1M46 10.5h1M23 35.5h1M47.5 36v1M42.5 30v1M9 16.5h1M56 31.5h1M38.5 48v1M8.5 42v1M55.5 46v1M30.5 34v1M18 30.5h1M5 5.5h1M30.5 6v1M21 27.5h1M20 54.5h1M51 30.5h1M26 31.5h1M14.5 53v1M9 58.5h1M11.5 3v1M27 58.5h1M30 33.5h1M26.5 17v1" stroke="#ffffff" stroke-width="1" fill="none"/>
<path d="M46.5 7v1M15.5 44v1M18.5 35v1M24 19.5h1M7 10.5h1M53.5 10v1M0 41.5h1M28.5 7v1M51 30.5h1M29 14.5h1M33.5 5v1M33 24.5h1M14.5 40v1M13 18.5h1M46 55.5h1M31 49.5h1M47.5 22v1M57.5 24v1M18.5 56v1M37.5 43v1M37.5 60v1M36.5 40v1M32.5 2v1M6 60.5h1M48.5 51v1M30 23.5h1M55.5 31v1M57 41.5h1M16.5 60v1M40.5 19v1M20 54.5h1M58.5 48v1M32.5 9v1M26 44.5h1M20 44.5h1M9.5 45v1M17 5.5h1M47.5 50v1M47.5 18v1M36 15.5h1M1 33.5h1M57.5 21v1M30.5 43v1M41.5 45v1M51.5 32v1M6 40.5h1M48.5 33v1M46 53.5h1M45 57.5h1M56 32.5h1M25 46.5h1M34.5 24v1M20 15.5h1M8.5 50v1M29.5 23v1M37 43.5h1M26 3.5h1M31.5 55v1M3.5 54v1M55 26.5h1M54.5 26v1M31 43.5h1M21 24.5h1M28 0.5h1M49.5 19v1M28.5 56v1M26.5 39v1M2.5 32v1M40.5 52v1M20 52.5h1M60.5 9v1M36 19.5h1M26 33.5h1M29.5 16v1M11 40.5h1M23 2.5h1M31.5 14v1M0.5 38v1M9.5 7v1M45.5 6v1M9 22.5h1M25.5 41v1M15 44.5h1M17 1.5h1M9 14.5h1M38 56.5h1M39.5 18v1M55.5 6v1M23.5 11v1M57 29.5h1M46.5 6v1M37 11.5h1M27 9.5h1M24.5 21v1M4.5 32v1M50.5 27v1M54.5 47v1M16 38.5h1M26 11.5h1M27.5 34v1M59 48.5h1M48.5 49v1M36 53.5h1M5 6.5h1M48 21.5h1M14 18.5h1M44.5 14v1M53 4.5h1M43.5 59v1M5 36.5h1M34.5 17v1M17.5 59v1M1.5 1v1M33.5 59v1M56.5 0v1M53.5 11v1M30.5 1v1M53 29.5h1M44 24.5h1M17.5 31v1M10.5 25v1M20.5 13v1M4.5 34v1M48.5 17v1M52.5 44v1M53 14.5h1M44 7.5h1M23.5 5v1M10 56.5h1M17.5 57v1M56.5 3v1M45 51.5h1M40.5 5v1M5 36.5h1M12.5 21v1M56 52.5h1M36.5 47v1M47 24.5h1M45 15.5h1M30 14.5h1M13.5 46v1M31.5 7v1M7 32.5h1M32.5 53v1M41 43.5h1M35.5 19v1M6 15.5h1M54 1.5h1M53 17.5h1M34 30.5h1M52.5 39v1M9.5 20v1M6 32.5h1M41 58.5h1M25.5 7v1M13 52.5h1M9.5 55v1M33.5 22v1M37 8.5h1" stroke="#e0e0e0" stroke-width="1" fill="none"/>
<path d="M57 13.5h1M53 31.5h1M58 44.5h1M4 18.5h1M31.5 45v1M7 47.5h1M2 56.5h1M46.5 28v1M18 58.5h1M23.5 51v1M53.5 22v1M33.5 59v1M37 23.5h1M32 53.5h1M17 17.5h1M42.5 39v1M31.5 55v1M11.5 19v1M34.5 50v1M33.5 25v1M60.5 18v1M9.5 53v1M2.5 47v1M20 3.5h1M43 16.5h1M6 23.5h1M24.5 13v1M50 42.5h1M45.5 22v1M19 16.5h1M13.5 12v1M23 39.5h1M9.5 42v1M32 20.5h1M6 39.5h1M58 4.5h1M20 59.5h1M42.5 50v1M30.5 56v1M59.5 39v1M7 28.5h1M50 56.5h1M60 12.5h1M31 36.5h1M23 16.5h1M54 8.5h1M11 15.5h1M53 42.5h1M0 52.5h1M19.5 8v1M6 57.5h1M24 5.5h1M14.5 19v1M43.5 6v1M23.5 2v1M31 60.5h1M40 44.5h1M51 18.5h1M38.5 13v1M33 48.5h1M42.5 16v1M44.5 14v1M16.5 36v1M29.5 44v1M56 44.5h1M36 60.5h1M50 6.5h1M12 51.5h1M0 55.5h1M16 54.5h1M14 54.5h1M30 5.5h1M32.5 33v1M44 10.5h1M26 8.5h1M16.5 18v1M14 15.5h1M34.5 58v1M31 28.5h1M55 20.5h1M28.5 22v1M8.5 39v1M57.5 26v1M11.5 20v1M20.5 50v1M46 2.5h1M30 31.5h1M20.5 22v1M11 46.5h1M6 18.5h1M53 11.5h1M17.5 50v1M16 56.5h1M43 45.5h1M60 54.5h1M11.5 36v1M4 35.5h1M47.5 24v1M18.5 51v1M56 37.5h1M11 39.5h1M9.5 52v1M4 44.5h1M1.5 29v1M41.5 29v1M43.5 49v1M43 32.5h1M49.5 42v1M32.5 35v1M56 53.5h1M59.5 29v1M46 15.5h1M46.5 13v1M58 9.5h1M49 17.5h1M27.5 13v1M1.5 57v1M12.5 19v1M32 26.5h1M20 16.5h1M26 46.5h1M37.5 36v1M37.5 22v1M32 12.5h1M53 32.5h1M56 19.5h1M20 37.5h1M54 45.5h1M7 43.5h1M1 25.5h1M56 4.5h1M50 30.5h1M31 46.5h1M41 28.5h1M27 52.5h1M18.5 57v1M37.5 23v1M17.5 17v1M37.5 42v1M22 4.5h1M55 28.5h1M34.5 37v1M57.5 8v1M34.5 16v1M19.5 56v1M32 24.5h1M31.5 11v1M3.5 29v1M26 39.5h1M31 20.5h1M14 19.5h1M22 38.5h1M40 51.5h1M42 36.5h1M8 21.5h1M48 22.5h1M0.5 55v1M16.5 27v1M15.5 29v1M43 56.5h1M11 53.5h1M58 54.5h1M22 28.5h1M51.5 14v1M59.5 48v1M26.5 4v1M26.5 49v1M59 27.5h1M0 46.5h1M16 47.5h1M36 44.5h1M40.5 41v1" stroke="#c0c0c0" stroke-width="1" fill="none"/>
</pattern>
<clipPath id="c1"><rect x="79.2" y="166.4" width="613.6" height="156"/></clipPath>
<clipPath id="c2"><rect x="79.2" y="332" width="613.6" height="156"/></clipPath>
<filter id="tb" x="0" y="0" width="792" height="612" filterUnits="userSpaceOnUse"><feGaussianBlur stdDeviation="0.3"/></filter>
<filter id="bl" x="0" y="0" width="1" height="1"><feGaussianBlur stdDeviation="0.22"/></filter>
</defs>
<g clip-path="url(#c1)" filter="url(#bl)">
<rect x="77.2" y="164.4" width="617.6" height="160" fill="#000030"/>
<rect x="79.2" y="166.4" width="613.6" height="46.05" fill="#00001c"/>
<rect x="79.2" y="212.4" width="613.6" height="1.45" fill="#0c40d8"/>
<rect x="79.2" y="214" width="613.6" height="4.45" fill="#000030"/>
<rect x="79.2" y="218.4" width="613.6" height="5.05" fill="#000c88"/>
<rect x="79.2" y="223.4" width="613.6" height="13.05" fill="#00000c"/>
<rect x="79.2" y="236.4" width="613.6" height="4.55" fill="#000a80"/>
<rect x="79.2" y="240.9" width="613.6" height="22.85" fill="#00000a"/>
<rect x="79.2" y="263.6" width="613.6" height="1.85" fill="#28a8ff"/>
<rect x="79.2" y="265.4" width="613.6" height="2.65" fill="#000010"/>
<rect x="79.2" y="268" width="613.6" height="7.05" fill="#000c98"/>
<rect x="79.2" y="275.2" width="613.6" height="5.05" fill="#000028"/>
<rect x="79.2" y="280.4" width="613.6" height="1.85" fill="#0420b0"/>
<rect x="79.2" y="282.4" width="613.6" height="2.05" fill="#000010"/>
<rect x="79.2" y="284.3" width="613.6" height="1.55" fill="#30d8ff"/>
<rect x="79.2" y="285.6" width="613.6" height="1.05" fill="#000870"/>
<rect x="79.2" y="286.7" width="613.6" height="1.25" fill="#0c58e0"/>
<rect x="79.2" y="288.1" width="613.6" height="0.55" fill="#000860"/>
<rect x="79.2" y="288.4" width="613.6" height="1.85" fill="#40ffb0"/>
<rect x="79.2" y="290.1" width="613.6" height="1.55" fill="#000050"/>
<rect x="79.2" y="291.6" width="613.6" height="1.85" fill="#0010a8"/>
<rect x="79.2" y="293.5" width="613.6" height="1.05" fill="#0c68e8"/>
<rect x="79.2" y="294.5" width="613.6" height="8.95" fill="#0018b8"/>
<rect x="79.2" y="303.4" width="613.6" height="2.65" fill="#1880e8"/>
<rect x="79.2" y="306" width="613.6" height="1.45" fill="#702088"/>
<rect x="79.2" y="307.4" width="613.6" height="2.85" fill="#ffe418"/>
<rect x="79.2" y="310.2" width="613.6" height="2.45" fill="#ff4c08"/>
<rect x="79.2" y="312.6" width="613.6" height="1.45" fill="#fff030"/>
<rect x="79.2" y="314" width="613.6" height="0.95" fill="#ff3c08"/>
<rect x="79.2" y="314.9" width="613.6" height="2.15" fill="#602068"/>
<rect x="79.2" y="317" width="613.6" height="1.45" fill="#582078"/>
<rect x="79.2" y="318.3" width="613.6" height="1.25" fill="#c0a8e0"/>
<rect x="79.2" y="319.4" width="613.6" height="3.05" fill="#28b8f8"/>
<rect x="79.2" y="166.4" width="613.6" height="46" fill="url(#nb)" opacity="0.4"/>
<rect x="79.2" y="166.4" width="613.6" height="46" fill="url(#nB)" opacity="0.1"/>
<rect x="79.2" y="166.4" width="613.6" height="46" fill="url(#nk)" opacity="0.4"/>
<rect x="79.2" y="212.4" width="613.6" height="1.4" fill="url(#nB)" opacity="0.6"/>
<rect x="79.2" y="214" width="613.6" height="4.4" fill="url(#nb)" opacity="0.5"/>
<rect x="79.2" y="214" width="613.6" height="4.4" fill="url(#nk)" opacity="0.4"/>
<rect x="79.2" y="218.4" width="613.6" height="5" fill="url(#nb)" opacity="0.5"/>
<rect x="79.2" y="218.4" width="613.6" height="5" fill="url(#nk)" opacity="0.35"/>
<rect x="79.2" y="223.4" width="613.6" height="13" fill="url(#nb)" opacity="0.15"/>
<rect x="79.2" y="236.4" width="613.6" height="4.5" fill="url(#nb)" opacity="0.45"/>
<rect x="79.2" y="236.4" width="613.6" height="4.5" fill="url(#nk)" opacity="0.3"/>
<rect x="79.2" y="240.9" width="613.6" height="22.8" fill="url(#nb)" opacity="0.13"/>
<rect x="79.2" y="263.6" width="613.6" height="1.8" fill="url(#nB)" opacity="0.3"/>
<rect x="79.2" y="265.4" width="613.6" height="2.6" fill="url(#nb)" opacity="0.15"/>
<rect x="79.2" y="268" width="613.6" height="7" fill="url(#nb)" opacity="0.5"/>
<rect x="79.2" y="268" width="613.6" height="7" fill="url(#nB)" opacity="0.15"/>
<rect x="79.2" y="268" width="613.6" height="7" fill="url(#nk)" opacity="0.45"/>
<rect x="79.2" y="275.2" width="613.6" height="5" fill="url(#nb)" opacity="0.5"/>
<rect x="79.2" y="275.2" width="613.6" height="5" fill="url(#nk)" opacity="0.4"/>
<rect x="79.2" y="280.4" width="613.6" height="1.8" fill="url(#nB)" opacity="0.45"/>
<rect x="79.2" y="280.4" width="613.6" height="1.8" fill="url(#nk)" opacity="0.5"/>
<rect x="79.2" y="285.6" width="613.6" height="1" fill="url(#nb)" opacity="0.5"/>
<rect x="79.2" y="286.7" width="613.6" height="1.2" fill="url(#nB)" opacity="0.5"/>
<rect x="79.2" y="286.7" width="613.6" height="1.2" fill="url(#nk)" opacity="0.4"/>
<rect x="79.2" y="291.6" width="613.6" height="1.8" fill="url(#nb)" opacity="0.45"/>
<rect x="79.2" y="293.5" width="613.6" height="1" fill="url(#nk)" opacity="0.4"/>
<rect x="79.2" y="294.5" width="613.6" height="8.9" fill="url(#nB)" opacity="0.4"/>
<rect x="79.2" y="294.5" width="613.6" height="8.9" fill="url(#nc)" opacity="0.28"/>
<rect x="79.2" y="294.5" width="613.6" height="8.9" fill="url(#nk)" opacity="0.35"/>
<rect x="79.2" y="303.4" width="613.6" height="2.6" fill="url(#nc)" opacity="0.8"/>
<rect x="79.2" y="303.4" width="613.6" height="2.6" fill="url(#nb)" opacity="0.5"/>
<rect x="79.2" y="306" width="613.6" height="1.4" fill="url(#nk)" opacity="0.3"/>
<rect x="79.2" y="314.9" width="613.6" height="2.1" fill="url(#nk)" opacity="0.25"/>
<rect x="79.2" y="317" width="613.6" height="1.4" fill="url(#nk)" opacity="0.45"/>
<rect x="79.2" y="319.4" width="613.6" height="3" fill="url(#nb)" opacity="0.45"/>
<rect x="96.4" y="176" width="23.6" height="1.2" fill="#30c0ff" opacity=".7"/>
<rect x="179" y="176" width="32" height="1.2" fill="#30c0ff" opacity=".7"/>
<rect x="215" y="176" width="43" height="1.2" fill="#30c0ff" opacity=".7"/>
<rect x="261" y="176" width="11" height="1.2" fill="#30c0ff" opacity=".7"/>
<rect x="288" y="176" width="12" height="1.2" fill="#30c0ff" opacity=".7"/>
<rect x="310" y="176" width="35" height="1.2" fill="#30c0ff" opacity=".7"/>
<rect x="352" y="176" width="36" height="1.2" fill="#30c0ff" opacity=".7"/>
<rect x="392" y="176" width="4" height="1.2" fill="#30c0ff" opacity=".7"/>
<rect x="405" y="176" width="27" height="1.2" fill="#30c0ff" opacity=".7"/>
<rect x="452" y="176" width="24" height="1.2" fill="#30c0ff" opacity=".7"/>
<rect x="480" y="176" width="32" height="1.2" fill="#30c0ff" opacity=".7"/>
<rect x="538" y="176" width="28" height="1.2" fill="#30c0ff" opacity=".7"/>
<rect x="574" y="176" width="24" height="1.2" fill="#30c0ff" opacity=".7"/>
<rect x="606" y="176" width="34" height="1.2" fill="#30c0ff" opacity=".7"/>
<rect x="652" y="176" width="38" height="1.2" fill="#30c0ff" opacity=".7"/>
<path d="M79.2 170.3H692.8" stroke="#20a0ff" stroke-width="1" stroke-dasharray="9 5 3 7 14 6" opacity=".55" fill="none"/>
<path d="M157 202.7H692.8" stroke="#2070ff" stroke-width="1" stroke-dasharray="24 9 13 30 40 12" opacity=".45" fill="none"/>
<rect x="81.5" y="314.9" width="36.5" height="2" fill="#98e020" opacity=".8"/>
<rect x="122" y="314.9" width="12" height="2" fill="#98e020" opacity=".8"/>
<rect x="146" y="314.9" width="14" height="2" fill="#98e020" opacity=".8"/>
<rect x="166" y="314.9" width="33" height="2" fill="#98e020" opacity=".8"/>
<rect x="207" y="314.9" width="25" height="2" fill="#98e020" opacity=".8"/>
<rect x="255" y="314.9" width="7" height="2" fill="#98e020" opacity=".8"/>
<rect x="275" y="314.9" width="5" height="2" fill="#98e020" opacity=".8"/>
<rect x="290" y="314.9" width="7" height="2" fill="#98e020" opacity=".8"/>
<rect x="300" y="314.9" width="12" height="2" fill="#98e020" opacity=".8"/>
<rect x="345" y="314.9" width="7" height="2" fill="#98e020" opacity=".8"/>
<rect x="430" y="314.9" width="11" height="2" fill="#98e020" opacity=".8"/>
<rect x="482" y="314.9" width="18" height="2" fill="#98e020" opacity=".8"/>
<rect x="506" y="314.9" width="39" height="2" fill="#98e020" opacity=".8"/>
<path d="M79.2 321.2H692.8" stroke="#0030c0" stroke-width="2" stroke-dasharray="4 6 8 5 3 9" opacity=".6" fill="none"/>
<path d="M79.2 309H692.8" stroke="#ffa010" stroke-width="1" stroke-dasharray="30 22 18 45" opacity=".5" fill="none"/>
<rect x="79.2" y="176.4" width="1.05" height="39.72" fill="url(#gK)" opacity="0.46"/>
<rect x="80.2" y="166.4" width="1.05" height="40.49" fill="url(#gB)" opacity="0.54"/>
<rect x="83.2" y="176.32" width="1.05" height="36.75" fill="url(#gK)" opacity="0.46"/>
<rect x="84.2" y="166.4" width="1.05" height="27.52" fill="url(#gc)" opacity="0.81"/>
<rect x="85.2" y="166.4" width="1.05" height="52.93" fill="url(#gB)" opacity="0.44"/>
<rect x="87.2" y="166.4" width="1.05" height="41.33" fill="url(#gB)" opacity="0.82"/>
<rect x="88.2" y="166.4" width="1.05" height="31.7" fill="url(#gB)" opacity="0.86"/>
<rect x="89.2" y="181.21" width="1.05" height="22.73" fill="url(#gK)" opacity="0.78"/>
<rect x="90.2" y="166.4" width="1.05" height="41.85" fill="url(#gB)" opacity="0.47"/>
<rect x="91.2" y="166.4" width="1.05" height="47.4" fill="url(#gB)" opacity="0.48"/>
<rect x="93.2" y="166.4" width="1.05" height="34.79" fill="url(#gB)" opacity="0.81"/>
<rect x="94.2" y="166.4" width="1.05" height="36.24" fill="url(#gc)" opacity="0.69"/>
<rect x="95.2" y="166.86" width="1.05" height="31.54" fill="url(#gK)" opacity="0.69"/>
<rect x="99.2" y="166.4" width="1.05" height="40.17" fill="url(#gB)" opacity="0.75"/>
<rect x="101.2" y="166.4" width="1.05" height="36.58" fill="url(#gB)" opacity="0.58"/>
<rect x="102.2" y="173.9" width="1.05" height="44.3" fill="url(#gK)" opacity="0.41"/>
<rect x="104.2" y="166.4" width="1.05" height="39.65" fill="url(#gc)" opacity="0.54"/>
<rect x="105.2" y="166.4" width="1.05" height="35.2" fill="url(#gc)" opacity="0.76"/>
<rect x="106.2" y="166.4" width="1.05" height="45.4" fill="url(#gB)" opacity="0.49"/>
<rect x="108.2" y="166.4" width="1.05" height="37.74" fill="url(#gB)" opacity="0.57"/>
<rect x="110.2" y="166.4" width="1.05" height="42.86" fill="url(#gB)" opacity="0.5"/>
<rect x="111.2" y="166.4" width="1.05" height="43.34" fill="url(#gB)" opacity="0.88"/>
<rect x="112.2" y="168.91" width="1.05" height="48.68" fill="url(#gK)" opacity="0.77"/>
<rect x="113.2" y="166.4" width="1.05" height="28.43" fill="url(#gc)" opacity="0.75"/>
<rect x="115.2" y="166.4" width="1.05" height="37.51" fill="url(#gB)" opacity="0.79"/>
<rect x="116.2" y="166.4" width="1.05" height="36.76" fill="url(#gB)" opacity="0.4"/>
<rect x="117.2" y="166.4" width="1.05" height="47.33" fill="url(#gB)" opacity="0.89"/>
<rect x="119.2" y="171.24" width="1.05" height="20.72" fill="url(#gK)" opacity="0.71"/>
<rect x="122.2" y="166.4" width="1.05" height="44.76" fill="url(#gB)" opacity="0.64"/>
<rect x="124.2" y="166.4" width="1.05" height="56.51" fill="url(#gB)" opacity="0.85"/>
<rect x="125.2" y="166.4" width="1.05" height="38.16" fill="url(#gB)" opacity="0.84"/>
<rect x="126.2" y="166.4" width="1.05" height="56.43" fill="url(#gB)" opacity="0.66"/>
<rect x="129.2" y="166.4" width="1.05" height="37.98" fill="url(#gB)" opacity="0.53"/>
<rect x="132.2" y="166.4" width="1.05" height="54.82" fill="url(#gB)" opacity="0.61"/>
<rect x="133.2" y="166.4" width="1.05" height="42.19" fill="url(#gB)" opacity="0.89"/>
<rect x="134.2" y="180.2" width="1.05" height="38.74" fill="url(#gK)" opacity="0.78"/>
<rect x="136.2" y="166.4" width="1.05" height="42.01" fill="url(#gc)" opacity="0.81"/>
<rect x="138.2" y="171.93" width="1.05" height="30.42" fill="url(#gK)" opacity="0.69"/>
<rect x="139.2" y="177.05" width="1.05" height="20.51" fill="url(#gK)" opacity="0.76"/>
<rect x="143.2" y="172.09" width="1.05" height="43.67" fill="url(#gK)" opacity="0.44"/>
<rect x="144.2" y="166.4" width="1.05" height="38.74" fill="url(#gB)" opacity="0.87"/>
<rect x="146.2" y="168.27" width="1.05" height="38.66" fill="url(#gK)" opacity="0.61"/>
<rect x="148.2" y="166.4" width="1.05" height="30.36" fill="url(#gc)" opacity="0.61"/>
<rect x="149.2" y="166.4" width="1.05" height="49.19" fill="url(#gB)" opacity="0.47"/>
<rect x="150.2" y="166.4" width="1.05" height="38.75" fill="url(#gB)" opacity="0.75"/>
<rect x="154.2" y="166.4" width="1.05" height="23.01" fill="url(#gc)" opacity="0.65"/>
<rect x="155.2" y="166.4" width="1.05" height="28.1" fill="url(#gc)" opacity="0.72"/>
<rect x="156.2" y="166.4" width="1.05" height="36.67" fill="url(#gB)" opacity="0.56"/>
<rect x="158.2" y="166.4" width="1.05" height="40.09" fill="url(#gB)" opacity="0.54"/>
<rect x="159.2" y="166.4" width="1.05" height="42.11" fill="url(#gB)" opacity="0.51"/>
<rect x="161.2" y="168.84" width="1.05" height="40.94" fill="url(#gK)" opacity="0.59"/>
<rect x="162.2" y="170.15" width="1.05" height="45.29" fill="url(#gK)" opacity="0.58"/>
<rect x="165.2" y="166.4" width="1.05" height="45.06" fill="url(#gB)" opacity="0.78"/>
<rect x="166.2" y="166.4" width="1.05" height="44.9" fill="url(#gc)" opacity="0.72"/>
<rect x="168.2" y="171.65" width="1.05" height="40.42" fill="url(#gK)" opacity="0.69"/>
<rect x="169.2" y="166.4" width="1.05" height="44" fill="url(#gB)" opacity="0.58"/>
<rect x="170.2" y="166.4" width="1.05" height="33.81" fill="url(#gB)" opacity="0.51"/>
<rect x="171.2" y="167.09" width="1.05" height="27.56" fill="url(#gK)" opacity="0.72"/>
<rect x="172.2" y="166.4" width="1.05" height="56.21" fill="url(#gB)" opacity="0.7"/>
<rect x="173.2" y="166.4" width="1.05" height="51.69" fill="url(#gc)" opacity="0.81"/>
<rect x="174.2" y="166.4" width="1.05" height="33.52" fill="url(#gB)" opacity="0.72"/>
<rect x="176.2" y="172.59" width="1.05" height="43.53" fill="url(#gK)" opacity="0.65"/>
<rect x="177.2" y="166.4" width="1.05" height="41.39" fill="url(#gB)" opacity="0.59"/>
<rect x="178.2" y="166.4" width="1.05" height="35.58" fill="url(#gc)" opacity="0.77"/>
<rect x="179.2" y="166.4" width="1.05" height="35.74" fill="url(#gB)" opacity="0.53"/>
<rect x="181.2" y="178.93" width="1.05" height="21.59" fill="url(#gK)" opacity="0.75"/>
<rect x="183.2" y="166.4" width="1.05" height="50.57" fill="url(#gB)" opacity="0.55"/>
<rect x="184.2" y="166.4" width="1.05" height="54.23" fill="url(#gB)" opacity="0.82"/>
<rect x="185.2" y="166.4" width="1.05" height="54.63" fill="url(#gB)" opacity="0.41"/>
<rect x="186.2" y="166.4" width="1.05" height="30.36" fill="url(#gB)" opacity="0.49"/>
<rect x="187.2" y="166.4" width="1.05" height="50.04" fill="url(#gB)" opacity="0.55"/>
<rect x="188.2" y="166.4" width="1.05" height="35.15" fill="url(#gB)" opacity="0.56"/>
<rect x="190.2" y="176.67" width="1.05" height="23.07" fill="url(#gK)" opacity="0.61"/>
<rect x="191.2" y="166.4" width="1.05" height="39.94" fill="url(#gc)" opacity="0.71"/>
<rect x="193.2" y="173.41" width="1.05" height="39.07" fill="url(#gK)" opacity="0.65"/>
<rect x="194.2" y="166.4" width="1.05" height="36.11" fill="url(#gc)" opacity="0.66"/>
<rect x="196.2" y="166.4" width="1.05" height="55.9" fill="url(#gB)" opacity="0.65"/>
<rect x="201.2" y="166.4" width="1.05" height="35.8" fill="url(#gc)" opacity="0.69"/>
<rect x="204.2" y="166.4" width="1.05" height="31.75" fill="url(#gB)" opacity="0.45"/>
<rect x="205.2" y="166.4" width="1.05" height="31.58" fill="url(#gB)" opacity="0.4"/>
<rect x="206.2" y="166.4" width="1.05" height="33.17" fill="url(#gB)" opacity="0.74"/>
<rect x="207.2" y="180.81" width="1.05" height="48.97" fill="url(#gK)" opacity="0.7"/>
<rect x="209.2" y="166.4" width="1.05" height="36.38" fill="url(#gB)" opacity="0.86"/>
<rect x="210.2" y="177.75" width="1.05" height="26.2" fill="url(#gK)" opacity="0.57"/>
<rect x="211.2" y="170.03" width="1.05" height="29.48" fill="url(#gK)" opacity="0.43"/>
<rect x="212.2" y="181.2" width="1.05" height="48.58" fill="url(#gK)" opacity="0.71"/>
<rect x="214.2" y="166.4" width="1.05" height="32.14" fill="url(#gc)" opacity="0.82"/>
<rect x="215.2" y="166.59" width="1.05" height="40.07" fill="url(#gK)" opacity="0.49"/>
<rect x="216.2" y="178.79" width="1.05" height="41.93" fill="url(#gK)" opacity="0.7"/>
<rect x="217.2" y="166.4" width="1.05" height="40.69" fill="url(#gB)" opacity="0.83"/>
<rect x="219.2" y="175.77" width="1.05" height="25.84" fill="url(#gK)" opacity="0.61"/>
<rect x="220.2" y="166.4" width="1.05" height="29.84" fill="url(#gc)" opacity="0.6"/>
<rect x="221.2" y="174.51" width="1.05" height="23.81" fill="url(#gK)" opacity="0.78"/>
<rect x="223.2" y="166.4" width="1.05" height="41.72" fill="url(#gB)" opacity="0.45"/>
<rect x="226.2" y="166.4" width="1.05" height="45.35" fill="url(#gB)" opacity="0.7"/>
<rect x="227.2" y="171.05" width="1.05" height="31.35" fill="url(#gK)" opacity="0.54"/>
<rect x="229.2" y="166.4" width="1.05" height="44.07" fill="url(#gB)" opacity="0.63"/>
<rect x="230.2" y="166.4" width="1.05" height="41.19" fill="url(#gB)" opacity="0.5"/>
<rect x="231.2" y="166.4" width="1.05" height="40.28" fill="url(#gB)" opacity="0.57"/>
<rect x="233.2" y="166.4" width="1.05" height="39.31" fill="url(#gB)" opacity="0.73"/>
<rect x="234.2" y="166.4" width="1.05" height="39.54" fill="url(#gc)" opacity="0.71"/>
<rect x="235.2" y="166.4" width="1.05" height="48.8" fill="url(#gB)" opacity="0.45"/>
<rect x="236.2" y="166.4" width="1.05" height="52.67" fill="url(#gB)" opacity="0.89"/>
<rect x="238.2" y="166.4" width="1.05" height="42.27" fill="url(#gB)" opacity="0.54"/>
<rect x="240.2" y="166.4" width="1.05" height="35.49" fill="url(#gB)" opacity="0.72"/>
<rect x="242.2" y="180.79" width="1.05" height="34.37" fill="url(#gK)" opacity="0.58"/>
<rect x="244.2" y="166.4" width="1.05" height="37.82" fill="url(#gc)" opacity="0.59"/>
<rect x="247.2" y="166.4" width="1.05" height="44.73" fill="url(#gB)" opacity="0.76"/>
<rect x="248.2" y="175.64" width="1.05" height="39.87" fill="url(#gK)" opacity="0.69"/>
<rect x="249.2" y="166.4" width="1.05" height="38.58" fill="url(#gB)" opacity="0.41"/>
<rect x="252.2" y="166.4" width="1.05" height="54.88" fill="url(#gc)" opacity="0.81"/>
<rect x="253.2" y="166.4" width="1.05" height="53.43" fill="url(#gB)" opacity="0.61"/>
<rect x="254.2" y="166.4" width="1.05" height="37.26" fill="url(#gB)" opacity="0.61"/>
<rect x="255.2" y="166.4" width="1.05" height="31.41" fill="url(#gB)" opacity="0.46"/>
<rect x="256.2" y="166.4" width="1.05" height="34.44" fill="url(#gB)" opacity="0.46"/>
<rect x="258.2" y="166.4" width="1.05" height="38.67" fill="url(#gc)" opacity="0.69"/>
<rect x="260.2" y="166.4" width="1.05" height="36.39" fill="url(#gB)" opacity="0.83"/>
<rect x="263.2" y="169.23" width="1.05" height="31.01" fill="url(#gK)" opacity="0.76"/>
<rect x="265.2" y="170.31" width="1.05" height="43.74" fill="url(#gK)" opacity="0.61"/>
<rect x="267.2" y="166.4" width="1.05" height="47.29" fill="url(#gB)" opacity="0.49"/>
<rect x="271.2" y="166.4" width="1.05" height="22.73" fill="url(#gc)" opacity="0.65"/>
<rect x="272.2" y="166.4" width="1.05" height="41.2" fill="url(#gB)" opacity="0.44"/>
<rect x="274.2" y="179.03" width="1.05" height="36.85" fill="url(#gK)" opacity="0.76"/>
<rect x="275.2" y="179.11" width="1.05" height="36.32" fill="url(#gK)" opacity="0.55"/>
<rect x="277.2" y="166.4" width="1.05" height="52.29" fill="url(#gB)" opacity="0.66"/>
<rect x="280.2" y="166.4" width="1.05" height="41.41" fill="url(#gB)" opacity="0.8"/>
<rect x="282.2" y="176.56" width="1.05" height="43.31" fill="url(#gK)" opacity="0.75"/>
<rect x="284.2" y="166.4" width="1.05" height="31.75" fill="url(#gc)" opacity="0.48"/>
<rect x="285.2" y="166.4" width="1.05" height="31.19" fill="url(#gB)" opacity="0.89"/>
<rect x="286.2" y="166.4" width="1.05" height="46.88" fill="url(#gB)" opacity="0.47"/>
<rect x="288.2" y="178.8" width="1.05" height="25.31" fill="url(#gK)" opacity="0.74"/>
<rect x="290.2" y="166.4" width="1.05" height="41.27" fill="url(#gB)" opacity="0.73"/>
<rect x="291.2" y="166.4" width="1.05" height="45.94" fill="url(#gB)" opacity="0.75"/>
<rect x="295.2" y="166.4" width="1.05" height="51.16" fill="url(#gB)" opacity="0.62"/>
<rect x="296.2" y="166.4" width="1.05" height="30.58" fill="url(#gB)" opacity="0.71"/>
<rect x="297.2" y="166.4" width="1.05" height="32.63" fill="url(#gB)" opacity="0.65"/>
<rect x="298.2" y="166.4" width="1.05" height="33.06" fill="url(#gc)" opacity="0.68"/>
<rect x="299.2" y="181.21" width="1.05" height="35.89" fill="url(#gK)" opacity="0.76"/>
<rect x="300.2" y="166.4" width="1.05" height="54.42" fill="url(#gB)" opacity="0.56"/>
<rect x="302.2" y="166.4" width="1.05" height="38.91" fill="url(#gB)" opacity="0.87"/>
<rect x="305.2" y="166.4" width="1.05" height="33.41" fill="url(#gB)" opacity="0.88"/>
<rect x="306.2" y="166.4" width="1.05" height="34.91" fill="url(#gB)" opacity="0.62"/>
<rect x="311.2" y="166.4" width="1.05" height="52.99" fill="url(#gc)" opacity="0.58"/>
<rect x="312.2" y="166.4" width="1.05" height="56.86" fill="url(#gB)" opacity="0.84"/>
<rect x="314.2" y="169.69" width="1.05" height="26.11" fill="url(#gK)" opacity="0.43"/>
<rect x="315.2" y="166.4" width="1.05" height="43.41" fill="url(#gB)" opacity="0.85"/>
<rect x="317.2" y="173.42" width="1.05" height="40.21" fill="url(#gK)" opacity="0.71"/>
<rect x="322.2" y="173.47" width="1.05" height="25.06" fill="url(#gK)" opacity="0.58"/>
<rect x="323.2" y="166.4" width="1.05" height="35.65" fill="url(#gB)" opacity="0.61"/>
<rect x="324.2" y="166.4" width="1.05" height="47.48" fill="url(#gB)" opacity="0.56"/>
<rect x="327.2" y="172.27" width="1.05" height="33.02" fill="url(#gK)" opacity="0.48"/>
<rect x="332.2" y="166.4" width="1.05" height="45.16" fill="url(#gB)" opacity="0.48"/>
<rect x="333.2" y="166.4" width="1.05" height="46.44" fill="url(#gB)" opacity="0.49"/>
<rect x="334.2" y="166.4" width="1.05" height="50.45" fill="url(#gB)" opacity="0.64"/>
<rect x="336.2" y="166.4" width="1.05" height="32.48" fill="url(#gB)" opacity="0.87"/>
<rect x="337.2" y="174.74" width="1.05" height="40.8" fill="url(#gK)" opacity="0.46"/>
<rect x="339.2" y="168.59" width="1.05" height="47.27" fill="url(#gK)" opacity="0.51"/>
<rect x="340.2" y="179.29" width="1.05" height="27.43" fill="url(#gK)" opacity="0.5"/>
<rect x="341.2" y="166.4" width="1.05" height="34.56" fill="url(#gB)" opacity="0.54"/>
<rect x="345.2" y="166.4" width="1.05" height="23.41" fill="url(#gc)" opacity="0.78"/>
<rect x="346.2" y="166.4" width="1.05" height="35.6" fill="url(#gB)" opacity="0.62"/>
<rect x="348.2" y="166.4" width="1.05" height="31.75" fill="url(#gB)" opacity="0.85"/>
<rect x="349.2" y="166.4" width="1.05" height="50.56" fill="url(#gB)" opacity="0.47"/>
<rect x="350.2" y="166.4" width="1.05" height="35.81" fill="url(#gB)" opacity="0.62"/>
<rect x="353.2" y="169.04" width="1.05" height="22.63" fill="url(#gK)" opacity="0.52"/>
<rect x="356.2" y="166.4" width="1.05" height="39.36" fill="url(#gB)" opacity="0.88"/>
<rect x="357.2" y="166.4" width="1.05" height="32.24" fill="url(#gB)" opacity="0.53"/>
<rect x="359.2" y="166.4" width="1.05" height="50.19" fill="url(#gB)" opacity="0.46"/>
<rect x="361.2" y="166.4" width="1.05" height="46.66" fill="url(#gB)" opacity="0.77"/>
<rect x="363.2" y="166.4" width="1.05" height="55.48" fill="url(#gc)" opacity="0.61"/>
<rect x="367.2" y="166.4" width="1.05" height="37.66" fill="url(#gB)" opacity="0.75"/>
<rect x="369.2" y="166.4" width="1.05" height="51.51" fill="url(#gB)" opacity="0.64"/>
<rect x="370.2" y="166.4" width="1.05" height="32.38" fill="url(#gB)" opacity="0.4"/>
<rect x="371.2" y="166.4" width="1.05" height="56.12" fill="url(#gB)" opacity="0.74"/>
<rect x="374.2" y="166.4" width="1.05" height="45.67" fill="url(#gc)" opacity="0.71"/>
<rect x="376.2" y="166.4" width="1.05" height="54.88" fill="url(#gB)" opacity="0.48"/>
<rect x="377.2" y="166.4" width="1.05" height="45.38" fill="url(#gc)" opacity="0.75"/>
<rect x="379.2" y="166.4" width="1.05" height="38.34" fill="url(#gB)" opacity="0.76"/>
<rect x="380.2" y="166.4" width="1.05" height="54.46" fill="url(#gB)" opacity="0.56"/>
<rect x="381.2" y="166.4" width="1.05" height="32.64" fill="url(#gc)" opacity="0.74"/>
<rect x="382.2" y="166.4" width="1.05" height="33.79" fill="url(#gB)" opacity="0.43"/>
<rect x="383.2" y="166.4" width="1.05" height="47.45" fill="url(#gB)" opacity="0.89"/>
<rect x="384.2" y="166.4" width="1.05" height="42.94" fill="url(#gB)" opacity="0.58"/>
<rect x="385.2" y="166.4" width="1.05" height="39.62" fill="url(#gB)" opacity="0.45"/>
<rect x="386.2" y="166.4" width="1.05" height="31.05" fill="url(#gc)" opacity="0.47"/>
<rect x="387.2" y="166.4" width="1.05" height="55.98" fill="url(#gB)" opacity="0.76"/>
<rect x="391.2" y="166.4" width="1.05" height="33.05" fill="url(#gB)" opacity="0.89"/>
<rect x="394.2" y="166.4" width="1.05" height="52.17" fill="url(#gB)" opacity="0.67"/>
<rect x="395.2" y="166.4" width="1.05" height="35.89" fill="url(#gB)" opacity="0.88"/>
<rect x="397.2" y="166.4" width="1.05" height="32.27" fill="url(#gB)" opacity="0.78"/>
<rect x="398.2" y="166.4" width="1.05" height="43.38" fill="url(#gB)" opacity="0.47"/>
<rect x="399.2" y="166.4" width="1.05" height="43.92" fill="url(#gB)" opacity="0.61"/>
<rect x="400.2" y="166.4" width="1.05" height="34.22" fill="url(#gB)" opacity="0.62"/>
<rect x="401.2" y="166.4" width="1.05" height="31.74" fill="url(#gB)" opacity="0.64"/>
<rect x="402.2" y="166.4" width="1.05" height="50.56" fill="url(#gB)" opacity="0.78"/>
<rect x="405.2" y="166.4" width="1.05" height="41.81" fill="url(#gB)" opacity="0.61"/>
<rect x="406.2" y="166.4" width="1.05" height="54.07" fill="url(#gB)" opacity="0.42"/>
<rect x="410.2" y="166.4" width="1.05" height="55.02" fill="url(#gB)" opacity="0.88"/>
<rect x="412.2" y="173.63" width="1.05" height="39.45" fill="url(#gK)" opacity="0.74"/>
<rect x="413.2" y="172.48" width="1.05" height="36.42" fill="url(#gK)" opacity="0.65"/>
<rect x="414.2" y="177.99" width="1.05" height="48.21" fill="url(#gK)" opacity="0.53"/>
<rect x="416.2" y="166.4" width="1.05" height="43.48" fill="url(#gB)" opacity="0.66"/>
<rect x="418.2" y="166.4" width="1.05" height="34.1" fill="url(#gB)" opacity="0.49"/>
<rect x="419.2" y="174.79" width="1.05" height="25.11" fill="url(#gK)" opacity="0.75"/>
<rect x="420.2" y="166.4" width="1.05" height="29.6" fill="url(#gc)" opacity="0.69"/>
<rect x="421.2" y="166.4" width="1.05" height="36.85" fill="url(#gc)" opacity="0.52"/>
<rect x="423.2" y="166.4" width="1.05" height="57.58" fill="url(#gB)" opacity="0.65"/>
<rect x="427.2" y="166.4" width="1.05" height="55.98" fill="url(#gB)" opacity="0.45"/>
<rect x="430.2" y="166.4" width="1.05" height="50.03" fill="url(#gB)" opacity="0.68"/>
<rect x="431.2" y="166.4" width="1.05" height="43.32" fill="url(#gc)" opacity="0.63"/>
<rect x="434.2" y="166.4" width="1.05" height="47.9" fill="url(#gB)" opacity="0.75"/>
<rect x="436.2" y="168.57" width="1.05" height="36.24" fill="url(#gK)" opacity="0.48"/>
<rect x="438.2" y="166.4" width="1.05" height="55.22" fill="url(#gB)" opacity="0.46"/>
<rect x="439.2" y="166.4" width="1.05" height="43.16" fill="url(#gc)" opacity="0.46"/>
<rect x="440.2" y="166.4" width="1.05" height="49.14" fill="url(#gc)" opacity="0.6"/>
<rect x="441.2" y="166.4" width="1.05" height="31.67" fill="url(#gB)" opacity="0.87"/>
<rect x="442.2" y="166.4" width="1.05" height="48.75" fill="url(#gB)" opacity="0.72"/>
<rect x="443.2" y="166.4" width="1.05" height="45.62" fill="url(#gB)" opacity="0.74"/>
<rect x="444.2" y="166.4" width="1.05" height="36.85" fill="url(#gB)" opacity="0.86"/>
<rect x="445.2" y="166.4" width="1.05" height="43.68" fill="url(#gB)" opacity="0.63"/>
<rect x="450.2" y="175.01" width="1.05" height="22.75" fill="url(#gK)" opacity="0.57"/>
<rect x="452.2" y="166.4" width="1.05" height="26.15" fill="url(#gc)" opacity="0.6"/>
<rect x="454.2" y="167.25" width="1.05" height="40.05" fill="url(#gK)" opacity="0.49"/>
<rect x="455.2" y="166.4" width="1.05" height="43.56" fill="url(#gB)" opacity="0.46"/>
<rect x="457.2" y="166.4" width="1.05" height="30.03" fill="url(#gB)" opacity="0.52"/>
<rect x="458.2" y="178.62" width="1.05" height="38.47" fill="url(#gK)" opacity="0.43"/>
<rect x="461.2" y="171" width="1.05" height="39.41" fill="url(#gK)" opacity="0.46"/>
<rect x="462.2" y="166.4" width="1.05" height="56.92" fill="url(#gB)" opacity="0.85"/>
<rect x="463.2" y="166.4" width="1.05" height="42.46" fill="url(#gc)" opacity="0.64"/>
<rect x="465.2" y="166.4" width="1.05" height="51.11" fill="url(#gB)" opacity="0.49"/>
<rect x="466.2" y="179.12" width="1.05" height="38.68" fill="url(#gK)" opacity="0.65"/>
<rect x="467.2" y="166.4" width="1.05" height="52.83" fill="url(#gB)" opacity="0.59"/>
<rect x="468.2" y="181.06" width="1.05" height="44.01" fill="url(#gK)" opacity="0.44"/>
<rect x="469.2" y="166.4" width="1.05" height="32.69" fill="url(#gc)" opacity="0.79"/>
<rect x="470.2" y="166.4" width="1.05" height="52.95" fill="url(#gc)" opacity="0.77"/>
<rect x="471.2" y="166.4" width="1.05" height="47.95" fill="url(#gc)" opacity="0.72"/>
<rect x="472.2" y="166.4" width="1.05" height="38.31" fill="url(#gB)" opacity="0.47"/>
<rect x="474.2" y="166.4" width="1.05" height="32.22" fill="url(#gc)" opacity="0.74"/>
<rect x="476.2" y="166.4" width="1.05" height="49.36" fill="url(#gB)" opacity="0.51"/>
<rect x="480.2" y="179.18" width="1.05" height="23.68" fill="url(#gK)" opacity="0.44"/>
<rect x="481.2" y="170.43" width="1.05" height="48.77" fill="url(#gK)" opacity="0.59"/>
<rect x="484.2" y="166.4" width="1.05" height="41.66" fill="url(#gB)" opacity="0.85"/>
<rect x="486.2" y="166.4" width="1.05" height="49.03" fill="url(#gB)" opacity="0.83"/>
<rect x="487.2" y="170.37" width="1.05" height="46.83" fill="url(#gK)" opacity="0.52"/>
<rect x="489.2" y="166.4" width="1.05" height="33.55" fill="url(#gB)" opacity="0.47"/>
<rect x="492.2" y="166.4" width="1.05" height="50.77" fill="url(#gB)" opacity="0.5"/>
<rect x="494.2" y="166.4" width="1.05" height="46.15" fill="url(#gB)" opacity="0.78"/>
<rect x="495.2" y="168.17" width="1.05" height="38.84" fill="url(#gK)" opacity="0.58"/>
<rect x="497.2" y="166.4" width="1.05" height="47.29" fill="url(#gc)" opacity="0.69"/>
<rect x="500.2" y="166.4" width="1.05" height="52.94" fill="url(#gB)" opacity="0.81"/>
<rect x="501.2" y="166.4" width="1.05" height="46.44" fill="url(#gc)" opacity="0.62"/>
<rect x="502.2" y="173.33" width="1.05" height="29.74" fill="url(#gK)" opacity="0.52"/>
<rect x="504.2" y="174.24" width="1.05" height="38.41" fill="url(#gK)" opacity="0.59"/>
<rect x="505.2" y="166.4" width="1.05" height="48.11" fill="url(#gB)" opacity="0.62"/>
<rect x="506.2" y="166.4" width="1.05" height="44.36" fill="url(#gB)" opacity="0.47"/>
<rect x="509.2" y="166.4" width="1.05" height="27.49" fill="url(#gc)" opacity="0.84"/>
<rect x="510.2" y="167.75" width="1.05" height="29.56" fill="url(#gK)" opacity="0.63"/>
<rect x="511.2" y="166.4" width="1.05" height="55.16" fill="url(#gB)" opacity="0.76"/>
<rect x="512.2" y="166.4" width="1.05" height="41.4" fill="url(#gB)" opacity="0.44"/>
<rect x="513.2" y="166.4" width="1.05" height="45.63" fill="url(#gB)" opacity="0.84"/>
<rect x="514.2" y="166.4" width="1.05" height="54.73" fill="url(#gc)" opacity="0.55"/>
<rect x="515.2" y="166.4" width="1.05" height="53.5" fill="url(#gB)" opacity="0.59"/>
<rect x="516.2" y="166.4" width="1.05" height="42.44" fill="url(#gB)" opacity="0.71"/>
<rect x="517.2" y="166.4" width="1.05" height="32.98" fill="url(#gB)" opacity="0.7"/>
<rect x="519.2" y="179.31" width="1.05" height="24.8" fill="url(#gK)" opacity="0.57"/>
<rect x="520.2" y="168.41" width="1.05" height="46.56" fill="url(#gK)" opacity="0.6"/>
<rect x="521.2" y="166.4" width="1.05" height="43.71" fill="url(#gc)" opacity="0.54"/>
<rect x="522.2" y="166.4" width="1.05" height="36.36" fill="url(#gB)" opacity="0.68"/>
<rect x="523.2" y="166.4" width="1.05" height="55.97" fill="url(#gB)" opacity="0.84"/>
<rect x="525.2" y="166.4" width="1.05" height="50.04" fill="url(#gc)" opacity="0.68"/>
<rect x="528.2" y="166.4" width="1.05" height="51.32" fill="url(#gB)" opacity="0.85"/>
<rect x="529.2" y="166.4" width="1.05" height="33.62" fill="url(#gc)" opacity="0.46"/>
<rect x="531.2" y="166.4" width="1.05" height="30.24" fill="url(#gB)" opacity="0.44"/>
<rect x="532.2" y="179.99" width="1.05" height="40.48" fill="url(#gK)" opacity="0.67"/>
<rect x="533.2" y="166.4" width="1.05" height="56.04" fill="url(#gB)" opacity="0.84"/>
<rect x="539.2" y="166.4" width="1.05" height="57.72" fill="url(#gB)" opacity="0.4"/>
<rect x="540.2" y="166.4" width="1.05" height="41.36" fill="url(#gc)" opacity="0.65"/>
<rect x="541.2" y="166.4" width="1.05" height="44.23" fill="url(#gB)" opacity="0.56"/>
<rect x="543.2" y="166.4" width="1.05" height="39.65" fill="url(#gB)" opacity="0.73"/>
<rect x="544.2" y="166.4" width="1.05" height="22.67" fill="url(#gc)" opacity="0.63"/>
<rect x="546.2" y="172.14" width="1.05" height="41.92" fill="url(#gK)" opacity="0.79"/>
<rect x="547.2" y="175.79" width="1.05" height="44.32" fill="url(#gK)" opacity="0.73"/>
<rect x="548.2" y="166.4" width="1.05" height="53.56" fill="url(#gc)" opacity="0.85"/>
<rect x="551.2" y="166.4" width="1.05" height="33.51" fill="url(#gc)" opacity="0.81"/>
<rect x="553.2" y="166.58" width="1.05" height="36.79" fill="url(#gK)" opacity="0.62"/>
<rect x="554.2" y="166.4" width="1.05" height="44.74" fill="url(#gB)" opacity="0.51"/>
<rect x="555.2" y="171.31" width="1.05" height="24.73" fill="url(#gK)" opacity="0.71"/>
<rect x="556.2" y="181.17" width="1.05" height="23.99" fill="url(#gK)" opacity="0.41"/>
<rect x="557.2" y="166.4" width="1.05" height="46.27" fill="url(#gc)" opacity="0.68"/>
<rect x="560.2" y="166.4" width="1.05" height="44.23" fill="url(#gB)" opacity="0.53"/>
<rect x="561.2" y="175.84" width="1.05" height="33.94" fill="url(#gK)" opacity="0.72"/>
<rect x="562.2" y="174.75" width="1.05" height="32.69" fill="url(#gK)" opacity="0.47"/>
<rect x="564.2" y="166.4" width="1.05" height="38.96" fill="url(#gc)" opacity="0.79"/>
<rect x="568.2" y="178.07" width="1.05" height="32.89" fill="url(#gK)" opacity="0.65"/>
<rect x="569.2" y="166.4" width="1.05" height="45.77" fill="url(#gB)" opacity="0.73"/>
<rect x="570.2" y="166.4" width="1.05" height="53.24" fill="url(#gB)" opacity="0.77"/>
<rect x="572.2" y="166.4" width="1.05" height="48.53" fill="url(#gB)" opacity="0.68"/>
<rect x="573.2" y="166.4" width="1.05" height="38.33" fill="url(#gB)" opacity="0.44"/>
<rect x="575.2" y="166.4" width="1.05" height="39.7" fill="url(#gB)" opacity="0.53"/>
<rect x="576.2" y="179.4" width="1.05" height="34.83" fill="url(#gK)" opacity="0.43"/>
<rect x="577.2" y="166.4" width="1.05" height="53.39" fill="url(#gB)" opacity="0.8"/>
<rect x="578.2" y="166.4" width="1.05" height="42.5" fill="url(#gB)" opacity="0.9"/>
<rect x="580.2" y="166.4" width="1.05" height="50.84" fill="url(#gB)" opacity="0.57"/>
<rect x="581.2" y="166.4" width="1.05" height="55.12" fill="url(#gB)" opacity="0.46"/>
<rect x="583.2" y="166.4" width="1.05" height="50.99" fill="url(#gc)" opacity="0.64"/>
<rect x="586.2" y="166.4" width="1.05" height="30.68" fill="url(#gB)" opacity="0.49"/>
<rect x="587.2" y="167.5" width="1.05" height="23.3" fill="url(#gK)" opacity="0.55"/>
<rect x="588.2" y="166.4" width="1.05" height="38.6" fill="url(#gB)" opacity="0.72"/>
<rect x="589.2" y="166.4" width="1.05" height="52.14" fill="url(#gB)" opacity="0.53"/>
<rect x="590.2" y="166.4" width="1.05" height="35.74" fill="url(#gc)" opacity="0.79"/>
<rect x="591.2" y="166.4" width="1.05" height="52.71" fill="url(#gB)" opacity="0.45"/>
<rect x="593.2" y="174.12" width="1.05" height="42.5" fill="url(#gK)" opacity="0.67"/>
<rect x="595.2" y="166.4" width="1.05" height="35.42" fill="url(#gB)" opacity="0.85"/>
<rect x="596.2" y="166.4" width="1.05" height="36.8" fill="url(#gB)" opacity="0.43"/>
<rect x="599.2" y="166.4" width="1.05" height="54.13" fill="url(#gB)" opacity="0.46"/>
<rect x="600.2" y="170.19" width="1.05" height="35.42" fill="url(#gK)" opacity="0.53"/>
<rect x="601.2" y="170.22" width="1.05" height="43.5" fill="url(#gK)" opacity="0.49"/>
<rect x="603.2" y="166.4" width="1.05" height="32.9" fill="url(#gB)" opacity="0.87"/>
<rect x="605.2" y="166.4" width="1.05" height="44.82" fill="url(#gB)" opacity="0.84"/>
<rect x="606.2" y="166.4" width="1.05" height="39.55" fill="url(#gB)" opacity="0.4"/>
<rect x="607.2" y="166.4" width="1.05" height="47" fill="url(#gB)" opacity="0.65"/>
<rect x="609.2" y="166.4" width="1.05" height="31.23" fill="url(#gc)" opacity="0.61"/>
<rect x="610.2" y="166.4" width="1.05" height="43.44" fill="url(#gB)" opacity="0.75"/>
<rect x="611.2" y="166.4" width="1.05" height="46.34" fill="url(#gB)" opacity="0.9"/>
<rect x="613.2" y="166.4" width="1.05" height="48.06" fill="url(#gB)" opacity="0.45"/>
<rect x="614.2" y="166.4" width="1.05" height="52.64" fill="url(#gB)" opacity="0.75"/>
<rect x="616.2" y="178.96" width="1.05" height="30.52" fill="url(#gK)" opacity="0.61"/>
<rect x="619.2" y="166.4" width="1.05" height="52.83" fill="url(#gB)" opacity="0.57"/>
<rect x="620.2" y="180.69" width="1.05" height="45.28" fill="url(#gK)" opacity="0.65"/>
<rect x="621.2" y="166.4" width="1.05" height="34.51" fill="url(#gB)" opacity="0.82"/>
<rect x="622.2" y="166.4" width="1.05" height="34.09" fill="url(#gB)" opacity="0.69"/>
<rect x="623.2" y="166.4" width="1.05" height="47.15" fill="url(#gc)" opacity="0.52"/>
<rect x="624.2" y="168.98" width="1.05" height="48.68" fill="url(#gK)" opacity="0.56"/>
<rect x="625.2" y="166.4" width="1.05" height="26.42" fill="url(#gc)" opacity="0.51"/>
<rect x="626.2" y="166.4" width="1.05" height="45.37" fill="url(#gB)" opacity="0.47"/>
<rect x="628.2" y="166.4" width="1.05" height="32.21" fill="url(#gc)" opacity="0.79"/>
<rect x="630.2" y="166.4" width="1.05" height="30.83" fill="url(#gc)" opacity="0.65"/>
<rect x="634.2" y="166.4" width="1.05" height="34.44" fill="url(#gB)" opacity="0.9"/>
<rect x="635.2" y="168.12" width="1.05" height="35.41" fill="url(#gK)" opacity="0.71"/>
<rect x="637.2" y="166.4" width="1.05" height="37.59" fill="url(#gB)" opacity="0.44"/>
<rect x="638.2" y="166.4" width="1.05" height="44.36" fill="url(#gB)" opacity="0.62"/>
<rect x="639.2" y="166.4" width="1.05" height="32.74" fill="url(#gB)" opacity="0.52"/>
<rect x="643.2" y="179.83" width="1.05" height="30.87" fill="url(#gK)" opacity="0.7"/>
<rect x="647.2" y="177.41" width="1.05" height="27.66" fill="url(#gK)" opacity="0.77"/>
<rect x="648.2" y="166.4" width="1.05" height="40.77" fill="url(#gB)" opacity="0.78"/>
<rect x="650.2" y="166.4" width="1.05" height="52.59" fill="url(#gB)" opacity="0.52"/>
<rect x="651.2" y="166.4" width="1.05" height="31.36" fill="url(#gB)" opacity="0.63"/>
<rect x="652.2" y="166.4" width="1.05" height="28.33" fill="url(#gc)" opacity="0.74"/>
<rect x="653.2" y="166.4" width="1.05" height="56" fill="url(#gB)" opacity="0.9"/>
<rect x="654.2" y="166.4" width="1.05" height="30.63" fill="url(#gB)" opacity="0.43"/>
<rect x="655.2" y="178.08" width="1.05" height="30.63" fill="url(#gK)" opacity="0.56"/>
<rect x="656.2" y="166.4" width="1.05" height="34.51" fill="url(#gB)" opacity="0.9"/>
<rect x="659.2" y="166.4" width="1.05" height="42.41" fill="url(#gB)" opacity="0.78"/>
<rect x="661.2" y="166.4" width="1.05" height="39.81" fill="url(#gB)" opacity="0.81"/>
<rect x="662.2" y="166.4" width="1.05" height="48.12" fill="url(#gB)" opacity="0.75"/>
<rect x="663.2" y="180.27" width="1.05" height="36.59" fill="url(#gK)" opacity="0.53"/>
<rect x="667.2" y="166.4" width="1.05" height="49.41" fill="url(#gB)" opacity="0.59"/>
<rect x="668.2" y="166.4" width="1.05" height="55.42" fill="url(#gB)" opacity="0.53"/>
<rect x="669.2" y="166.4" width="1.05" height="32.45" fill="url(#gc)" opacity="0.49"/>
<rect x="670.2" y="166.4" width="1.05" height="47.16" fill="url(#gB)" opacity="0.72"/>
<rect x="672.2" y="166.4" width="1.05" height="37.67" fill="url(#gB)" opacity="0.82"/>
<rect x="673.2" y="173.32" width="1.05" height="42.17" fill="url(#gK)" opacity="0.57"/>
<rect x="674.2" y="166.4" width="1.05" height="53.56" fill="url(#gB)" opacity="0.85"/>
<rect x="676.2" y="166.4" width="1.05" height="47.64" fill="url(#gB)" opacity="0.74"/>
<rect x="677.2" y="166.4" width="1.05" height="40.54" fill="url(#gB)" opacity="0.84"/>
<rect x="678.2" y="166.4" width="1.05" height="47.11" fill="url(#gB)" opacity="0.42"/>
<rect x="679.2" y="166.4" width="1.05" height="31.21" fill="url(#gB)" opacity="0.55"/>
<rect x="681.2" y="168.61" width="1.05" height="34.52" fill="url(#gK)" opacity="0.62"/>
<rect x="682.2" y="166.4" width="1.05" height="31.87" fill="url(#gB)" opacity="0.57"/>
<rect x="683.2" y="166.4" width="1.05" height="51.91" fill="url(#gB)" opacity="0.68"/>
<rect x="685.2" y="166.4" width="1.05" height="40.99" fill="url(#gB)" opacity="0.46"/>
<rect x="686.2" y="166.4" width="1.05" height="57.8" fill="url(#gB)" opacity="0.73"/>
<rect x="687.2" y="166.4" width="1.05" height="47.62" fill="url(#gB)" opacity="0.86"/>
<rect x="689.2" y="167.18" width="1.05" height="24.69" fill="url(#gK)" opacity="0.43"/>
<rect x="79.2" y="166.4" width="613.6" height="58" fill="url(#nk)" opacity=".5"/>
<polygon points="77.61,166.4 83.11,166.4 81.56,216.42 79.16,216.42" fill="url(#gH)"/>
<polygon points="99.89,166.4 106.01,166.4 104.15,231.39 101.75,231.39" fill="url(#gH)"/>
<polygon points="135.61,166.4 141.73,166.4 139.87,216.42 137.47,216.42" fill="url(#gH)"/>
<polygon points="176.71,166.4 182.84,166.4 180.97,213.93 178.57,213.93" fill="url(#gH)"/>
<polygon points="180.2,166.4 186.95,166.4 184.78,211.43 182.38,211.43" fill="url(#gH)"/>
<polygon points="275.15,166.4 281.9,166.4 279.72,226.4 277.32,226.4" fill="url(#gH)"/>
<polygon points="290.14,166.4 298.14,166.4 295.34,223.91 292.94,223.91" fill="url(#gH)"/>
<polygon points="311.12,166.4 317.87,166.4 315.7,216.42 313.3,216.42" fill="url(#gH)"/>
<polygon points="322.08,166.4 331.33,166.4 327.91,218.92 325.51,218.92" fill="url(#gH)"/>
<polygon points="328.62,166.4 336.62,166.4 333.82,213.93 331.42,213.93" fill="url(#gH)"/>
<polygon points="358.1,166.4 363.6,166.4 362.05,233.89 359.65,233.89" fill="url(#gH)"/>
<polygon points="367.01,166.4 374.39,166.4 371.9,218.92 369.5,218.92" fill="url(#gH)"/>
<polygon points="378.09,166.4 384.84,166.4 382.67,238.13 380.27,238.13" fill="url(#gH)"/>
<polygon points="401.7,166.4 407.2,166.4 405.65,216.42 403.25,216.42" fill="url(#gH)"/>
<polygon points="414.78,166.4 420.9,166.4 419.04,213.93 416.64,213.93" fill="url(#gH)"/>
<polygon points="426.68,166.4 433.43,166.4 431.25,218.92 428.85,218.92" fill="url(#gH)"/>
<polygon points="444.64,166.4 450.14,166.4 448.59,222.66 446.19,222.66" fill="url(#gH)"/>
<polygon points="450.27,166.4 457.64,166.4 455.15,221.41 452.75,221.41" fill="url(#gH)"/>
<polygon points="460.13,166.4 465.63,166.4 464.08,218.92 461.68,218.92" fill="url(#gH)"/>
<polygon points="477.24,166.4 483.99,166.4 481.81,223.91 479.41,223.91" fill="url(#gH)"/>
<polygon points="519.52,166.4 526.27,166.4 524.09,228.9 521.69,228.9" fill="url(#gH)"/>
<polygon points="526.71,166.4 532.21,166.4 530.66,226.4 528.26,226.4" fill="url(#gH)"/>
<polygon points="545.75,166.4 551.25,166.4 549.7,207.69 547.3,207.69" fill="url(#gH)"/>
<polygon points="572.62,166.4 578.74,166.4 576.88,228.9 574.48,228.9" fill="url(#gH)"/>
<polygon points="577.92,166.4 583.42,166.4 581.87,213.93 579.47,213.93" fill="url(#gH)"/>
<polygon points="595.94,166.4 602.69,166.4 600.51,218.92 598.11,218.92" fill="url(#gH)"/>
<polygon points="608.38,166.4 613.88,166.4 612.33,223.91 609.93,223.91" fill="url(#gH)"/>
<polygon points="617.57,166.4 623.07,166.4 621.52,207.69 619.12,207.69" fill="url(#gH)"/>
<polygon points="626.77,166.4 632.27,166.4 630.72,216.42 628.32,216.42" fill="url(#gH)"/>
<polygon points="646.46,166.4 651.96,166.4 650.41,213.93 648.01,213.93" fill="url(#gH)"/>
<polygon points="656,166.4 662.13,166.4 660.26,236.38 657.86,236.38" fill="url(#gH)"/>
<polygon points="669.48,166.4 676.23,166.4 674.05,228.9 671.65,228.9" fill="url(#gH)"/>
<polygon points="674.73,166.4 681.48,166.4 679.31,233.89 676.91,233.89" fill="url(#gH)"/>
<polygon points="679.95,166.4 685.45,166.4 683.9,222.66 681.5,222.66" fill="url(#gH)"/>
<polygon points="684.55,166.4 690.05,166.4 688.5,211.43 686.1,211.43" fill="url(#gH)"/>
<polygon points="79.26,166.4 81.46,166.4 80.96,219.05 79.76,219.05" fill="url(#gG)"/>
<rect x="87.93" y="166.4" width="1.15" height="68.41" fill="url(#gC)"/>
<rect x="93.37" y="166.4" width="1.3" height="71.04" fill="url(#gY)"/>
<polygon points="101.58,166.4 104.33,166.4 103.55,234.81 102.35,234.81" fill="url(#gG)"/>
<rect x="107.19" y="166.4" width="1.5" height="36.9" fill="url(#gc)"/>
<rect x="116.82" y="166.4" width="1.15" height="65.79" fill="url(#gG)"/>
<rect x="121.34" y="166.4" width="1.3" height="59.22" fill="url(#gG)"/>
<rect x="125.94" y="166.4" width="1.3" height="63.16" fill="url(#gG)"/>
<rect x="133.24" y="166.4" width="1.15" height="50.03" fill="url(#gc)"/>
<polygon points="137.29,166.4 140.04,166.4 139.27,219.05 138.07,219.05" fill="url(#gG)"/>
<rect x="144.98" y="166.4" width="1.3" height="59.22" fill="url(#gY)"/>
<rect x="148.34" y="166.4" width="1.15" height="36.9" fill="url(#gC)"/>
<rect x="154.73" y="166.4" width="1.5" height="50.03" fill="url(#gc)"/>
<rect x="163.26" y="166.4" width="1.5" height="50.03" fill="url(#gc)"/>
<rect x="170.92" y="166.4" width="1.15" height="34.27" fill="url(#gG)"/>
<rect x="173.03" y="166.4" width="1.15" height="30.33" fill="url(#gC)"/>
<polygon points="178.4,166.4 181.15,166.4 180.37,216.43 179.17,216.43" fill="url(#gC)"/>
<polygon points="181.93,166.4 185.23,166.4 184.18,213.8 182.98,213.8" fill="url(#gG)"/>
<rect x="187.33" y="166.4" width="1.15" height="55.28" fill="url(#gC)"/>
<rect x="189.3" y="166.4" width="1.15" height="60.53" fill="url(#gC)"/>
<rect x="193.83" y="166.4" width="1.3" height="75.5" fill="url(#gY)"/>
<rect x="196.92" y="166.4" width="1.15" height="63.16" fill="url(#gG)"/>
<rect x="199.15" y="166.4" width="1.15" height="71.04" fill="url(#gG)"/>
<rect x="201.12" y="166.4" width="1.15" height="50.03" fill="url(#gC)"/>
<rect x="202.76" y="166.4" width="1.3" height="75.5" fill="url(#gY)"/>
<rect x="211.82" y="166.4" width="1.3" height="75.5" fill="url(#gY)"/>
<rect x="216.88" y="166.4" width="1.15" height="23.76" fill="url(#gC)"/>
<rect x="224.1" y="166.4" width="1.15" height="50.03" fill="url(#gC)"/>
<rect x="225.9" y="166.4" width="1.5" height="65.79" fill="url(#gG)"/>
<rect x="228.44" y="166.4" width="1.15" height="50.03" fill="url(#gG)"/>
<rect x="233.95" y="166.4" width="1.15" height="23.76" fill="url(#gC)"/>
<rect x="236.58" y="166.4" width="1.15" height="36.9" fill="url(#gc)"/>
<rect x="242.41" y="166.4" width="1.3" height="65.79" fill="url(#gG)"/>
<rect x="249.64" y="166.4" width="1.3" height="60.53" fill="url(#gG)"/>
<rect x="252.99" y="166.4" width="1.15" height="40.84" fill="url(#gC)"/>
<rect x="256.93" y="166.4" width="1.15" height="55.28" fill="url(#gG)"/>
<rect x="261.79" y="166.4" width="1.15" height="75.5" fill="url(#gY)"/>
<rect x="265.47" y="166.4" width="1.15" height="36.9" fill="url(#gC)"/>
<rect x="269.07" y="166.4" width="1.3" height="50.03" fill="url(#gG)"/>
<rect x="273.35" y="166.4" width="1.15" height="43.46" fill="url(#gc)"/>
<polygon points="276.87,166.4 280.17,166.4 279.12,229.56 277.92,229.56" fill="url(#gG)"/>
<rect x="281.88" y="166.4" width="1.15" height="30.33" fill="url(#gC)"/>
<rect x="286.74" y="166.4" width="1.15" height="50.03" fill="url(#gC)"/>
<polygon points="291.94,166.4 296.34,166.4 294.74,226.93 293.54,226.93" fill="url(#gG)"/>
<rect x="303.08" y="166.4" width="1.3" height="65.79" fill="url(#gG)"/>
<rect x="305.78" y="166.4" width="1.15" height="36.9" fill="url(#gC)"/>
<polygon points="312.85,166.4 316.15,166.4 315.1,219.05 313.9,219.05" fill="url(#gG)"/>
<rect x="316.94" y="166.4" width="1.15" height="71.04" fill="url(#gG)"/>
<rect x="319.83" y="166.4" width="1.15" height="50.03" fill="url(#gC)"/>
<polygon points="323.96,166.4 329.46,166.4 327.31,221.68 326.11,221.68" fill="url(#gG)"/>
<rect x="327.71" y="166.4" width="1.15" height="75.5" fill="url(#gG)"/>
<polygon points="330.42,166.4 334.82,166.4 333.22,216.43 332.02,216.43" fill="url(#gG)"/>
<rect x="337.95" y="166.4" width="1.15" height="60.53" fill="url(#gY)"/>
<rect x="340.5" y="166.4" width="1.3" height="75.5" fill="url(#gY)"/>
<rect x="346.41" y="166.4" width="1.3" height="65.79" fill="url(#gG)"/>
<rect x="350.43" y="166.4" width="1.15" height="40.84" fill="url(#gC)"/>
<rect x="356.34" y="166.4" width="1.15" height="47.4" fill="url(#gC)"/>
<polygon points="359.75,166.4 361.95,166.4 361.45,237.44 360.25,237.44" fill="url(#gG)"/>
<rect x="364.22" y="166.4" width="1.15" height="50.03" fill="url(#gc)"/>
<polygon points="368.78,166.4 372.63,166.4 371.3,221.68 370.1,221.68" fill="url(#gG)"/>
<rect x="376.04" y="166.4" width="1.15" height="36.9" fill="url(#gG)"/>
<polygon points="379.82,166.4 383.12,166.4 382.07,241.9 380.87,241.9" fill="url(#gY)"/>
<rect x="387.2" y="166.4" width="1.15" height="36.9" fill="url(#gC)"/>
<rect x="393.29" y="166.4" width="1.3" height="71.04" fill="url(#gY)"/>
<rect x="397.96" y="166.4" width="1.15" height="43.46" fill="url(#gC)"/>
<rect x="399.93" y="166.4" width="1.15" height="36.9" fill="url(#gC)"/>
<polygon points="403.35,166.4 405.55,166.4 405.05,219.05 403.85,219.05" fill="url(#gG)"/>
<rect x="408.39" y="166.4" width="1.3" height="71.04" fill="url(#gY)"/>
<rect x="413.72" y="166.4" width="1.15" height="43.46" fill="url(#gC)"/>
<polygon points="416.46,166.4 419.21,166.4 418.44,216.43 417.24,216.43" fill="url(#gG)"/>
<rect x="420.94" y="166.4" width="1.15" height="30.33" fill="url(#gc)"/>
<rect x="428.82" y="166.4" width="1.15" height="75.5" fill="url(#gG)"/>
<polygon points="428.4,166.4 431.7,166.4 430.65,221.68 429.45,221.68" fill="url(#gG)"/>
<rect x="434.73" y="166.4" width="1.15" height="50.03" fill="url(#gc)"/>
<rect x="439.98" y="166.4" width="1.15" height="50.03" fill="url(#gC)"/>
<rect x="442.61" y="166.4" width="1.15" height="36.9" fill="url(#gY)"/>
<polygon points="446.29,166.4 448.49,166.4 447.99,225.62 446.79,225.62" fill="url(#gG)"/>
<polygon points="452.03,166.4 455.88,166.4 454.55,224.31 453.35,224.31" fill="url(#gG)"/>
<rect x="459.02" y="166.4" width="1.15" height="30.33" fill="url(#gC)"/>
<polygon points="461.78,166.4 463.98,166.4 463.48,221.68 462.28,221.68" fill="url(#gG)"/>
<rect x="468.7" y="166.4" width="1.5" height="55.28" fill="url(#gc)"/>
<rect x="472.81" y="166.4" width="1.15" height="52.65" fill="url(#gG)"/>
<rect x="474.78" y="166.4" width="1.15" height="36.9" fill="url(#gC)"/>
<polygon points="478.96,166.4 482.26,166.4 481.21,226.93 480.01,226.93" fill="url(#gG)"/>
<rect x="486.6" y="166.4" width="1.15" height="23.76" fill="url(#gc)"/>
<rect x="491.2" y="166.4" width="1.15" height="30.33" fill="url(#gc)"/>
<rect x="497.95" y="166.4" width="1.3" height="75.5" fill="url(#gY)"/>
<rect x="502.62" y="166.4" width="1.15" height="50.03" fill="url(#gC)"/>
<rect x="505.17" y="166.4" width="1.3" height="63.16" fill="url(#gG)"/>
<rect x="509.18" y="166.4" width="1.15" height="36.9" fill="url(#gC)"/>
<rect x="513.05" y="166.4" width="1.3" height="71.04" fill="url(#gG)"/>
<rect x="518.3" y="166.4" width="1.3" height="65.79" fill="url(#gG)"/>
<polygon points="521.24,166.4 524.54,166.4 523.49,232.19 522.29,232.19" fill="url(#gG)"/>
<polygon points="528.36,166.4 530.56,166.4 530.06,229.56 528.86,229.56" fill="url(#gG)"/>
<rect x="534.79" y="166.4" width="1.15" height="43.46" fill="url(#gc)"/>
<rect x="543.98" y="166.4" width="1.15" height="71.04" fill="url(#gG)"/>
<polygon points="547.4,166.4 549.6,166.4 549.1,209.86 547.9,209.86" fill="url(#gG)"/>
<rect x="552.52" y="166.4" width="1.15" height="50.03" fill="url(#gC)"/>
<rect x="557.7" y="166.4" width="1.3" height="63.16" fill="url(#gG)"/>
<rect x="559.74" y="166.4" width="1.15" height="55.28" fill="url(#gG)"/>
<rect x="564.99" y="166.4" width="1.15" height="36.9" fill="url(#gC)"/>
<rect x="568.86" y="166.4" width="1.3" height="75.5" fill="url(#gY)"/>
<rect x="570.9" y="166.4" width="1.15" height="75.5" fill="url(#gG)"/>
<polygon points="574.31,166.4 577.06,166.4 576.28,232.19 575.08,232.19" fill="url(#gG)"/>
<polygon points="579.57,166.4 581.77,166.4 581.27,216.43 580.07,216.43" fill="url(#gc)"/>
<rect x="583.96" y="166.4" width="1.3" height="36.9" fill="url(#gG)"/>
<rect x="588.63" y="166.4" width="1.15" height="43.46" fill="url(#gC)"/>
<rect x="594.54" y="166.4" width="1.15" height="68.41" fill="url(#gG)"/>
<polygon points="597.66,166.4 600.96,166.4 599.91,221.68 598.71,221.68" fill="url(#gG)"/>
<rect x="603.99" y="166.4" width="1.15" height="43.46" fill="url(#gC)"/>
<rect x="606.35" y="166.4" width="1.15" height="52.65" fill="url(#gG)"/>
<polygon points="610.03,166.4 612.23,166.4 611.73,226.93 610.53,226.93" fill="url(#gG)"/>
<rect x="612.92" y="166.4" width="1.15" height="50.03" fill="url(#gG)"/>
<polygon points="619.22,166.4 621.42,166.4 620.92,209.86 619.72,209.86" fill="url(#gC)"/>
<polygon points="628.42,166.4 630.62,166.4 630.12,219.05 628.92,219.05" fill="url(#gG)"/>
<rect x="633.46" y="166.4" width="1.3" height="55.28" fill="url(#gG)"/>
<rect x="635.51" y="166.4" width="1.15" height="59.22" fill="url(#gC)"/>
<rect x="640.69" y="166.4" width="1.3" height="65.79" fill="url(#gG)"/>
<rect x="643.39" y="166.4" width="1.15" height="36.9" fill="url(#gc)"/>
<polygon points="648.11,166.4 650.31,166.4 649.81,216.43 648.61,216.43" fill="url(#gG)"/>
<rect x="653.89" y="166.4" width="1.15" height="30.33" fill="url(#gc)"/>
<polygon points="657.69,166.4 660.44,166.4 659.66,240.07 658.46,240.07" fill="url(#gY)"/>
<rect x="665.05" y="166.4" width="1.15" height="40.84" fill="url(#gC)"/>
<rect x="668.99" y="166.4" width="1.15" height="36.9" fill="url(#gC)"/>
<polygon points="671.2,166.4 674.5,166.4 673.45,232.19 672.25,232.19" fill="url(#gG)"/>
<polygon points="676.46,166.4 679.76,166.4 678.71,237.44 677.51,237.44" fill="url(#gG)"/>
<polygon points="681.6,166.4 683.8,166.4 683.3,225.62 682.1,225.62" fill="url(#gG)"/>
<polygon points="686.2,166.4 688.4,166.4 687.9,213.8 686.7,213.8" fill="url(#gG)"/>
<rect x="690.01" y="166.4" width="1.15" height="36.9" fill="url(#gC)"/>
<rect x="193.65" y="166.4" width="1.1" height="102" fill="url(#gT)" opacity="0.8"/>
<rect x="202.95" y="166.4" width="1.1" height="92" fill="url(#gT)" opacity="0.8"/>
<rect x="212.25" y="166.4" width="1.1" height="141" fill="url(#gF)" opacity="0.9"/>
<rect x="277.45" y="166.4" width="1.1" height="156" fill="url(#gF)" opacity="0.3"/>
<rect x="315.45" y="166.4" width="1.1" height="60" fill="url(#gT)" opacity="0.7"/>
<rect x="327.75" y="166.4" width="1.1" height="90" fill="url(#gT)" opacity="0.7"/>
<rect x="341.15" y="166.4" width="1.1" height="84" fill="url(#gT)" opacity="0.7"/>
<rect x="361.45" y="166.4" width="1.1" height="92" fill="url(#gT)" opacity="0.7"/>
<rect x="380.45" y="166.4" width="1.1" height="152" fill="url(#gF)" opacity="0.55"/>
<rect x="407.95" y="166.4" width="1.1" height="118" fill="url(#gT)" opacity="0.4"/>
<rect x="429.05" y="166.4" width="1.1" height="82" fill="url(#gT)" opacity="0.8"/>
<rect x="456.45" y="166.4" width="1.1" height="118" fill="url(#gT)" opacity="0.35"/>
<rect x="528.25" y="166.4" width="1.1" height="118" fill="url(#gT)" opacity="0.35"/>
<rect x="569.45" y="166.4" width="1.1" height="95" fill="url(#gT)" opacity="0.8"/>
<rect x="576.45" y="166.4" width="1.1" height="75" fill="url(#gT)" opacity="0.8"/>
<rect x="596.45" y="166.4" width="1.1" height="75" fill="url(#gT)" opacity="0.8"/>
<rect x="658.95" y="166.4" width="1.1" height="80" fill="url(#gT)" opacity="0.8"/>
<rect x="677.45" y="166.4" width="1.1" height="138" fill="url(#gF)" opacity="0.35"/>
<rect x="79.2" y="192.4" width="613.6" height="48" fill="url(#nk2)" opacity=".3"/>
<rect x="79.2" y="166.4" width="613.6" height="26" fill="url(#nk2)" opacity=".22"/>
<rect x="79.2" y="166.4" width="613.6" height="42" fill="url(#nc)" opacity=".26"/>
<rect x="79.2" y="166.4" width="613.6" height="42" fill="url(#nB)" opacity=".25"/>
</g>
<g clip-path="url(#c2)" filter="url(#bl)">
<rect x="77.2" y="330" width="617.6" height="160" fill="#000030"/>
<rect x="79.2" y="332" width="613.6" height="60.05" fill="#000868"/>
<rect x="79.2" y="392" width="613.6" height="4.45" fill="#0c48d8"/>
<rect x="79.2" y="396.4" width="613.6" height="8.65" fill="#000880"/>
<rect x="79.2" y="405" width="613.6" height="3.65" fill="#0420b0"/>
<rect x="79.2" y="408.6" width="613.6" height="2.85" fill="#000870"/>
<rect x="79.2" y="411.3" width="613.6" height="1.75" fill="#30d8ff"/>
<rect x="79.2" y="412.8" width="613.6" height="0.85" fill="#0010a0"/>
<rect x="79.2" y="413.8" width="613.6" height="1.05" fill="#0c48f0"/>
<rect x="79.2" y="414.8" width="613.6" height="15.25" fill="#000014"/>
<rect x="79.2" y="430" width="613.6" height="2.85" fill="#041cb0"/>
<rect x="79.2" y="432.8" width="613.6" height="1.85" fill="#000870"/>
<rect x="79.2" y="434.5" width="613.6" height="1.55" fill="#30e0ff"/>
<rect x="79.2" y="436" width="613.6" height="1.05" fill="#000868"/>
<rect x="79.2" y="436.9" width="613.6" height="1.55" fill="#30d8ff"/>
<rect x="79.2" y="438.4" width="613.6" height="2.85" fill="#000048"/>
<rect x="79.2" y="441.2" width="613.6" height="1.25" fill="#1070f8"/>
<rect x="79.2" y="442.4" width="613.6" height="7.65" fill="#000880"/>
<rect x="79.2" y="450" width="613.6" height="3.85" fill="#000018"/>
<rect x="79.2" y="453.6" width="613.6" height="1.75" fill="#30f0a0"/>
<rect x="79.2" y="455.1" width="613.6" height="2.55" fill="#041cb0"/>
<rect x="79.2" y="457.8" width="613.6" height="1.25" fill="#1480e8"/>
<rect x="79.2" y="459.1" width="613.6" height="0.95" fill="#000008"/>
<rect x="79.2" y="460.1" width="613.6" height="1.35" fill="#d0f4f0"/>
<rect x="79.2" y="461.5" width="613.6" height="0.55" fill="#001000"/>
<rect x="79.2" y="462" width="613.6" height="1.55" fill="#50ff30"/>
<rect x="79.2" y="463.3" width="613.6" height="0.75" fill="#000828"/>
<rect x="79.2" y="464" width="613.6" height="10.35" fill="#000030"/>
<rect x="79.2" y="474.2" width="613.6" height="1.75" fill="#30e0f0"/>
<rect x="79.2" y="475.8" width="613.6" height="1.05" fill="#000860"/>
<rect x="79.2" y="477" width="613.6" height="1.05" fill="#0c70e0"/>
<rect x="79.2" y="478.1" width="613.6" height="1.25" fill="#000008"/>
<rect x="79.2" y="479.3" width="613.6" height="1.35" fill="#ffffff"/>
<rect x="79.2" y="480.8" width="613.6" height="0.85" fill="#50d0c0"/>
<rect x="79.2" y="481.6" width="613.6" height="2.15" fill="#f4f870"/>
<rect x="79.2" y="483.9" width="613.6" height="1.05" fill="#28a028"/>
<rect x="79.2" y="484.9" width="613.6" height="1.55" fill="#080000"/>
<rect x="79.2" y="486.2" width="613.6" height="1.75" fill="#f02020"/>
<rect x="79.2" y="487.9" width="613.6" height="0.15" fill="#800000"/>
<rect x="79.2" y="332" width="613.6" height="60" fill="url(#nb)" opacity="0.6"/>
<rect x="79.2" y="332" width="613.6" height="60" fill="url(#nB)" opacity="0.25"/>
<rect x="79.2" y="332" width="613.6" height="60" fill="url(#nk)" opacity="0.55"/>
<rect x="79.2" y="392" width="613.6" height="4.4" fill="url(#nc)" opacity="0.7"/>
<rect x="79.2" y="392" width="613.6" height="4.4" fill="url(#nB)" opacity="0.6"/>
<rect x="79.2" y="392" width="613.6" height="4.4" fill="url(#nk)" opacity="0.35"/>
<rect x="79.2" y="396.4" width="613.6" height="8.6" fill="url(#nb)" opacity="0.55"/>
<rect x="79.2" y="396.4" width="613.6" height="8.6" fill="url(#nB)" opacity="0.2"/>
<rect x="79.2" y="396.4" width="613.6" height="8.6" fill="url(#nk)" opacity="0.5"/>
<rect x="79.2" y="405" width="613.6" height="3.6" fill="url(#nB)" opacity="0.55"/>
<rect x="79.2" y="405" width="613.6" height="3.6" fill="url(#nc)" opacity="0.35"/>
<rect x="79.2" y="405" width="613.6" height="3.6" fill="url(#nk)" opacity="0.4"/>
<rect x="79.2" y="408.6" width="613.6" height="2.8" fill="url(#nb)" opacity="0.5"/>
<rect x="79.2" y="408.6" width="613.6" height="2.8" fill="url(#nk)" opacity="0.4"/>
<rect x="79.2" y="414.8" width="613.6" height="15.2" fill="url(#nb)" opacity="0.3"/>
<rect x="79.2" y="430" width="613.6" height="2.8" fill="url(#nB)" opacity="0.5"/>
<rect x="79.2" y="430" width="613.6" height="2.8" fill="url(#nc)" opacity="0.3"/>
<rect x="79.2" y="430" width="613.6" height="2.8" fill="url(#nk)" opacity="0.4"/>
<rect x="79.2" y="438.4" width="613.6" height="2.8" fill="url(#nb)" opacity="0.35"/>
<rect x="79.2" y="442.4" width="613.6" height="7.6" fill="url(#nb)" opacity="0.55"/>
<rect x="79.2" y="442.4" width="613.6" height="7.6" fill="url(#nB)" opacity="0.2"/>
<rect x="79.2" y="442.4" width="613.6" height="7.6" fill="url(#nk)" opacity="0.5"/>
<rect x="79.2" y="450" width="613.6" height="3.8" fill="url(#nb)" opacity="0.2"/>
<rect x="79.2" y="455.1" width="613.6" height="2.5" fill="url(#nB)" opacity="0.5"/>
<rect x="79.2" y="455.1" width="613.6" height="2.5" fill="url(#nc)" opacity="0.35"/>
<rect x="79.2" y="455.1" width="613.6" height="2.5" fill="url(#nk)" opacity="0.3"/>
<rect x="79.2" y="457.8" width="613.6" height="1.2" fill="url(#nk)" opacity="0.4"/>
<rect x="79.2" y="464" width="613.6" height="10.3" fill="url(#nb)" opacity="0.45"/>
<rect x="79.2" y="464" width="613.6" height="10.3" fill="url(#nB)" opacity="0.2"/>
<rect x="79.2" y="464" width="613.6" height="10.3" fill="url(#nk)" opacity="0.55"/>
<rect x="79.2" y="477" width="613.6" height="1" fill="url(#nk)" opacity="0.4"/>
<path d="M79.2 341.6H692.8" stroke="#30b0ff" stroke-width="1" stroke-dasharray="14 8 5 11 22 9" opacity=".5" fill="none"/>
<rect x="89.6" y="468.96" width="1.84" height="1.96" fill="#1890ff" opacity="0.34"/>
<rect x="149.96" y="470.79" width="2.2" height="1.21" fill="#1890ff" opacity="0.52"/>
<rect x="481.22" y="469.68" width="1.91" height="1.63" fill="#1890ff" opacity="0.42"/>
<rect x="682.6" y="467.1" width="1.78" height="2.32" fill="#1890ff" opacity="0.42"/>
<rect x="201.81" y="468.82" width="2.49" height="2.34" fill="#1890ff" opacity="0.36"/>
<rect x="212.92" y="469.74" width="3.25" height="2.34" fill="#1890ff" opacity="0.55"/>
<rect x="296.43" y="471.18" width="2.11" height="2.38" fill="#1890ff" opacity="0.31"/>
<rect x="525.14" y="470.26" width="4.11" height="1.31" fill="#1890ff" opacity="0.54"/>
<rect x="521.99" y="470.2" width="2.08" height="1.31" fill="#1890ff" opacity="0.31"/>
<rect x="284.68" y="468.98" width="2.5" height="1.91" fill="#1890ff" opacity="0.55"/>
<rect x="661.49" y="471.97" width="4.43" height="2.11" fill="#1890ff" opacity="0.39"/>
<rect x="188.44" y="469.73" width="3.37" height="1.94" fill="#1890ff" opacity="0.33"/>
<rect x="198.38" y="470.01" width="4.26" height="1.97" fill="#1890ff" opacity="0.33"/>
<rect x="322.74" y="470.25" width="4.23" height="2.39" fill="#1890ff" opacity="0.36"/>
<rect x="356.26" y="469.22" width="3.9" height="2.1" fill="#1890ff" opacity="0.47"/>
<rect x="153.33" y="471.91" width="1.8" height="1.17" fill="#1890ff" opacity="0.36"/>
<rect x="284.2" y="471.27" width="3.64" height="1.67" fill="#1890ff" opacity="0.45"/>
<rect x="557.31" y="468.86" width="2.33" height="1.86" fill="#1890ff" opacity="0.49"/>
<rect x="105.14" y="467.69" width="1.84" height="2.02" fill="#1890ff" opacity="0.51"/>
<rect x="668.62" y="468.27" width="3.8" height="2.07" fill="#1890ff" opacity="0.6"/>
<rect x="292.32" y="468.88" width="1.53" height="1.4" fill="#1890ff" opacity="0.35"/>
<rect x="109.37" y="471.33" width="1.87" height="1.07" fill="#1890ff" opacity="0.48"/>
<rect x="206.64" y="471.1" width="2.08" height="1.42" fill="#1890ff" opacity="0.36"/>
<rect x="356.29" y="469.62" width="3.58" height="2.2" fill="#1890ff" opacity="0.42"/>
<rect x="397.99" y="469.31" width="3.65" height="2" fill="#1890ff" opacity="0.44"/>
<rect x="162.73" y="470.92" width="1.87" height="2.04" fill="#1890ff" opacity="0.58"/>
<rect x="498.07" y="467.83" width="3.24" height="2.19" fill="#1890ff" opacity="0.34"/>
<rect x="338.23" y="468.9" width="1.92" height="1.43" fill="#1890ff" opacity="0.43"/>
<rect x="510.7" y="468.21" width="3.12" height="2.09" fill="#1890ff" opacity="0.52"/>
<rect x="580.68" y="470.07" width="1.6" height="2.25" fill="#1890ff" opacity="0.38"/>
<rect x="79.2" y="332" width="1.05" height="54.55" fill="url(#gB)" opacity="0.91"/>
<rect x="80.2" y="332" width="1.05" height="53.2" fill="url(#gB)" opacity="0.74"/>
<rect x="81.2" y="339.56" width="1.05" height="41.89" fill="url(#gK)" opacity="0.72"/>
<rect x="82.2" y="333.09" width="1.05" height="35.01" fill="url(#gK)" opacity="0.72"/>
<rect x="83.2" y="332" width="1.05" height="31.42" fill="url(#gc)" opacity="0.89"/>
<rect x="85.2" y="332" width="1.05" height="50.93" fill="url(#gc)" opacity="0.56"/>
<rect x="86.2" y="332.71" width="1.05" height="42.44" fill="url(#gK)" opacity="0.48"/>
<rect x="87.2" y="332" width="1.05" height="40.78" fill="url(#gB)" opacity="0.68"/>
<rect x="88.2" y="332" width="1.05" height="61.9" fill="url(#gB)" opacity="0.71"/>
<rect x="89.2" y="332" width="1.05" height="46.99" fill="url(#gc)" opacity="0.76"/>
<rect x="90.2" y="332" width="1.05" height="47.23" fill="url(#gB)" opacity="0.95"/>
<rect x="94.2" y="332" width="1.05" height="45.97" fill="url(#gB)" opacity="0.59"/>
<rect x="95.2" y="336.8" width="1.05" height="50.29" fill="url(#gK)" opacity="0.74"/>
<rect x="96.2" y="332" width="1.05" height="64.91" fill="url(#gB)" opacity="0.87"/>
<rect x="97.2" y="342.92" width="1.05" height="31.92" fill="url(#gK)" opacity="0.59"/>
<rect x="99.2" y="332" width="1.05" height="41.9" fill="url(#gB)" opacity="0.76"/>
<rect x="101.2" y="332" width="1.05" height="42.27" fill="url(#gB)" opacity="0.62"/>
<rect x="104.2" y="333.21" width="1.05" height="33.13" fill="url(#gK)" opacity="0.42"/>
<rect x="106.2" y="337.37" width="1.05" height="43.46" fill="url(#gK)" opacity="0.48"/>
<rect x="108.2" y="333.4" width="1.05" height="46.24" fill="url(#gK)" opacity="0.57"/>
<rect x="109.2" y="343.65" width="1.05" height="33.9" fill="url(#gK)" opacity="0.72"/>
<rect x="110.2" y="332" width="1.05" height="63.01" fill="url(#gB)" opacity="0.56"/>
<rect x="111.2" y="332" width="1.05" height="62.21" fill="url(#gB)" opacity="0.77"/>
<rect x="112.2" y="334.56" width="1.05" height="57.65" fill="url(#gK)" opacity="0.5"/>
<rect x="114.2" y="332" width="1.05" height="47.7" fill="url(#gB)" opacity="0.49"/>
<rect x="115.2" y="334.92" width="1.05" height="44.23" fill="url(#gK)" opacity="0.64"/>
<rect x="116.2" y="332" width="1.05" height="51.78" fill="url(#gB)" opacity="0.93"/>
<rect x="117.2" y="332" width="1.05" height="54.94" fill="url(#gB)" opacity="0.88"/>
<rect x="118.2" y="342.9" width="1.05" height="30.09" fill="url(#gK)" opacity="0.73"/>
<rect x="119.2" y="332" width="1.05" height="44.93" fill="url(#gB)" opacity="0.82"/>
<rect x="121.2" y="342.59" width="1.05" height="56.35" fill="url(#gK)" opacity="0.64"/>
<rect x="122.2" y="332" width="1.05" height="42.7" fill="url(#gB)" opacity="0.47"/>
<rect x="124.2" y="332" width="1.05" height="58.32" fill="url(#gB)" opacity="0.58"/>
<rect x="126.2" y="332" width="1.05" height="39.98" fill="url(#gc)" opacity="0.57"/>
<rect x="128.2" y="338.71" width="1.05" height="32.54" fill="url(#gK)" opacity="0.74"/>
<rect x="129.2" y="332" width="1.05" height="39.53" fill="url(#gc)" opacity="0.87"/>
<rect x="130.2" y="335.23" width="1.05" height="25.55" fill="url(#gK)" opacity="0.58"/>
<rect x="131.2" y="336.43" width="1.05" height="30.82" fill="url(#gK)" opacity="0.63"/>
<rect x="132.2" y="342.69" width="1.05" height="36.95" fill="url(#gK)" opacity="0.79"/>
<rect x="133.2" y="332" width="1.05" height="53.5" fill="url(#gc)" opacity="0.73"/>
<rect x="134.2" y="332.21" width="1.05" height="26.16" fill="url(#gK)" opacity="0.76"/>
<rect x="137.2" y="337.79" width="1.05" height="45.99" fill="url(#gK)" opacity="0.69"/>
<rect x="138.2" y="332" width="1.05" height="65.98" fill="url(#gB)" opacity="0.49"/>
<rect x="139.2" y="332" width="1.05" height="59.16" fill="url(#gB)" opacity="0.9"/>
<rect x="144.2" y="332" width="1.05" height="57.81" fill="url(#gB)" opacity="0.9"/>
<rect x="146.2" y="332" width="1.05" height="60.55" fill="url(#gB)" opacity="0.88"/>
<rect x="147.2" y="332" width="1.05" height="51.25" fill="url(#gc)" opacity="0.65"/>
<rect x="148.2" y="332" width="1.05" height="50.7" fill="url(#gc)" opacity="0.53"/>
<rect x="149.2" y="332" width="1.05" height="63.77" fill="url(#gc)" opacity="0.85"/>
<rect x="151.2" y="332" width="1.05" height="59.11" fill="url(#gB)" opacity="0.74"/>
<rect x="152.2" y="332" width="1.05" height="61.8" fill="url(#gB)" opacity="0.49"/>
<rect x="154.2" y="337.77" width="1.05" height="44.84" fill="url(#gK)" opacity="0.49"/>
<rect x="155.2" y="332" width="1.05" height="46.91" fill="url(#gc)" opacity="0.75"/>
<rect x="157.2" y="332" width="1.05" height="40.29" fill="url(#gB)" opacity="0.6"/>
<rect x="158.2" y="332" width="1.05" height="36.89" fill="url(#gc)" opacity="0.57"/>
<rect x="160.2" y="332" width="1.05" height="45.03" fill="url(#gc)" opacity="0.86"/>
<rect x="161.2" y="332" width="1.05" height="57.31" fill="url(#gB)" opacity="0.55"/>
<rect x="162.2" y="332" width="1.05" height="60.96" fill="url(#gB)" opacity="0.91"/>
<rect x="164.2" y="332" width="1.05" height="55.16" fill="url(#gB)" opacity="0.61"/>
<rect x="165.2" y="342.05" width="1.05" height="41.38" fill="url(#gK)" opacity="0.74"/>
<rect x="168.2" y="332" width="1.05" height="44.4" fill="url(#gB)" opacity="0.68"/>
<rect x="169.2" y="332" width="1.05" height="45.57" fill="url(#gB)" opacity="0.66"/>
<rect x="170.2" y="332" width="1.05" height="46.79" fill="url(#gc)" opacity="0.63"/>
<rect x="173.2" y="332" width="1.05" height="41.94" fill="url(#gB)" opacity="0.47"/>
<rect x="175.2" y="338.85" width="1.05" height="48.38" fill="url(#gK)" opacity="0.52"/>
<rect x="177.2" y="337.46" width="1.05" height="29.48" fill="url(#gK)" opacity="0.41"/>
<rect x="179.2" y="332" width="1.05" height="43.66" fill="url(#gB)" opacity="0.47"/>
<rect x="180.2" y="332" width="1.05" height="45.18" fill="url(#gc)" opacity="0.75"/>
<rect x="181.2" y="332" width="1.05" height="57.45" fill="url(#gc)" opacity="0.88"/>
<rect x="182.2" y="332" width="1.05" height="36.78" fill="url(#gc)" opacity="0.69"/>
<rect x="183.2" y="337.67" width="1.05" height="25.36" fill="url(#gK)" opacity="0.69"/>
<rect x="184.2" y="336.15" width="1.05" height="33.99" fill="url(#gK)" opacity="0.68"/>
<rect x="185.2" y="332" width="1.05" height="55.98" fill="url(#gB)" opacity="0.83"/>
<rect x="186.2" y="332" width="1.05" height="60.59" fill="url(#gB)" opacity="0.9"/>
<rect x="187.2" y="340.67" width="1.05" height="55.78" fill="url(#gK)" opacity="0.45"/>
<rect x="188.2" y="332" width="1.05" height="56.26" fill="url(#gB)" opacity="0.9"/>
<rect x="189.2" y="332" width="1.05" height="54.79" fill="url(#gB)" opacity="0.89"/>
<rect x="192.2" y="332" width="1.05" height="56.93" fill="url(#gB)" opacity="0.55"/>
<rect x="195.2" y="332" width="1.05" height="54.4" fill="url(#gc)" opacity="0.59"/>
<rect x="199.2" y="332" width="1.05" height="60.56" fill="url(#gB)" opacity="0.61"/>
<rect x="202.2" y="332" width="1.05" height="42.15" fill="url(#gB)" opacity="0.67"/>
<rect x="203.2" y="332" width="1.05" height="56.12" fill="url(#gc)" opacity="0.69"/>
<rect x="204.2" y="332.77" width="1.05" height="51.7" fill="url(#gK)" opacity="0.72"/>
<rect x="205.2" y="341.45" width="1.05" height="36.06" fill="url(#gK)" opacity="0.46"/>
<rect x="206.2" y="340.68" width="1.05" height="42.05" fill="url(#gK)" opacity="0.74"/>
<rect x="207.2" y="332" width="1.05" height="62.16" fill="url(#gc)" opacity="0.7"/>
<rect x="209.2" y="338.32" width="1.05" height="32.31" fill="url(#gK)" opacity="0.52"/>
<rect x="211.2" y="332" width="1.05" height="47.77" fill="url(#gc)" opacity="0.84"/>
<rect x="212.2" y="332" width="1.05" height="40.6" fill="url(#gc)" opacity="0.65"/>
<rect x="215.2" y="343.62" width="1.05" height="53.08" fill="url(#gK)" opacity="0.61"/>
<rect x="216.2" y="332" width="1.05" height="36.83" fill="url(#gc)" opacity="0.71"/>
<rect x="217.2" y="332" width="1.05" height="55.74" fill="url(#gB)" opacity="0.46"/>
<rect x="219.2" y="332" width="1.05" height="50.42" fill="url(#gB)" opacity="0.85"/>
<rect x="220.2" y="332" width="1.05" height="46.7" fill="url(#gc)" opacity="0.78"/>
<rect x="221.2" y="336.97" width="1.05" height="42.78" fill="url(#gK)" opacity="0.78"/>
<rect x="223.2" y="332" width="1.05" height="52.3" fill="url(#gB)" opacity="0.51"/>
<rect x="224.2" y="332" width="1.05" height="61.21" fill="url(#gB)" opacity="0.9"/>
<rect x="225.2" y="332" width="1.05" height="48.25" fill="url(#gB)" opacity="0.55"/>
<rect x="226.2" y="332" width="1.05" height="61.46" fill="url(#gc)" opacity="0.55"/>
<rect x="228.2" y="334.73" width="1.05" height="31.41" fill="url(#gK)" opacity="0.67"/>
<rect x="229.2" y="332" width="1.05" height="49.24" fill="url(#gB)" opacity="0.76"/>
<rect x="230.2" y="333.47" width="1.05" height="49.12" fill="url(#gK)" opacity="0.6"/>
<rect x="231.2" y="332" width="1.05" height="45.14" fill="url(#gB)" opacity="0.72"/>
<rect x="232.2" y="332" width="1.05" height="49.77" fill="url(#gB)" opacity="0.66"/>
<rect x="233.2" y="332" width="1.05" height="44.15" fill="url(#gB)" opacity="0.55"/>
<rect x="234.2" y="332" width="1.05" height="51.71" fill="url(#gc)" opacity="0.71"/>
<rect x="236.2" y="332" width="1.05" height="59.13" fill="url(#gc)" opacity="0.59"/>
<rect x="240.2" y="332" width="1.05" height="48.19" fill="url(#gB)" opacity="0.91"/>
<rect x="241.2" y="342.65" width="1.05" height="57.95" fill="url(#gK)" opacity="0.45"/>
<rect x="242.2" y="332" width="1.05" height="58.89" fill="url(#gB)" opacity="0.58"/>
<rect x="243.2" y="337.06" width="1.05" height="52.46" fill="url(#gK)" opacity="0.72"/>
<rect x="244.2" y="340.22" width="1.05" height="38.29" fill="url(#gK)" opacity="0.41"/>
<rect x="245.2" y="342.94" width="1.05" height="47.52" fill="url(#gK)" opacity="0.79"/>
<rect x="246.2" y="341.1" width="1.05" height="41.69" fill="url(#gK)" opacity="0.6"/>
<rect x="247.2" y="332" width="1.05" height="36.43" fill="url(#gc)" opacity="0.53"/>
<rect x="248.2" y="338.62" width="1.05" height="26.24" fill="url(#gK)" opacity="0.61"/>
<rect x="249.2" y="332" width="1.05" height="34.98" fill="url(#gc)" opacity="0.57"/>
<rect x="250.2" y="343.88" width="1.05" height="52.73" fill="url(#gK)" opacity="0.77"/>
<rect x="251.2" y="343.42" width="1.05" height="27.04" fill="url(#gK)" opacity="0.58"/>
<rect x="253.2" y="332" width="1.05" height="52.14" fill="url(#gB)" opacity="0.71"/>
<rect x="254.2" y="332" width="1.05" height="55.62" fill="url(#gB)" opacity="0.46"/>
<rect x="257.2" y="340.87" width="1.05" height="39.98" fill="url(#gK)" opacity="0.56"/>
<rect x="258.2" y="338.15" width="1.05" height="30.45" fill="url(#gK)" opacity="0.41"/>
<rect x="263.2" y="332" width="1.05" height="43.75" fill="url(#gc)" opacity="0.74"/>
<rect x="264.2" y="332" width="1.05" height="65.55" fill="url(#gB)" opacity="0.85"/>
<rect x="265.2" y="332" width="1.05" height="63.69" fill="url(#gB)" opacity="0.82"/>
<rect x="268.2" y="332" width="1.05" height="63.31" fill="url(#gB)" opacity="0.89"/>
<rect x="269.2" y="332" width="1.05" height="56.09" fill="url(#gc)" opacity="0.81"/>
<rect x="270.2" y="332" width="1.05" height="58.79" fill="url(#gB)" opacity="0.49"/>
<rect x="271.2" y="332" width="1.05" height="52.19" fill="url(#gB)" opacity="0.46"/>
<rect x="272.2" y="332" width="1.05" height="56.61" fill="url(#gB)" opacity="0.76"/>
<rect x="273.2" y="332" width="1.05" height="64.56" fill="url(#gB)" opacity="0.78"/>
<rect x="274.2" y="332" width="1.05" height="57.15" fill="url(#gB)" opacity="0.73"/>
<rect x="275.2" y="332" width="1.05" height="50.13" fill="url(#gB)" opacity="0.95"/>
<rect x="276.2" y="332" width="1.05" height="53.84" fill="url(#gc)" opacity="0.8"/>
<rect x="278.2" y="340.87" width="1.05" height="45.31" fill="url(#gK)" opacity="0.5"/>
<rect x="279.2" y="332" width="1.05" height="41.31" fill="url(#gB)" opacity="0.55"/>
<rect x="280.2" y="332" width="1.05" height="42.56" fill="url(#gB)" opacity="0.58"/>
<rect x="282.2" y="332" width="1.05" height="47.27" fill="url(#gc)" opacity="0.89"/>
<rect x="283.2" y="332" width="1.05" height="63.83" fill="url(#gc)" opacity="0.76"/>
<rect x="285.2" y="341.11" width="1.05" height="44.72" fill="url(#gK)" opacity="0.42"/>
<rect x="287.2" y="334.03" width="1.05" height="40.57" fill="url(#gK)" opacity="0.6"/>
<rect x="288.2" y="332" width="1.05" height="31.99" fill="url(#gc)" opacity="0.88"/>
<rect x="289.2" y="332" width="1.05" height="53.7" fill="url(#gB)" opacity="0.75"/>
<rect x="290.2" y="332" width="1.05" height="47.43" fill="url(#gB)" opacity="0.78"/>
<rect x="291.2" y="332" width="1.05" height="39.64" fill="url(#gc)" opacity="0.79"/>
<rect x="292.2" y="332" width="1.05" height="40.36" fill="url(#gB)" opacity="0.57"/>
<rect x="293.2" y="341.06" width="1.05" height="30.17" fill="url(#gK)" opacity="0.56"/>
<rect x="296.2" y="343.33" width="1.05" height="57.63" fill="url(#gK)" opacity="0.43"/>
<rect x="298.2" y="332" width="1.05" height="52.42" fill="url(#gB)" opacity="0.94"/>
<rect x="299.2" y="332" width="1.05" height="53.61" fill="url(#gB)" opacity="0.92"/>
<rect x="301.2" y="332" width="1.05" height="65.45" fill="url(#gB)" opacity="0.86"/>
<rect x="302.2" y="332" width="1.05" height="33.91" fill="url(#gc)" opacity="0.75"/>
<rect x="303.2" y="332" width="1.05" height="45.3" fill="url(#gB)" opacity="0.48"/>
<rect x="304.2" y="332" width="1.05" height="43.23" fill="url(#gB)" opacity="0.67"/>
<rect x="305.2" y="332" width="1.05" height="45.49" fill="url(#gc)" opacity="0.6"/>
<rect x="306.2" y="332" width="1.05" height="44.26" fill="url(#gc)" opacity="0.81"/>
<rect x="307.2" y="332" width="1.05" height="65.94" fill="url(#gB)" opacity="0.93"/>
<rect x="309.2" y="332" width="1.05" height="42.96" fill="url(#gB)" opacity="0.9"/>
<rect x="311.2" y="332" width="1.05" height="42.21" fill="url(#gc)" opacity="0.61"/>
<rect x="312.2" y="332" width="1.05" height="49.21" fill="url(#gc)" opacity="0.74"/>
<rect x="313.2" y="332" width="1.05" height="55.61" fill="url(#gc)" opacity="0.58"/>
<rect x="314.2" y="332" width="1.05" height="65.47" fill="url(#gB)" opacity="0.91"/>
<rect x="316.2" y="335.25" width="1.05" height="27.01" fill="url(#gK)" opacity="0.57"/>
<rect x="317.2" y="332" width="1.05" height="33.48" fill="url(#gc)" opacity="0.72"/>
<rect x="318.2" y="340.12" width="1.05" height="27.85" fill="url(#gK)" opacity="0.62"/>
<rect x="319.2" y="332" width="1.05" height="42.69" fill="url(#gc)" opacity="0.69"/>
<rect x="320.2" y="340.94" width="1.05" height="36.34" fill="url(#gK)" opacity="0.74"/>
<rect x="321.2" y="341.71" width="1.05" height="28.95" fill="url(#gK)" opacity="0.65"/>
<rect x="323.2" y="335.1" width="1.05" height="39" fill="url(#gK)" opacity="0.72"/>
<rect x="324.2" y="332" width="1.05" height="57" fill="url(#gB)" opacity="0.94"/>
<rect x="325.2" y="332" width="1.05" height="54.26" fill="url(#gB)" opacity="0.82"/>
<rect x="327.2" y="332" width="1.05" height="49.6" fill="url(#gB)" opacity="0.5"/>
<rect x="329.2" y="338.77" width="1.05" height="27.74" fill="url(#gK)" opacity="0.59"/>
<rect x="330.2" y="332" width="1.05" height="40.16" fill="url(#gc)" opacity="0.81"/>
<rect x="331.2" y="339.95" width="1.05" height="32.04" fill="url(#gK)" opacity="0.43"/>
<rect x="332.2" y="332" width="1.05" height="58.85" fill="url(#gB)" opacity="0.8"/>
<rect x="333.2" y="332" width="1.05" height="43.72" fill="url(#gB)" opacity="0.63"/>
<rect x="335.2" y="332" width="1.05" height="43.05" fill="url(#gB)" opacity="0.8"/>
<rect x="336.2" y="332" width="1.05" height="61.23" fill="url(#gc)" opacity="0.88"/>
<rect x="338.2" y="332" width="1.05" height="60.88" fill="url(#gB)" opacity="0.6"/>
<rect x="339.2" y="332" width="1.05" height="50.39" fill="url(#gB)" opacity="0.92"/>
<rect x="341.2" y="332" width="1.05" height="49.4" fill="url(#gB)" opacity="0.63"/>
<rect x="342.2" y="332" width="1.05" height="50.29" fill="url(#gB)" opacity="0.64"/>
<rect x="343.2" y="341.56" width="1.05" height="43.61" fill="url(#gK)" opacity="0.62"/>
<rect x="345.2" y="332" width="1.05" height="36" fill="url(#gc)" opacity="0.8"/>
<rect x="347.2" y="332" width="1.05" height="40.58" fill="url(#gB)" opacity="0.71"/>
<rect x="348.2" y="332" width="1.05" height="54.75" fill="url(#gB)" opacity="0.93"/>
<rect x="349.2" y="332" width="1.05" height="57.35" fill="url(#gc)" opacity="0.53"/>
<rect x="350.2" y="332" width="1.05" height="60.49" fill="url(#gB)" opacity="0.49"/>
<rect x="351.2" y="342.79" width="1.05" height="49.32" fill="url(#gK)" opacity="0.43"/>
<rect x="352.2" y="332" width="1.05" height="34.89" fill="url(#gc)" opacity="0.8"/>
<rect x="353.2" y="332" width="1.05" height="38.35" fill="url(#gc)" opacity="0.59"/>
<rect x="355.2" y="332" width="1.05" height="59.88" fill="url(#gB)" opacity="0.65"/>
<rect x="356.2" y="332" width="1.05" height="65.18" fill="url(#gB)" opacity="0.79"/>
<rect x="357.2" y="332" width="1.05" height="53.97" fill="url(#gB)" opacity="0.81"/>
<rect x="360.2" y="332" width="1.05" height="61.48" fill="url(#gB)" opacity="0.78"/>
<rect x="366.2" y="332" width="1.05" height="47.81" fill="url(#gc)" opacity="0.78"/>
<rect x="368.2" y="332" width="1.05" height="50.93" fill="url(#gB)" opacity="0.52"/>
<rect x="371.2" y="332" width="1.05" height="44.36" fill="url(#gB)" opacity="0.55"/>
<rect x="372.2" y="332" width="1.05" height="47.59" fill="url(#gB)" opacity="0.93"/>
<rect x="373.2" y="333.38" width="1.05" height="35.18" fill="url(#gK)" opacity="0.66"/>
<rect x="375.2" y="337.51" width="1.05" height="27.06" fill="url(#gK)" opacity="0.63"/>
<rect x="377.2" y="334.21" width="1.05" height="28.59" fill="url(#gK)" opacity="0.49"/>
<rect x="378.2" y="332" width="1.05" height="58.65" fill="url(#gB)" opacity="0.75"/>
<rect x="379.2" y="332" width="1.05" height="44.81" fill="url(#gB)" opacity="0.59"/>
<rect x="380.2" y="335.74" width="1.05" height="50" fill="url(#gK)" opacity="0.62"/>
<rect x="382.2" y="332" width="1.05" height="46.77" fill="url(#gB)" opacity="0.89"/>
<rect x="384.2" y="332" width="1.05" height="54.23" fill="url(#gB)" opacity="0.93"/>
<rect x="385.2" y="332" width="1.05" height="45.75" fill="url(#gB)" opacity="0.47"/>
<rect x="388.2" y="332" width="1.05" height="53.72" fill="url(#gB)" opacity="0.71"/>
<rect x="389.2" y="332" width="1.05" height="65.75" fill="url(#gB)" opacity="0.78"/>
<rect x="390.2" y="332" width="1.05" height="40.28" fill="url(#gB)" opacity="0.69"/>
<rect x="391.2" y="332" width="1.05" height="60.72" fill="url(#gB)" opacity="0.81"/>
<rect x="392.2" y="332" width="1.05" height="35.35" fill="url(#gc)" opacity="0.56"/>
<rect x="393.2" y="332" width="1.05" height="46.75" fill="url(#gB)" opacity="0.88"/>
<rect x="394.2" y="332" width="1.05" height="56.56" fill="url(#gB)" opacity="0.95"/>
<rect x="395.2" y="332" width="1.05" height="53.9" fill="url(#gB)" opacity="0.53"/>
<rect x="397.2" y="342.15" width="1.05" height="52.11" fill="url(#gK)" opacity="0.73"/>
<rect x="398.2" y="340.6" width="1.05" height="33.91" fill="url(#gK)" opacity="0.44"/>
<rect x="399.2" y="332" width="1.05" height="52.19" fill="url(#gB)" opacity="0.93"/>
<rect x="400.2" y="332" width="1.05" height="59.15" fill="url(#gc)" opacity="0.62"/>
<rect x="402.2" y="332" width="1.05" height="63.84" fill="url(#gB)" opacity="0.5"/>
<rect x="404.2" y="338.31" width="1.05" height="42.93" fill="url(#gK)" opacity="0.46"/>
<rect x="406.2" y="332" width="1.05" height="48.08" fill="url(#gB)" opacity="0.49"/>
<rect x="407.2" y="332" width="1.05" height="52.15" fill="url(#gB)" opacity="0.81"/>
<rect x="408.2" y="332" width="1.05" height="57.86" fill="url(#gB)" opacity="0.5"/>
<rect x="409.2" y="332" width="1.05" height="52.01" fill="url(#gB)" opacity="0.93"/>
<rect x="411.2" y="332" width="1.05" height="30.42" fill="url(#gc)" opacity="0.65"/>
<rect x="413.2" y="332" width="1.05" height="54.67" fill="url(#gB)" opacity="0.68"/>
<rect x="414.2" y="341.59" width="1.05" height="57.72" fill="url(#gK)" opacity="0.48"/>
<rect x="415.2" y="332" width="1.05" height="39.87" fill="url(#gc)" opacity="0.65"/>
<rect x="416.2" y="332" width="1.05" height="47.75" fill="url(#gB)" opacity="0.62"/>
<rect x="417.2" y="332" width="1.05" height="57.33" fill="url(#gB)" opacity="0.58"/>
<rect x="418.2" y="335.95" width="1.05" height="49.14" fill="url(#gK)" opacity="0.78"/>
<rect x="419.2" y="332" width="1.05" height="54.61" fill="url(#gc)" opacity="0.63"/>
<rect x="421.2" y="333.13" width="1.05" height="29.65" fill="url(#gK)" opacity="0.67"/>
<rect x="423.2" y="342.04" width="1.05" height="38.28" fill="url(#gK)" opacity="0.64"/>
<rect x="424.2" y="333.89" width="1.05" height="32.48" fill="url(#gK)" opacity="0.45"/>
<rect x="425.2" y="332" width="1.05" height="41.89" fill="url(#gB)" opacity="0.91"/>
<rect x="426.2" y="332" width="1.05" height="53.3" fill="url(#gB)" opacity="0.77"/>
<rect x="429.2" y="332" width="1.05" height="48.62" fill="url(#gB)" opacity="0.66"/>
<rect x="430.2" y="340.4" width="1.05" height="38.22" fill="url(#gK)" opacity="0.79"/>
<rect x="432.2" y="332" width="1.05" height="50.69" fill="url(#gc)" opacity="0.51"/>
<rect x="433.2" y="332" width="1.05" height="48.9" fill="url(#gB)" opacity="0.78"/>
<rect x="434.2" y="338.11" width="1.05" height="37.46" fill="url(#gK)" opacity="0.72"/>
<rect x="436.2" y="332" width="1.05" height="35.38" fill="url(#gc)" opacity="0.81"/>
<rect x="438.2" y="332" width="1.05" height="49.17" fill="url(#gB)" opacity="0.7"/>
<rect x="439.2" y="343.84" width="1.05" height="48.54" fill="url(#gK)" opacity="0.61"/>
<rect x="442.2" y="339.53" width="1.05" height="56.18" fill="url(#gK)" opacity="0.48"/>
<rect x="443.2" y="338.92" width="1.05" height="33.07" fill="url(#gK)" opacity="0.68"/>
<rect x="444.2" y="332" width="1.05" height="64.16" fill="url(#gB)" opacity="0.63"/>
<rect x="445.2" y="332" width="1.05" height="43.22" fill="url(#gB)" opacity="0.94"/>
<rect x="446.2" y="338.52" width="1.05" height="54.83" fill="url(#gK)" opacity="0.62"/>
<rect x="447.2" y="332" width="1.05" height="38.99" fill="url(#gc)" opacity="0.86"/>
<rect x="450.2" y="332" width="1.05" height="34.17" fill="url(#gc)" opacity="0.83"/>
<rect x="451.2" y="332" width="1.05" height="63.32" fill="url(#gB)" opacity="0.57"/>
<rect x="452.2" y="332" width="1.05" height="58.25" fill="url(#gc)" opacity="0.57"/>
<rect x="453.2" y="332" width="1.05" height="41.98" fill="url(#gB)" opacity="0.47"/>
<rect x="454.2" y="343.27" width="1.05" height="57.57" fill="url(#gK)" opacity="0.66"/>
<rect x="455.2" y="332" width="1.05" height="57.45" fill="url(#gB)" opacity="0.82"/>
<rect x="456.2" y="332" width="1.05" height="55.39" fill="url(#gB)" opacity="0.85"/>
<rect x="457.2" y="337.62" width="1.05" height="31.58" fill="url(#gK)" opacity="0.46"/>
<rect x="458.2" y="332" width="1.05" height="54.81" fill="url(#gB)" opacity="0.54"/>
<rect x="459.2" y="332" width="1.05" height="46.86" fill="url(#gB)" opacity="0.73"/>
<rect x="460.2" y="332" width="1.05" height="56.68" fill="url(#gB)" opacity="0.47"/>
<rect x="461.2" y="332" width="1.05" height="34.92" fill="url(#gc)" opacity="0.88"/>
<rect x="462.2" y="332" width="1.05" height="45.98" fill="url(#gc)" opacity="0.66"/>
<rect x="463.2" y="332" width="1.05" height="53.44" fill="url(#gc)" opacity="0.8"/>
<rect x="465.2" y="332" width="1.05" height="65.86" fill="url(#gB)" opacity="0.87"/>
<rect x="467.2" y="332" width="1.05" height="51.28" fill="url(#gB)" opacity="0.73"/>
<rect x="469.2" y="332" width="1.05" height="53.65" fill="url(#gB)" opacity="0.67"/>
<rect x="471.2" y="332" width="1.05" height="41.42" fill="url(#gB)" opacity="0.81"/>
<rect x="474.2" y="332" width="1.05" height="55.56" fill="url(#gc)" opacity="0.62"/>
<rect x="475.2" y="332" width="1.05" height="32.37" fill="url(#gc)" opacity="0.55"/>
<rect x="476.2" y="332" width="1.05" height="53.07" fill="url(#gB)" opacity="0.65"/>
<rect x="477.2" y="338.31" width="1.05" height="47.93" fill="url(#gK)" opacity="0.5"/>
<rect x="478.2" y="332" width="1.05" height="50.28" fill="url(#gB)" opacity="0.57"/>
<rect x="479.2" y="343.6" width="1.05" height="55.07" fill="url(#gK)" opacity="0.67"/>
<rect x="481.2" y="332" width="1.05" height="60.94" fill="url(#gB)" opacity="0.56"/>
<rect x="483.2" y="332" width="1.05" height="60.72" fill="url(#gc)" opacity="0.54"/>
<rect x="485.2" y="343.41" width="1.05" height="42.74" fill="url(#gK)" opacity="0.4"/>
<rect x="486.2" y="332" width="1.05" height="47.78" fill="url(#gB)" opacity="0.61"/>
<rect x="487.2" y="341.79" width="1.05" height="54.54" fill="url(#gK)" opacity="0.56"/>
<rect x="488.2" y="332" width="1.05" height="55.22" fill="url(#gB)" opacity="0.47"/>
<rect x="489.2" y="335.69" width="1.05" height="54.65" fill="url(#gK)" opacity="0.6"/>
<rect x="492.2" y="332" width="1.05" height="45.37" fill="url(#gB)" opacity="0.6"/>
<rect x="495.2" y="336.25" width="1.05" height="52.65" fill="url(#gK)" opacity="0.59"/>
<rect x="496.2" y="343.94" width="1.05" height="54.03" fill="url(#gK)" opacity="0.48"/>
<rect x="497.2" y="332" width="1.05" height="36.51" fill="url(#gc)" opacity="0.85"/>
<rect x="498.2" y="340.71" width="1.05" height="28.5" fill="url(#gK)" opacity="0.53"/>
<rect x="502.2" y="343.25" width="1.05" height="47.97" fill="url(#gK)" opacity="0.58"/>
<rect x="503.2" y="335.69" width="1.05" height="32.37" fill="url(#gK)" opacity="0.68"/>
<rect x="504.2" y="334.83" width="1.05" height="30.97" fill="url(#gK)" opacity="0.67"/>
<rect x="506.2" y="332" width="1.05" height="57.21" fill="url(#gB)" opacity="0.89"/>
<rect x="507.2" y="332" width="1.05" height="37.79" fill="url(#gc)" opacity="0.62"/>
<rect x="509.2" y="332" width="1.05" height="39.41" fill="url(#gc)" opacity="0.76"/>
<rect x="510.2" y="337.28" width="1.05" height="57.44" fill="url(#gK)" opacity="0.61"/>
<rect x="511.2" y="332" width="1.05" height="41.18" fill="url(#gB)" opacity="0.75"/>
<rect x="512.2" y="332" width="1.05" height="46.52" fill="url(#gB)" opacity="0.85"/>
<rect x="513.2" y="341.07" width="1.05" height="34.41" fill="url(#gK)" opacity="0.5"/>
<rect x="514.2" y="332" width="1.05" height="54.25" fill="url(#gB)" opacity="0.54"/>
<rect x="517.2" y="341.01" width="1.05" height="40.23" fill="url(#gK)" opacity="0.55"/>
<rect x="519.2" y="332" width="1.05" height="44.68" fill="url(#gB)" opacity="0.73"/>
<rect x="520.2" y="332" width="1.05" height="42.23" fill="url(#gc)" opacity="0.76"/>
<rect x="522.2" y="332" width="1.05" height="53.15" fill="url(#gB)" opacity="0.87"/>
<rect x="523.2" y="332" width="1.05" height="47.7" fill="url(#gc)" opacity="0.88"/>
<rect x="524.2" y="333.98" width="1.05" height="50.73" fill="url(#gK)" opacity="0.64"/>
<rect x="525.2" y="332" width="1.05" height="51.45" fill="url(#gB)" opacity="0.84"/>
<rect x="528.2" y="332" width="1.05" height="52.72" fill="url(#gB)" opacity="0.56"/>
<rect x="529.2" y="332" width="1.05" height="46.96" fill="url(#gc)" opacity="0.51"/>
<rect x="530.2" y="332" width="1.05" height="54.3" fill="url(#gc)" opacity="0.73"/>
<rect x="532.2" y="332.21" width="1.05" height="30.01" fill="url(#gK)" opacity="0.6"/>
<rect x="533.2" y="332" width="1.05" height="51.48" fill="url(#gB)" opacity="0.58"/>
<rect x="535.2" y="338.83" width="1.05" height="54.94" fill="url(#gK)" opacity="0.62"/>
<rect x="537.2" y="332" width="1.05" height="43.8" fill="url(#gB)" opacity="0.61"/>
<rect x="538.2" y="339.45" width="1.05" height="35.37" fill="url(#gK)" opacity="0.61"/>
<rect x="539.2" y="332" width="1.05" height="55.31" fill="url(#gB)" opacity="0.49"/>
<rect x="541.2" y="333.92" width="1.05" height="33.41" fill="url(#gK)" opacity="0.68"/>
<rect x="544.2" y="336.37" width="1.05" height="38.55" fill="url(#gK)" opacity="0.49"/>
<rect x="546.2" y="341.14" width="1.05" height="41.15" fill="url(#gK)" opacity="0.79"/>
<rect x="547.2" y="340.94" width="1.05" height="40.03" fill="url(#gK)" opacity="0.42"/>
<rect x="548.2" y="332" width="1.05" height="63.14" fill="url(#gB)" opacity="0.52"/>
<rect x="549.2" y="332" width="1.05" height="47.75" fill="url(#gB)" opacity="0.66"/>
<rect x="550.2" y="343.95" width="1.05" height="26.13" fill="url(#gK)" opacity="0.71"/>
<rect x="552.2" y="332" width="1.05" height="46.58" fill="url(#gB)" opacity="0.73"/>
<rect x="553.2" y="332" width="1.05" height="52" fill="url(#gB)" opacity="0.92"/>
<rect x="554.2" y="332" width="1.05" height="48.76" fill="url(#gB)" opacity="0.94"/>
<rect x="555.2" y="332" width="1.05" height="31.35" fill="url(#gc)" opacity="0.66"/>
<rect x="556.2" y="332" width="1.05" height="31.99" fill="url(#gc)" opacity="0.64"/>
<rect x="557.2" y="332" width="1.05" height="59.39" fill="url(#gc)" opacity="0.74"/>
<rect x="559.2" y="332" width="1.05" height="50.22" fill="url(#gB)" opacity="0.87"/>
<rect x="560.2" y="332" width="1.05" height="60.31" fill="url(#gB)" opacity="0.56"/>
<rect x="561.2" y="332" width="1.05" height="44.77" fill="url(#gB)" opacity="0.72"/>
<rect x="562.2" y="334.57" width="1.05" height="31.72" fill="url(#gK)" opacity="0.59"/>
<rect x="563.2" y="332" width="1.05" height="51.62" fill="url(#gB)" opacity="0.95"/>
<rect x="564.2" y="332" width="1.05" height="59.33" fill="url(#gc)" opacity="0.58"/>
<rect x="565.2" y="332" width="1.05" height="41.89" fill="url(#gB)" opacity="0.8"/>
<rect x="566.2" y="332" width="1.05" height="47.14" fill="url(#gB)" opacity="0.46"/>
<rect x="567.2" y="336.72" width="1.05" height="33.66" fill="url(#gK)" opacity="0.77"/>
<rect x="569.2" y="332" width="1.05" height="49.39" fill="url(#gB)" opacity="0.53"/>
<rect x="571.2" y="332" width="1.05" height="59.91" fill="url(#gB)" opacity="0.81"/>
<rect x="573.2" y="336.61" width="1.05" height="35.63" fill="url(#gK)" opacity="0.43"/>
<rect x="575.2" y="332" width="1.05" height="60.04" fill="url(#gB)" opacity="0.71"/>
<rect x="576.2" y="334.86" width="1.05" height="38" fill="url(#gK)" opacity="0.42"/>
<rect x="577.2" y="332.38" width="1.05" height="44.65" fill="url(#gK)" opacity="0.52"/>
<rect x="578.2" y="332" width="1.05" height="54.14" fill="url(#gB)" opacity="0.52"/>
<rect x="580.2" y="332" width="1.05" height="58.86" fill="url(#gB)" opacity="0.78"/>
<rect x="581.2" y="335.36" width="1.05" height="31.76" fill="url(#gK)" opacity="0.69"/>
<rect x="582.2" y="332" width="1.05" height="50.05" fill="url(#gB)" opacity="0.88"/>
<rect x="583.2" y="332" width="1.05" height="47.59" fill="url(#gB)" opacity="0.62"/>
<rect x="584.2" y="332.29" width="1.05" height="26.34" fill="url(#gK)" opacity="0.65"/>
<rect x="585.2" y="332" width="1.05" height="57.5" fill="url(#gc)" opacity="0.89"/>
<rect x="586.2" y="332" width="1.05" height="57.43" fill="url(#gB)" opacity="0.91"/>
<rect x="587.2" y="340" width="1.05" height="47.74" fill="url(#gK)" opacity="0.78"/>
<rect x="589.2" y="332" width="1.05" height="56.45" fill="url(#gB)" opacity="0.49"/>
<rect x="590.2" y="332" width="1.05" height="50.2" fill="url(#gB)" opacity="0.48"/>
<rect x="591.2" y="332" width="1.05" height="48.53" fill="url(#gB)" opacity="0.7"/>
<rect x="592.2" y="332" width="1.05" height="44.12" fill="url(#gB)" opacity="0.65"/>
<rect x="593.2" y="332" width="1.05" height="44.33" fill="url(#gB)" opacity="0.78"/>
<rect x="594.2" y="332" width="1.05" height="42.42" fill="url(#gB)" opacity="0.62"/>
<rect x="595.2" y="332" width="1.05" height="43.92" fill="url(#gB)" opacity="0.74"/>
<rect x="597.2" y="332" width="1.05" height="53.81" fill="url(#gc)" opacity="0.51"/>
<rect x="598.2" y="332" width="1.05" height="49.47" fill="url(#gB)" opacity="0.48"/>
<rect x="599.2" y="332" width="1.05" height="41.42" fill="url(#gB)" opacity="0.7"/>
<rect x="600.2" y="332" width="1.05" height="45.94" fill="url(#gc)" opacity="0.63"/>
<rect x="601.2" y="332" width="1.05" height="40.61" fill="url(#gB)" opacity="0.62"/>
<rect x="603.2" y="332" width="1.05" height="38.9" fill="url(#gc)" opacity="0.77"/>
<rect x="604.2" y="339.38" width="1.05" height="40.49" fill="url(#gK)" opacity="0.78"/>
<rect x="605.2" y="332" width="1.05" height="54.98" fill="url(#gB)" opacity="0.92"/>
<rect x="607.2" y="332" width="1.05" height="51.11" fill="url(#gc)" opacity="0.66"/>
<rect x="608.2" y="332" width="1.05" height="47.18" fill="url(#gB)" opacity="0.86"/>
<rect x="610.2" y="332" width="1.05" height="63.65" fill="url(#gB)" opacity="0.47"/>
<rect x="611.2" y="335.7" width="1.05" height="41.73" fill="url(#gK)" opacity="0.54"/>
<rect x="613.2" y="334.74" width="1.05" height="31.35" fill="url(#gK)" opacity="0.67"/>
<rect x="614.2" y="332" width="1.05" height="40.02" fill="url(#gB)" opacity="0.72"/>
<rect x="615.2" y="332" width="1.05" height="46.22" fill="url(#gB)" opacity="0.7"/>
<rect x="616.2" y="332" width="1.05" height="48.64" fill="url(#gc)" opacity="0.75"/>
<rect x="617.2" y="332" width="1.05" height="58.26" fill="url(#gc)" opacity="0.89"/>
<rect x="618.2" y="332" width="1.05" height="49.01" fill="url(#gB)" opacity="0.89"/>
<rect x="619.2" y="332" width="1.05" height="58.61" fill="url(#gB)" opacity="0.8"/>
<rect x="620.2" y="332" width="1.05" height="62.77" fill="url(#gc)" opacity="0.83"/>
<rect x="621.2" y="337.89" width="1.05" height="45.51" fill="url(#gK)" opacity="0.63"/>
<rect x="622.2" y="332" width="1.05" height="47.43" fill="url(#gB)" opacity="0.82"/>
<rect x="623.2" y="332" width="1.05" height="46.16" fill="url(#gB)" opacity="0.57"/>
<rect x="624.2" y="332" width="1.05" height="44.62" fill="url(#gB)" opacity="0.71"/>
<rect x="625.2" y="332.82" width="1.05" height="27.09" fill="url(#gK)" opacity="0.44"/>
<rect x="627.2" y="341.27" width="1.05" height="39.9" fill="url(#gK)" opacity="0.59"/>
<rect x="628.2" y="342.44" width="1.05" height="53.59" fill="url(#gK)" opacity="0.42"/>
<rect x="629.2" y="332" width="1.05" height="53.19" fill="url(#gB)" opacity="0.85"/>
<rect x="630.2" y="332" width="1.05" height="58.61" fill="url(#gB)" opacity="0.58"/>
<rect x="632.2" y="332" width="1.05" height="48.68" fill="url(#gB)" opacity="0.83"/>
<rect x="635.2" y="332" width="1.05" height="44.3" fill="url(#gc)" opacity="0.78"/>
<rect x="636.2" y="332" width="1.05" height="58.25" fill="url(#gc)" opacity="0.82"/>
<rect x="637.2" y="340.03" width="1.05" height="37.44" fill="url(#gK)" opacity="0.49"/>
<rect x="638.2" y="339.03" width="1.05" height="25.45" fill="url(#gK)" opacity="0.78"/>
<rect x="640.2" y="337.03" width="1.05" height="47.69" fill="url(#gK)" opacity="0.65"/>
<rect x="641.2" y="332" width="1.05" height="64.27" fill="url(#gB)" opacity="0.94"/>
<rect x="642.2" y="333.42" width="1.05" height="48.54" fill="url(#gK)" opacity="0.42"/>
<rect x="643.2" y="332" width="1.05" height="59.01" fill="url(#gB)" opacity="0.95"/>
<rect x="644.2" y="332.32" width="1.05" height="35.89" fill="url(#gK)" opacity="0.62"/>
<rect x="645.2" y="332" width="1.05" height="49.71" fill="url(#gB)" opacity="0.6"/>
<rect x="648.2" y="332" width="1.05" height="50.18" fill="url(#gB)" opacity="0.76"/>
<rect x="651.2" y="332" width="1.05" height="58.05" fill="url(#gB)" opacity="0.72"/>
<rect x="653.2" y="333.29" width="1.05" height="30.78" fill="url(#gK)" opacity="0.77"/>
<rect x="654.2" y="332" width="1.05" height="52.69" fill="url(#gB)" opacity="0.51"/>
<rect x="655.2" y="332" width="1.05" height="40.5" fill="url(#gB)" opacity="0.73"/>
<rect x="656.2" y="335.29" width="1.05" height="45.63" fill="url(#gK)" opacity="0.49"/>
<rect x="657.2" y="332" width="1.05" height="49.51" fill="url(#gB)" opacity="0.58"/>
<rect x="658.2" y="342.71" width="1.05" height="27.12" fill="url(#gK)" opacity="0.52"/>
<rect x="659.2" y="337.8" width="1.05" height="31.02" fill="url(#gK)" opacity="0.8"/>
<rect x="660.2" y="337.81" width="1.05" height="53.62" fill="url(#gK)" opacity="0.57"/>
<rect x="662.2" y="332" width="1.05" height="41.5" fill="url(#gB)" opacity="0.73"/>
<rect x="663.2" y="332" width="1.05" height="51.18" fill="url(#gc)" opacity="0.61"/>
<rect x="667.2" y="332" width="1.05" height="61.68" fill="url(#gB)" opacity="0.81"/>
<rect x="668.2" y="334.03" width="1.05" height="25.88" fill="url(#gK)" opacity="0.45"/>
<rect x="669.2" y="341.04" width="1.05" height="36.84" fill="url(#gK)" opacity="0.52"/>
<rect x="670.2" y="332" width="1.05" height="40.27" fill="url(#gB)" opacity="0.56"/>
<rect x="672.2" y="341.72" width="1.05" height="42.4" fill="url(#gK)" opacity="0.72"/>
<rect x="674.2" y="332" width="1.05" height="60.88" fill="url(#gB)" opacity="0.86"/>
<rect x="677.2" y="336.83" width="1.05" height="56.36" fill="url(#gK)" opacity="0.68"/>
<rect x="678.2" y="332" width="1.05" height="63.65" fill="url(#gB)" opacity="0.46"/>
<rect x="679.2" y="332" width="1.05" height="37.73" fill="url(#gc)" opacity="0.66"/>
<rect x="680.2" y="332" width="1.05" height="57.08" fill="url(#gB)" opacity="0.86"/>
<rect x="681.2" y="332" width="1.05" height="56.59" fill="url(#gB)" opacity="0.63"/>
<rect x="682.2" y="332" width="1.05" height="63.53" fill="url(#gB)" opacity="0.61"/>
<rect x="683.2" y="340.9" width="1.05" height="36.05" fill="url(#gK)" opacity="0.48"/>
<rect x="685.2" y="332" width="1.05" height="57.69" fill="url(#gB)" opacity="0.54"/>
<rect x="686.2" y="336.2" width="1.05" height="29.72" fill="url(#gK)" opacity="0.57"/>
<rect x="687.2" y="336.84" width="1.05" height="41.58" fill="url(#gK)" opacity="0.53"/>
<rect x="688.2" y="332" width="1.05" height="64.76" fill="url(#gB)" opacity="0.55"/>
<rect x="690.2" y="332" width="1.05" height="59.61" fill="url(#gB)" opacity="0.5"/>
<rect x="79.2" y="332" width="613.6" height="66" fill="url(#nk)" opacity=".5"/>
<polygon points="77.61,332 83.11,332 81.56,393.72 79.16,393.72" fill="url(#gH)" opacity=".6"/>
<polygon points="99.89,332 106.01,332 104.15,409.9 101.75,409.9" fill="url(#gH)" opacity=".6"/>
<polygon points="135.61,332 141.73,332 139.87,393.72 137.47,393.72" fill="url(#gH)" opacity=".6"/>
<polygon points="176.71,332 182.84,332 180.97,390.93 178.57,390.93" fill="url(#gH)" opacity=".6"/>
<polygon points="180.2,332 186.95,332 184.78,388.14 182.38,388.14" fill="url(#gH)" opacity=".6"/>
<polygon points="275.15,332 281.9,332 279.72,404.9 277.32,404.9" fill="url(#gH)" opacity=".6"/>
<polygon points="290.14,332 298.14,332 295.34,402.11 292.94,402.11" fill="url(#gH)" opacity=".6"/>
<polygon points="311.12,332 317.87,332 315.7,393.72 313.3,393.72" fill="url(#gH)" opacity=".6"/>
<polygon points="322.08,332 331.33,332 327.91,396.52 325.51,396.52" fill="url(#gH)" opacity=".6"/>
<polygon points="328.62,332 336.62,332 333.82,390.93 331.42,390.93" fill="url(#gH)" opacity=".6"/>
<polygon points="358.1,332 363.6,332 362.05,409.9 359.65,409.9" fill="url(#gH)" opacity=".6"/>
<polygon points="367.01,332 374.39,332 371.9,396.52 369.5,396.52" fill="url(#gH)" opacity=".6"/>
<polygon points="378.09,332 384.84,332 382.67,409.43 380.27,409.43" fill="url(#gH)" opacity=".6"/>
<polygon points="401.7,332 407.2,332 405.65,393.72 403.25,393.72" fill="url(#gH)" opacity=".6"/>
<polygon points="414.78,332 420.9,332 419.04,390.93 416.64,390.93" fill="url(#gH)" opacity=".6"/>
<polygon points="426.68,332 433.43,332 431.25,396.52 428.85,396.52" fill="url(#gH)" opacity=".6"/>
<polygon points="444.64,332 450.14,332 448.59,400.71 446.19,400.71" fill="url(#gH)" opacity=".6"/>
<polygon points="450.27,332 457.64,332 455.15,399.31 452.75,399.31" fill="url(#gH)" opacity=".6"/>
<polygon points="460.13,332 465.63,332 464.08,396.52 461.68,396.52" fill="url(#gH)" opacity=".6"/>
<polygon points="477.24,332 483.99,332 481.81,402.11 479.41,402.11" fill="url(#gH)" opacity=".6"/>
<polygon points="519.52,332 526.27,332 524.09,407.7 521.69,407.7" fill="url(#gH)" opacity=".6"/>
<polygon points="526.71,332 532.21,332 530.66,404.9 528.26,404.9" fill="url(#gH)" opacity=".6"/>
<polygon points="545.75,332 551.25,332 549.7,383.94 547.3,383.94" fill="url(#gH)" opacity=".6"/>
<polygon points="572.62,332 578.74,332 576.88,407.7 574.48,407.7" fill="url(#gH)" opacity=".6"/>
<polygon points="577.92,332 583.42,332 581.87,390.93 579.47,390.93" fill="url(#gH)" opacity=".6"/>
<polygon points="595.94,332 602.69,332 600.51,396.52 598.11,396.52" fill="url(#gH)" opacity=".6"/>
<polygon points="608.38,332 613.88,332 612.33,402.11 609.93,402.11" fill="url(#gH)" opacity=".6"/>
<polygon points="617.57,332 623.07,332 621.52,383.94 619.12,383.94" fill="url(#gH)" opacity=".6"/>
<polygon points="626.77,332 632.27,332 630.72,393.72 628.32,393.72" fill="url(#gH)" opacity=".6"/>
<polygon points="646.46,332 651.96,332 650.41,390.93 648.01,390.93" fill="url(#gH)" opacity=".6"/>
<polygon points="656,332 662.13,332 660.26,409.9 657.86,409.9" fill="url(#gH)" opacity=".6"/>
<polygon points="669.48,332 676.23,332 674.05,407.7 671.65,407.7" fill="url(#gH)" opacity=".6"/>
<polygon points="674.73,332 681.48,332 679.31,409.9 676.91,409.9" fill="url(#gH)" opacity=".6"/>
<polygon points="679.95,332 685.45,332 683.9,400.71 681.5,400.71" fill="url(#gH)" opacity=".6"/>
<polygon points="684.55,332 690.05,332 688.5,388.14 686.1,388.14" fill="url(#gH)" opacity=".6"/>
<polygon points="79.26,332 81.46,332 80.96,396.97 79.76,396.97" fill="url(#gG)"/>
<rect x="87.93" y="332" width="1.15" height="82" fill="url(#gC)"/>
<rect x="93.37" y="332" width="1.3" height="82" fill="url(#gY)"/>
<polygon points="101.58,332 104.33,332 103.55,414 102.35,414" fill="url(#gG)"/>
<rect x="107.19" y="332" width="1.5" height="47.32" fill="url(#gC)"/>
<rect x="116.82" y="332" width="1.15" height="79.68" fill="url(#gG)"/>
<rect x="121.34" y="332" width="1.3" height="72.33" fill="url(#gG)"/>
<rect x="125.94" y="332" width="1.3" height="76.74" fill="url(#gG)"/>
<rect x="133.24" y="332" width="1.15" height="62.03" fill="url(#gC)"/>
<polygon points="137.29,332 140.04,332 139.27,396.97 138.07,396.97" fill="url(#gG)"/>
<rect x="144.98" y="332" width="1.3" height="72.33" fill="url(#gY)"/>
<rect x="148.34" y="332" width="1.15" height="47.32" fill="url(#gC)"/>
<rect x="154.73" y="332" width="1.5" height="62.03" fill="url(#gC)"/>
<rect x="163.26" y="332" width="1.5" height="62.03" fill="url(#gC)"/>
<rect x="170.92" y="332" width="1.15" height="44.38" fill="url(#gG)"/>
<rect x="173.03" y="332" width="1.15" height="39.97" fill="url(#gC)"/>
<polygon points="178.4,332 181.15,332 180.37,394.03 179.17,394.03" fill="url(#gC)"/>
<polygon points="181.93,332 185.23,332 184.18,391.09 182.98,391.09" fill="url(#gG)"/>
<rect x="187.33" y="332" width="1.15" height="67.91" fill="url(#gC)"/>
<rect x="189.3" y="332" width="1.15" height="73.8" fill="url(#gC)"/>
<rect x="193.83" y="332" width="1.3" height="81.5" fill="url(#gY)"/>
<rect x="196.92" y="332" width="1.15" height="76.74" fill="url(#gG)"/>
<rect x="199.15" y="332" width="1.15" height="82" fill="url(#gG)"/>
<rect x="201.12" y="332" width="1.15" height="62.03" fill="url(#gC)"/>
<rect x="202.76" y="332" width="1.3" height="81.5" fill="url(#gY)"/>
<rect x="211.82" y="332" width="1.3" height="81.5" fill="url(#gY)"/>
<rect x="216.88" y="332" width="1.15" height="32.62" fill="url(#gC)"/>
<rect x="224.1" y="332" width="1.15" height="62.03" fill="url(#gC)"/>
<rect x="225.9" y="332" width="1.5" height="79.68" fill="url(#gG)"/>
<rect x="228.44" y="332" width="1.15" height="62.03" fill="url(#gG)"/>
<rect x="233.95" y="332" width="1.15" height="32.62" fill="url(#gC)"/>
<rect x="236.58" y="332" width="1.15" height="47.32" fill="url(#gC)"/>
<rect x="242.41" y="332" width="1.3" height="79.68" fill="url(#gG)"/>
<rect x="249.64" y="332" width="1.3" height="73.8" fill="url(#gG)"/>
<rect x="252.99" y="332" width="1.15" height="51.74" fill="url(#gC)"/>
<rect x="256.93" y="332" width="1.15" height="67.91" fill="url(#gG)"/>
<rect x="261.79" y="332" width="1.15" height="81.5" fill="url(#gY)"/>
<rect x="265.47" y="332" width="1.15" height="47.32" fill="url(#gC)"/>
<rect x="269.07" y="332" width="1.3" height="62.03" fill="url(#gG)"/>
<rect x="273.35" y="332" width="1.15" height="54.68" fill="url(#gC)"/>
<polygon points="276.87,332 280.17,332 279.12,408.74 277.92,408.74" fill="url(#gG)"/>
<rect x="281.88" y="332" width="1.15" height="39.97" fill="url(#gC)"/>
<rect x="286.74" y="332" width="1.15" height="62.03" fill="url(#gC)"/>
<polygon points="291.94,332 296.34,332 294.74,405.8 293.54,405.8" fill="url(#gG)"/>
<rect x="303.08" y="332" width="1.3" height="79.68" fill="url(#gG)"/>
<rect x="305.78" y="332" width="1.15" height="47.32" fill="url(#gC)"/>
<polygon points="312.85,332 316.15,332 315.1,396.97 313.9,396.97" fill="url(#gG)"/>
<rect x="316.94" y="332" width="1.15" height="82" fill="url(#gG)"/>
<rect x="319.83" y="332" width="1.15" height="62.03" fill="url(#gC)"/>
<polygon points="323.96,332 329.46,332 327.31,399.91 326.11,399.91" fill="url(#gG)"/>
<rect x="327.71" y="332" width="1.15" height="81.5" fill="url(#gG)"/>
<polygon points="330.42,332 334.82,332 333.22,394.03 332.02,394.03" fill="url(#gG)"/>
<rect x="337.95" y="332" width="1.15" height="73.8" fill="url(#gY)"/>
<rect x="340.5" y="332" width="1.3" height="81.5" fill="url(#gY)"/>
<rect x="346.41" y="332" width="1.3" height="79.68" fill="url(#gG)"/>
<rect x="350.43" y="332" width="1.15" height="51.74" fill="url(#gC)"/>
<rect x="356.34" y="332" width="1.15" height="59.09" fill="url(#gC)"/>
<polygon points="359.75,332 361.95,332 361.45,414 360.25,414" fill="url(#gG)"/>
<rect x="364.22" y="332" width="1.15" height="62.03" fill="url(#gC)"/>
<polygon points="368.78,332 372.63,332 371.3,399.91 370.1,399.91" fill="url(#gG)"/>
<rect x="376.04" y="332" width="1.15" height="47.32" fill="url(#gG)"/>
<polygon points="379.82,332 383.12,332 382.07,413.5 380.87,413.5" fill="url(#gY)"/>
<rect x="387.2" y="332" width="1.15" height="47.32" fill="url(#gC)"/>
<rect x="393.29" y="332" width="1.3" height="82" fill="url(#gY)"/>
<rect x="397.96" y="332" width="1.15" height="54.68" fill="url(#gC)"/>
<rect x="399.93" y="332" width="1.15" height="47.32" fill="url(#gC)"/>
<polygon points="403.35,332 405.55,332 405.05,396.97 403.85,396.97" fill="url(#gG)"/>
<rect x="408.39" y="332" width="1.3" height="82" fill="url(#gY)"/>
<rect x="413.72" y="332" width="1.15" height="54.68" fill="url(#gC)"/>
<polygon points="416.46,332 419.21,332 418.44,394.03 417.24,394.03" fill="url(#gG)"/>
<rect x="420.94" y="332" width="1.15" height="39.97" fill="url(#gC)"/>
<rect x="428.82" y="332" width="1.15" height="81.5" fill="url(#gG)"/>
<polygon points="428.4,332 431.7,332 430.65,399.91 429.45,399.91" fill="url(#gG)"/>
<rect x="434.73" y="332" width="1.15" height="62.03" fill="url(#gC)"/>
<rect x="439.98" y="332" width="1.15" height="62.03" fill="url(#gC)"/>
<rect x="442.61" y="332" width="1.15" height="47.32" fill="url(#gY)"/>
<polygon points="446.29,332 448.49,332 447.99,404.33 446.79,404.33" fill="url(#gG)"/>
<polygon points="452.03,332 455.88,332 454.55,402.86 453.35,402.86" fill="url(#gG)"/>
<rect x="459.02" y="332" width="1.15" height="39.97" fill="url(#gC)"/>
<polygon points="461.78,332 463.98,332 463.48,399.91 462.28,399.91" fill="url(#gG)"/>
<rect x="468.7" y="332" width="1.5" height="67.91" fill="url(#gC)"/>
<rect x="472.81" y="332" width="1.15" height="64.97" fill="url(#gG)"/>
<rect x="474.78" y="332" width="1.15" height="47.32" fill="url(#gC)"/>
<polygon points="478.96,332 482.26,332 481.21,405.8 480.01,405.8" fill="url(#gG)"/>
<rect x="486.6" y="332" width="1.15" height="32.62" fill="url(#gC)"/>
<rect x="491.2" y="332" width="1.15" height="39.97" fill="url(#gC)"/>
<rect x="497.95" y="332" width="1.3" height="81.5" fill="url(#gY)"/>
<rect x="502.62" y="332" width="1.15" height="62.03" fill="url(#gC)"/>
<rect x="505.17" y="332" width="1.3" height="76.74" fill="url(#gG)"/>
<rect x="509.18" y="332" width="1.15" height="47.32" fill="url(#gC)"/>
<rect x="513.05" y="332" width="1.3" height="82" fill="url(#gG)"/>
<rect x="518.3" y="332" width="1.3" height="79.68" fill="url(#gG)"/>
<polygon points="521.24,332 524.54,332 523.49,411.68 522.29,411.68" fill="url(#gG)"/>
<polygon points="528.36,332 530.56,332 530.06,408.74 528.86,408.74" fill="url(#gG)"/>
<rect x="534.79" y="332" width="1.15" height="54.68" fill="url(#gC)"/>
<rect x="543.98" y="332" width="1.15" height="82" fill="url(#gG)"/>
<polygon points="547.4,332 549.6,332 549.1,386.68 547.9,386.68" fill="url(#gG)"/>
<rect x="552.52" y="332" width="1.15" height="62.03" fill="url(#gC)"/>
<rect x="557.7" y="332" width="1.3" height="76.74" fill="url(#gG)"/>
<rect x="559.74" y="332" width="1.15" height="67.91" fill="url(#gG)"/>
<rect x="564.99" y="332" width="1.15" height="47.32" fill="url(#gC)"/>
<rect x="568.86" y="332" width="1.3" height="81.5" fill="url(#gY)"/>
<rect x="570.9" y="332" width="1.15" height="81.5" fill="url(#gG)"/>
<polygon points="574.31,332 577.06,332 576.28,411.68 575.08,411.68" fill="url(#gG)"/>
<polygon points="579.57,332 581.77,332 581.27,394.03 580.07,394.03" fill="url(#gC)"/>
<rect x="583.96" y="332" width="1.3" height="47.32" fill="url(#gG)"/>
<rect x="588.63" y="332" width="1.15" height="54.68" fill="url(#gC)"/>
<rect x="594.54" y="332" width="1.15" height="82" fill="url(#gG)"/>
<polygon points="597.66,332 600.96,332 599.91,399.91 598.71,399.91" fill="url(#gG)"/>
<rect x="603.99" y="332" width="1.15" height="54.68" fill="url(#gC)"/>
<rect x="606.35" y="332" width="1.15" height="64.97" fill="url(#gG)"/>
<polygon points="610.03,332 612.23,332 611.73,405.8 610.53,405.8" fill="url(#gG)"/>
<rect x="612.92" y="332" width="1.15" height="62.03" fill="url(#gG)"/>
<polygon points="619.22,332 621.42,332 620.92,386.68 619.72,386.68" fill="url(#gC)"/>
<polygon points="628.42,332 630.62,332 630.12,396.97 628.92,396.97" fill="url(#gG)"/>
<rect x="633.46" y="332" width="1.3" height="67.91" fill="url(#gG)"/>
<rect x="635.51" y="332" width="1.15" height="72.33" fill="url(#gC)"/>
<rect x="640.69" y="332" width="1.3" height="79.68" fill="url(#gG)"/>
<rect x="643.39" y="332" width="1.15" height="47.32" fill="url(#gC)"/>
<polygon points="648.11,332 650.31,332 649.81,394.03 648.61,394.03" fill="url(#gG)"/>
<rect x="653.89" y="332" width="1.15" height="39.97" fill="url(#gC)"/>
<polygon points="657.69,332 660.44,332 659.66,414 658.46,414" fill="url(#gY)"/>
<rect x="665.05" y="332" width="1.15" height="51.74" fill="url(#gC)"/>
<rect x="668.99" y="332" width="1.15" height="47.32" fill="url(#gC)"/>
<polygon points="671.2,332 674.5,332 673.45,411.68 672.25,411.68" fill="url(#gG)"/>
<polygon points="676.46,332 679.76,332 678.71,414 677.51,414" fill="url(#gG)"/>
<polygon points="681.6,332 683.8,332 683.3,404.33 682.1,404.33" fill="url(#gG)"/>
<polygon points="686.2,332 688.4,332 687.9,391.09 686.7,391.09" fill="url(#gG)"/>
<rect x="690.01" y="332" width="1.15" height="47.32" fill="url(#gC)"/>
<rect x="193.65" y="332" width="1.1" height="156" fill="url(#gF)" opacity="0.8"/>
<rect x="188.65" y="332" width="1.1" height="156" fill="url(#gF)" opacity="0.6"/>
<rect x="202.95" y="332" width="1.1" height="156" fill="url(#gF)" opacity="0.75"/>
<rect x="212.25" y="332" width="1.1" height="150" fill="url(#gF)" opacity="0.6"/>
<rect x="277.45" y="332" width="1.1" height="90" fill="url(#gT)" opacity="0.7"/>
<rect x="315.45" y="332" width="1.1" height="110" fill="url(#gT)" opacity="0.7"/>
<rect x="327.75" y="332" width="1.1" height="100" fill="url(#gT)" opacity="0.7"/>
<rect x="341.15" y="332" width="1.1" height="100" fill="url(#gT)" opacity="0.7"/>
<rect x="361.45" y="332" width="1.1" height="100" fill="url(#gT)" opacity="0.7"/>
<rect x="380.45" y="332" width="1.1" height="156" fill="url(#gF)" opacity="0.75"/>
<rect x="407.95" y="332" width="1.1" height="156" fill="url(#gF)" opacity="0.55"/>
<rect x="429.05" y="332" width="1.1" height="84" fill="url(#gT)" opacity="0.8"/>
<rect x="456.45" y="332" width="1.1" height="100" fill="url(#gT)" opacity="0.6"/>
<rect x="521.45" y="332" width="1.1" height="156" fill="url(#gF)" opacity="0.8"/>
<rect x="528.25" y="332" width="1.1" height="110" fill="url(#gT)" opacity="0.6"/>
<rect x="569.45" y="332" width="1.1" height="90" fill="url(#gT)" opacity="0.8"/>
<rect x="576.45" y="332" width="1.1" height="80" fill="url(#gT)" opacity="0.8"/>
<rect x="596.45" y="332" width="1.1" height="90" fill="url(#gT)" opacity="0.8"/>
<rect x="603.45" y="332" width="1.1" height="156" fill="url(#gF)" opacity="0.45"/>
<rect x="658.95" y="332" width="1.1" height="82" fill="url(#gT)" opacity="0.8"/>
<rect x="677.45" y="332" width="1.1" height="120" fill="url(#gT)" opacity="0.6"/>
<rect x="679.45" y="332" width="1.1" height="130" fill="url(#gT)" opacity="0.5"/>
<rect x="79.2" y="358" width="613.6" height="56" fill="url(#nk2)" opacity=".3"/>
<rect x="79.2" y="332" width="613.6" height="26" fill="url(#nk2)" opacity=".22"/>
<rect x="79.2" y="332" width="613.6" height="56" fill="url(#nc)" opacity=".32"/>
<rect x="79.2" y="332" width="613.6" height="56" fill="url(#nB)" opacity=".25"/>
</g>
<polyline fill="none" stroke="#000" stroke-width="1.45" stroke-linejoin="round" points="79.2,142.66 79.9,141.94 80.6,140.6 81.3,141.12 82,141.4 82.7,140.86 83.4,142.5 84.1,142.22 84.8,140.9 85.5,141.49 86.2,140.22 86.9,139.86 87.6,140.34 88.3,141.8 89,141.93 89.7,142.63 90.4,143.32 91.1,141.03 91.8,141.51 92.5,141.79 93.2,141.78 93.9,142.46 94.6,142.35 95.3,142.96 96,140.72 96.7,139.28 97.4,143.03 98.1,143.72 98.8,145.35 99.5,142.75 100.2,143.6 100.9,140.87 101.6,141.74 102.3,143.53 103,143.86 103.7,143.12 104.4,145.26 105.1,145.09 105.8,143.85 106.5,141.9 107.2,142.96 107.9,143.71 108.6,143.14 109.3,143.19 110,142.96 110.7,142.09 111.4,142.2 112.1,142.66 112.8,142.39 113.5,140.85 114.2,143.04 114.9,142.4 115.6,142.41 116.3,142.85 117,141.33 117.7,142.21 118.4,140.87 119.1,141.16 119.8,140.52 120.5,142.46 121.2,142.71 121.9,142.79 122.6,141.8 123.3,140.94 124,140.5 124.7,139.78 125.4,140.44 126.1,142.48 126.8,142.37 127.5,141.98 128.2,141.24 128.9,141.28 129.6,141.12 130.3,140.56 131,139.46 131.7,138.93 132.4,140.17 133.1,141.34 133.8,141.87 134.5,141.02 135.2,140.9 135.9,140.16 136.6,141.24 137.3,141.91 138,143.43 138.7,144.83 139.4,143.81 140.1,144.58 140.8,144.99 141.5,142.79 142.2,142.35 142.9,143.19 143.6,144.93 144.3,143.82 145,144.61 145.7,145 146.4,142.18 147.1,140.28 147.8,141.3 148.5,140.9 149.2,141.81 149.9,142.11 150.6,141.53 151.3,140.53 152,141.73 152.7,141.46 153.4,140.81 154.1,141.6 154.8,144.27 155.5,144.54 156.2,143.38 156.9,144.49 157.6,143 158.3,142.52 159,142.45 159.7,142.48 160.4,142.74 161.1,142.57 161.8,142.54 162.5,142.02 163.2,142.67 163.9,144.27 164.6,142.98 165.3,141.09 166,143.62 166.7,143.26 167.4,143.54 168.1,143.42 168.8,144.35 169.5,145.42 170.2,143.8 170.9,143.89 171.6,143.1 172.3,141.87 173,141.84 173.7,143.41 174.4,144.28 175.1,143.33 175.8,142.39 176.5,142 177.2,141.29 177.9,141.43 178.6,140.38 179.3,141.07 180,141.86 180.7,141.96 181.4,142.66 182.1,140.97 182.8,141.49 183.5,143.79 184.2,145.23 184.9,144.3 185.6,143.5 186.3,144.59 187,143.01 187.7,139.58 188.4,139.22 189.1,141.77 189.8,141.63 190.5,142.17 191.2,142.64 191.9,142.16 192.6,142.47 193.3,142.72 194,141.68 194.7,142.2 195.4,144.22 196.1,142.91 196.8,140.43 197.5,139.93 198.2,141.67 198.9,140.92 199.6,141.91 200.3,142.32 201,143.12 201.7,139.96 202.4,140.06 203.1,139.14 203.8,138.98 204.5,138.4 205.2,139.66 205.9,141.08 206.6,141.36 207.3,143.67 208,144.1 208.7,142.71 209.4,139.3 210.1,140.05 210.8,140.99 211.5,141.61 212.2,142.7 212.9,142.13 213.6,138.78 214.3,139.93 215,141.92 215.7,140.13 216.4,140.69 217.1,141.68 217.8,141.38 218.5,141.69 219.2,143.02 219.9,140.85 220.6,140.32 221.3,140.06 222,142.17 222.7,142.07 223.4,142.88 224.1,142.66 224.8,141.97 225.5,140.13 226.2,142.58 226.9,143.07 227.6,142.91 228.3,140.01 229,139.82 229.7,138.81 230.4,139.5 231.1,139.48 231.8,140.59 232.5,142.15 233.2,142.26 233.9,141.36 234.6,143.08 235.3,141.5 236,142.23 236.7,141.52 237.4,142.96 238.1,143.19 238.8,144.4 239.5,143.03 240.2,145 240.9,142.41 241.6,143.49 242.3,142.46 243,142.46 243.7,141.33 244.4,142.05 245.1,141.96 245.8,142.18 246.5,143.07 247.2,144.03 247.9,143.94 248.6,145.23 249.3,143.98 250,143.14 250.7,142.84 251.4,143.88 252.1,144.98 252.8,144.65 253.5,143.66 254.2,143.05 254.9,143.74 255.6,143.52 256.3,141.93 257,143.73 257.7,143.1 258.4,143.85 259.1,143.88 259.8,144.13 260.5,146.4 261.2,143.14 261.9,143.15 262.6,142.41 263.3,141.41 264,141.86 264.7,142.65 265.4,143.3 266.1,144.63 266.8,145.03 267.5,143.86 268.2,142.23 268.9,142.43 269.6,142.57 270.3,142.35 271,141.42 271.7,141.53 272.4,140.84 273.1,142.03 273.8,141.68 274.5,141.17 275.2,141.83 275.9,141.88 276.6,142.66 277.3,143.1 278,143 278.7,143.04 279.4,141.71 280.1,141.93 280.8,143.66 281.5,144.27 282.2,141.75 282.9,143.26 283.6,142.8 284.3,144.18 285,144.57 285.7,142.38 286.4,143.27 287.1,142.82 287.8,142.63 288.5,142.36 289.2,143.82 289.9,143.09 290.6,142.81 291.3,142.66 292,142.96 292.7,141.19 293.4,142.09 294.1,143.32 294.8,143.15 295.5,142.9 296.2,142.11 296.9,142.22 297.6,143.68 298.3,142.94 299,142.57 299.7,142.23 300.4,141.37 301.1,142.12 301.8,141.34 302.5,141.17 303.2,142.62 303.9,144.93 304.6,145.25 305.3,144.48 306,142.82 306.7,143.1 307.4,140.63 308.1,139.89 308.8,140.67 309.5,141.57 310.2,142.38 310.9,142.25 311.6,141.16 312.3,143.52 313,142.89 313.7,143.57 314.4,143.04 315.1,143.21 315.8,141.96 316.5,143.14 317.2,143.56 317.9,144.92 318.6,143.97 319.3,144.29 320,144.24 320.7,143.19 321.4,142.39 322.1,142.34 322.8,142.72 323.5,142.67 324.2,142.37 324.9,142.35 325.6,142.02 326.3,141.2 327,141.2 327.7,140.83 328.4,141.51 329.1,140.18 329.8,140.92 330.5,142.97 331.2,144.3 331.9,144.38 332.6,143.5 333.3,140.26 334,140.54 334.7,142.52 335.4,142.92 336.1,142.31 336.8,142.07 337.5,143.64 338.2,143.22 338.9,144.68 339.6,144.75 340.3,145.67 341,144.37 341.7,146.4 342.4,145.12 343.1,144.63 343.8,144.25 344.5,145.18 345.2,143.41 345.9,143.14 346.6,143.25 347.3,143.78 348,141.43 348.7,142.54 349.4,141.66 350.1,142.62 350.8,143.23 351.5,142.32 352.2,141.53 352.9,142.26 353.6,140.25 354.3,138.73 355,139.51 355.7,139.7 356.4,139.55 357.1,141.23 357.8,141.14 358.5,140.84 359.2,141.16 359.9,139.67 360.6,139.49 361.3,139.09 362,138.9 362.7,140.42 363.4,139.97 364.1,139.94 364.8,139.56 365.5,141.13 366.2,141.49 366.9,141.05 367.6,140.5 368.3,141.32 369,141.28 369.7,139.65 370.4,140.63 371.1,139.3 371.8,139.34 372.5,141.91 373.2,142.4 373.9,143.32 374.6,142.84 375.3,143.05 376,143.94 376.7,142.14 377.4,140.9 378.1,142.71 378.8,143.02 379.5,142.87 380.2,142.7 380.9,141.72 381.6,143.14 382.3,142.93 383,141.72 383.7,144.49 384.4,144.31 385.1,142.64 385.8,143.23 386.5,142.95 387.2,142.45 387.9,143.77 388.6,142.72 389.3,143.82 390,143.79 390.7,144.27 391.4,144.19 392.1,143.29 392.8,142.94 393.5,144.32 394.2,144.06 394.9,144.08 395.6,143.73 396.3,144.39 397,144 397.7,143.81 398.4,143.63 399.1,143.88 399.8,144.58 400.5,144.83 401.2,145.28 401.9,144.06 402.6,145.84 403.3,146.4 404,145.85 404.7,145.65 405.4,143.82 406.1,142.71 406.8,143.23 407.5,142.84 408.2,145.01 408.9,143.6 409.6,144.6 410.3,144.81 411,142.34 411.7,142.37 412.4,143.23 413.1,141.22 413.8,141.37 414.5,141.52 415.2,142.51 415.9,143.92 416.6,143.8 417.3,142.16 418,141.54 418.7,140.65 419.4,140.26 420.1,140.76 420.8,141.22 421.5,141.7 422.2,140.43 422.9,139.54 423.6,141.34 424.3,142.29 425,140.26 425.7,142.64 426.4,143.67 427.1,143.78 427.8,143.24 428.5,142.94 429.2,140.59 429.9,141.87 430.6,143.44 431.3,143.61 432,141.68 432.7,141.28 433.4,141.47 434.1,142.38 434.8,143.62 435.5,143.82 436.2,143.5 436.9,143.05 437.6,142.75 438.3,141.37 439,141.9 439.7,142.16 440.4,140.87 441.1,141.75 441.8,142.63 442.5,143.62 443.2,143.02 443.9,142.05 444.6,143.97 445.3,143.04 446,142.67 446.7,141.87 447.4,141.51 448.1,139.69 448.8,141.52 449.5,142.07 450.2,143.39 450.9,141.57 451.6,141.63 452.3,141.14 453,139.76 453.7,139.56 454.4,140.29 455.1,139.44 455.8,140.83 456.5,141.04 457.2,140.91 457.9,140.41 458.6,142.01 459.3,142.42 460,141.69 460.7,142.67 461.4,141.91 462.1,142.31 462.8,142.46 463.5,140.73 464.2,142.52 464.9,142.61 465.6,141.4 466.3,142.32 467,143.06 467.7,145.07 468.4,145.6 469.1,144.32 469.8,143.75 470.5,143.06 471.2,143.56 471.9,143.14 472.6,143.17 473.3,143.93 474,141.75 474.7,141.69 475.4,142.83 476.1,141.49 476.8,142.49 477.5,140.67 478.2,142.94 478.9,141.62 479.6,143.06 480.3,142.69 481,142.97 481.7,144.22 482.4,142.42 483.1,142.67 483.8,141.28 484.5,142.28 485.2,142.74 485.9,142.59 486.6,144.89 487.3,143.31 488,142.88 488.7,146.4 489.4,143.46 490.1,143.23 490.8,144.15 491.5,145.58 492.2,144.97 492.9,145.37 493.6,144.59 494.3,144.97 495,145.45 495.7,144.85 496.4,143.92 497.1,144.67 497.8,144.45 498.5,144.18 499.2,144.3 499.9,142.54 500.6,141.67 501.3,141.73 502,140.07 502.7,140.61 503.4,143.23 504.1,143.09 504.8,143.09 505.5,142.95 506.2,140.82 506.9,139.96 507.6,139.24 508.3,141.84 509,141.36 509.7,141.34 510.4,142.63 511.1,143.01 511.8,141.17 512.5,141.92 513.2,141.07 513.9,142.09 514.6,141.65 515.3,140.95 516,140.77 516.7,139.39 517.4,139.42 518.1,139.12 518.8,139.53 519.5,140.56 520.2,141.25 520.9,140.05 521.6,138.89 522.3,138.4 523,138.4 523.7,139.71 524.4,143.11 525.1,142.16 525.8,144.34 526.5,142.6 527.2,140.77 527.9,143.13 528.6,143.45 529.3,143.49 530,144.04 530.7,142.6 531.4,141.16 532.1,141.94 532.8,141.63 533.5,141.44 534.2,141.39 534.9,142.49 535.6,141.53 536.3,142.06 537,141.61 537.7,139.15 538.4,140.7 539.1,140.5 539.8,143.05 540.5,142.68 541.2,143 541.9,143.82 542.6,144.06 543.3,143.94 544,142.97 544.7,143.15 545.4,145.35 546.1,142.38 546.8,142.04 547.5,141.16 548.2,141.59 548.9,141.99 549.6,144.48 550.3,146.4 551,146.4 551.7,144.97 552.4,143.84 553.1,144.07 553.8,144.35 554.5,144.17 555.2,146.09 555.9,146.36 556.6,145.46 557.3,144.36 558,143 558.7,142.88 559.4,143.05 560.1,142.71 560.8,142.35 561.5,142.67 562.2,142.17 562.9,141.49 563.6,142.67 564.3,141.44 565,140.69 565.7,139.63 566.4,140.79 567.1,141.47 567.8,141.91 568.5,142.54 569.2,142.51 569.9,141.89 570.6,140.81 571.3,143.84 572,141.13 572.7,140.51 573.4,141.09 574.1,142.78 574.8,140.53 575.5,139.18 576.2,140.6 576.9,141.09 577.6,139.35 578.3,140.23 579,140.44 579.7,140.16 580.4,139.91 581.1,141.44 581.8,141.79 582.5,141.37 583.2,141.62 583.9,141.26 584.6,140.77 585.3,141.13 586,140.56 586.7,140.93 587.4,140.39 588.1,140.78 588.8,141.29 589.5,142.01 590.2,141.96 590.9,141.18 591.6,140.83 592.3,141.46 593,142.58 593.7,142.69 594.4,140.8 595.1,142.73 595.8,142.85 596.5,143.57 597.2,144.24 597.9,143.9 598.6,144.82 599.3,142.61 600,143.45 600.7,144.06 601.4,143.27 602.1,143.32 602.8,142.36 603.5,142.16 604.2,142.75 604.9,143.16 605.6,143.03 606.3,141.34 607,141.19 607.7,140.63 608.4,140.18 609.1,141.88 609.8,140.87 610.5,142.37 611.2,142.77 611.9,142.06 612.6,141.82 613.3,140.01 614,141.21 614.7,141.63 615.4,143.06 616.1,144.22 616.8,142.97 617.5,141.17 618.2,140.56 618.9,140.05 619.6,140.54 620.3,140.27 621,141.11 621.7,140.32 622.4,141.33 623.1,140.73 623.8,140.27 624.5,140.59 625.2,141.23 625.9,141.89 626.6,142.91 627.3,141.12 628,140.54 628.7,141.52 629.4,141.94 630.1,141.99 630.8,139.88 631.5,139.85 632.2,140.67 632.9,140.62 633.6,140.48 634.3,140.3 635,142.81 635.7,142.26 636.4,143.76 637.1,143.82 637.8,143.08 638.5,142.29 639.2,143.17 639.9,143.14 640.6,143.84 641.3,144.75 642,144.44 642.7,143.44 643.4,145.05 644.1,143.12 644.8,142.27 645.5,141.99 646.2,140.87 646.9,141.63 647.6,139.21 648.3,140.45 649,141.06 649.7,141.97 650.4,142.83 651.1,141.85 651.8,142.25 652.5,141.15 653.2,140.96 653.9,142.87 654.6,142.14 655.3,142.5 656,142.49 656.7,143.59 657.4,144.35 658.1,143.05 658.8,143.5 659.5,143.91 660.2,143.12 660.9,143.45 661.6,142.43 662.3,141.49 663,140.05 663.7,141.44 664.4,141.75 665.1,143.17 665.8,142.4 666.5,142.25 667.2,141.28 667.9,141.56 668.6,143.05 669.3,143.23 670,141.96 670.7,141.53 671.4,141.23 672.1,142.13 672.8,140.41 673.5,142.08 674.2,141.27 674.9,141.98 675.6,143.24 676.3,142.3 677,142.88 677.7,142.08 678.4,141.96 679.1,141.28 679.8,140.08 680.5,140.26 681.2,140.58 681.9,140.6 682.6,140.44 683.3,141.18 684,142.67 684.7,143.4 685.4,144.24 686.1,142.79 686.8,142.33 687.5,141.28 688.2,141.31 688.9,143.45 689.6,144.79 690.3,143.69 691,142.08 691.7,142.97 692.4,142.84"/>
<path d="M103.3 135.4v7" stroke="#000" stroke-width=".9" opacity=".85"/>
<path d="M181 138.4v4" stroke="#000" stroke-width=".9" opacity=".85"/>
<path d="M225 136.4v6" stroke="#000" stroke-width=".9" opacity=".85"/>
<path d="M235.8 137.4v5" stroke="#000" stroke-width=".9" opacity=".85"/>
<path d="M262.5 138.4v4" stroke="#000" stroke-width=".9" opacity=".85"/>
<path d="M300 139.4v6" stroke="#000" stroke-width=".9" opacity=".85"/>
<path d="M354 138.4v4" stroke="#000" stroke-width=".9" opacity=".85"/>
<path d="M407.5 138.4v4" stroke="#000" stroke-width=".9" opacity=".85"/>
<path d="M475.8 137.4v5" stroke="#000" stroke-width=".9" opacity=".85"/>
<path d="M500 138.4v7" stroke="#000" stroke-width=".9" opacity=".85"/>
<path d="M540.5 136.4v6" stroke="#000" stroke-width=".9" opacity=".85"/>
<path d="M548.5 142.4v6" stroke="#000" stroke-width=".9" opacity=".85"/>
<path d="M589 138.4v4" stroke="#000" stroke-width=".9" opacity=".85"/>
<path d="M611 137.9v4.5" stroke="#000" stroke-width=".9" opacity=".85"/>
<path d="M673.8 134.9v10.5" stroke="#000" stroke-width=".9" opacity=".85"/>
<rect x="79.2" y="510" width="613.6" height="3.7" fill="#000"/>
<path d="M79.2 511.8H692.8" stroke="#999" stroke-width="1" stroke-dasharray="1 1.6 1.5 2.2 1 3.1" opacity=".8" fill="none"/>
<path d="M79.2 126.6L79.2 538.6" stroke="#222" stroke-width="0.7" fill="none"/>
<path d="M703.6 126.6L703.6 538.6" stroke="#222" stroke-width="0.7" fill="none"/>
<path d="M74.2 126.6L708.6 126.6" stroke="#222" stroke-width="0.7" fill="none"/>
<path d="M74.2 157.4L708.6 157.4" stroke="#222" stroke-width="0.7" fill="none"/>
<path d="M74.2 497.6L708.6 497.6" stroke="#222" stroke-width="0.7" fill="none"/>
<path d="M74.2 528.5L708.6 528.5" stroke="#222" stroke-width="0.7" fill="none"/>
<path d="M74.2 166.4L79.2 166.4" stroke="#222" stroke-width="0.7" fill="none"/>
<path d="M703.6 166.4L708.6 166.4" stroke="#222" stroke-width="0.7" fill="none"/>
<path d="M74.2 197.6L79.2 197.6" stroke="#222" stroke-width="0.7" fill="none"/>
<path d="M703.6 197.6L708.6 197.6" stroke="#222" stroke-width="0.7" fill="none"/>
<path d="M74.2 228.8L79.2 228.8" stroke="#222" stroke-width="0.7" fill="none"/>
<path d="M703.6 228.8L708.6 228.8" stroke="#222" stroke-width="0.7" fill="none"/>
<path d="M74.2 260L79.2 260" stroke="#222" stroke-width="0.7" fill="none"/>
<path d="M703.6 260L708.6 260" stroke="#222" stroke-width="0.7" fill="none"/>
<path d="M74.2 291.2L79.2 291.2" stroke="#222" stroke-width="0.7" fill="none"/>
<path d="M703.6 291.2L708.6 291.2" stroke="#222" stroke-width="0.7" fill="none"/>
<path d="M74.2 322.4L79.2 322.4" stroke="#222" stroke-width="0.7" fill="none"/>
<path d="M703.6 322.4L708.6 322.4" stroke="#222" stroke-width="0.7" fill="none"/>
<path d="M79.2 322.4L692.8 322.4" stroke="#222" stroke-width="0.5" opacity="0.5" fill="none"/>
<path d="M74.2 332L79.2 332" stroke="#222" stroke-width="0.7" fill="none"/>
<path d="M703.6 332L708.6 332" stroke="#222" stroke-width="0.7" fill="none"/>
<path d="M74.2 363.2L79.2 363.2" stroke="#222" stroke-width="0.7" fill="none"/>
<path d="M703.6 363.2L708.6 363.2" stroke="#222" stroke-width="0.7" fill="none"/>
<path d="M74.2 394.4L79.2 394.4" stroke="#222" stroke-width="0.7" fill="none"/>
<path d="M703.6 394.4L708.6 394.4" stroke="#222" stroke-width="0.7" fill="none"/>
<path d="M74.2 425.6L79.2 425.6" stroke="#222" stroke-width="0.7" fill="none"/>
<path d="M703.6 425.6L708.6 425.6" stroke="#222" stroke-width="0.7" fill="none"/>
<path d="M74.2 456.8L79.2 456.8" stroke="#222" stroke-width="0.7" fill="none"/>
<path d="M703.6 456.8L708.6 456.8" stroke="#222" stroke-width="0.7" fill="none"/>
<path d="M74.2 488L79.2 488" stroke="#222" stroke-width="0.7" fill="none"/>
<path d="M703.6 488L708.6 488" stroke="#222" stroke-width="0.7" fill="none"/>
<path d="M79.2 488L692.8 488" stroke="#222" stroke-width="0.5" opacity="0.5" fill="none"/>
<path d="M703.6 134.3L706.6 134.3" stroke="#222" stroke-width="0.5" opacity="0.5" fill="none"/>
<path d="M76.2 134.3L79.2 134.3" stroke="#222" stroke-width="0.5" opacity="0.35" fill="none"/>
<path d="M703.6 142L706.6 142" stroke="#222" stroke-width="0.5" opacity="0.5" fill="none"/>
<path d="M76.2 142L79.2 142" stroke="#222" stroke-width="0.5" opacity="0.35" fill="none"/>
<path d="M703.6 149.7L706.6 149.7" stroke="#222" stroke-width="0.5" opacity="0.5" fill="none"/>
<path d="M76.2 149.7L79.2 149.7" stroke="#222" stroke-width="0.5" opacity="0.35" fill="none"/>
<path d="M703.6 505.3L706.6 505.3" stroke="#222" stroke-width="0.5" opacity="0.5" fill="none"/>
<path d="M76.2 505.3L79.2 505.3" stroke="#222" stroke-width="0.5" opacity="0.35" fill="none"/>
<path d="M703.6 513L706.6 513" stroke="#222" stroke-width="0.5" opacity="0.5" fill="none"/>
<path d="M76.2 513L79.2 513" stroke="#222" stroke-width="0.5" opacity="0.35" fill="none"/>
<path d="M703.6 520.8L706.6 520.8" stroke="#222" stroke-width="0.5" opacity="0.5" fill="none"/>
<path d="M76.2 520.8L79.2 520.8" stroke="#222" stroke-width="0.5" opacity="0.35" fill="none"/>
<path d="M89.61 126.6V130.1M89.61 153.9V157.4M89.61 162.9V166.4M89.61 322.4V325.9M89.61 328.5V332M89.61 488V491.5M89.61 494.1V497.6M89.61 528.5V532M100.01 126.6V130.1M100.01 153.9V157.4M100.01 162.9V166.4M100.01 322.4V325.9M100.01 328.5V332M100.01 488V491.5M100.01 494.1V497.6M100.01 528.5V532M110.42 126.6V130.1M110.42 153.9V157.4M110.42 162.9V166.4M110.42 322.4V325.9M110.42 328.5V332M110.42 488V491.5M110.42 494.1V497.6M110.42 528.5V532M120.82 126.6V130.1M120.82 153.9V157.4M120.82 162.9V166.4M120.82 322.4V325.9M120.82 328.5V332M120.82 488V491.5M120.82 494.1V497.6M120.82 528.5V532M131.22 126.6V130.1M131.22 153.9V157.4M131.22 162.9V166.4M131.22 322.4V325.9M131.22 328.5V332M131.22 488V491.5M131.22 494.1V497.6M131.22 528.5V532M152.03 126.6V130.1M152.03 153.9V157.4M152.03 162.9V166.4M152.03 322.4V325.9M152.03 328.5V332M152.03 488V491.5M152.03 494.1V497.6M152.03 528.5V532M162.44 126.6V130.1M162.44 153.9V157.4M162.44 162.9V166.4M162.44 322.4V325.9M162.44 328.5V332M162.44 488V491.5M162.44 494.1V497.6M162.44 528.5V532M172.84 126.6V130.1M172.84 153.9V157.4M172.84 162.9V166.4M172.84 322.4V325.9M172.84 328.5V332M172.84 488V491.5M172.84 494.1V497.6M172.84 528.5V532M183.25 126.6V130.1M183.25 153.9V157.4M183.25 162.9V166.4M183.25 322.4V325.9M183.25 328.5V332M183.25 488V491.5M183.25 494.1V497.6M183.25 528.5V532M193.66 126.6V130.1M193.66 153.9V157.4M193.66 162.9V166.4M193.66 322.4V325.9M193.66 328.5V332M193.66 488V491.5M193.66 494.1V497.6M193.66 528.5V532M214.47 126.6V130.1M214.47 153.9V157.4M214.47 162.9V166.4M214.47 322.4V325.9M214.47 328.5V332M214.47 488V491.5M214.47 494.1V497.6M214.47 528.5V532M224.87 126.6V130.1M224.87 153.9V157.4M224.87 162.9V166.4M224.87 322.4V325.9M224.87 328.5V332M224.87 488V491.5M224.87 494.1V497.6M224.87 528.5V532M235.28 126.6V130.1M235.28 153.9V157.4M235.28 162.9V166.4M235.28 322.4V325.9M235.28 328.5V332M235.28 488V491.5M235.28 494.1V497.6M235.28 528.5V532M245.68 126.6V130.1M245.68 153.9V157.4M245.68 162.9V166.4M245.68 322.4V325.9M245.68 328.5V332M245.68 488V491.5M245.68 494.1V497.6M245.68 528.5V532M256.08 126.6V130.1M256.08 153.9V157.4M256.08 162.9V166.4M256.08 322.4V325.9M256.08 328.5V332M256.08 488V491.5M256.08 494.1V497.6M256.08 528.5V532M276.9 126.6V130.1M276.9 153.9V157.4M276.9 162.9V166.4M276.9 322.4V325.9M276.9 328.5V332M276.9 488V491.5M276.9 494.1V497.6M276.9 528.5V532M287.3 126.6V130.1M287.3 153.9V157.4M287.3 162.9V166.4M287.3 322.4V325.9M287.3 328.5V332M287.3 488V491.5M287.3 494.1V497.6M287.3 528.5V532M297.7 126.6V130.1M297.7 153.9V157.4M297.7 162.9V166.4M297.7 322.4V325.9M297.7 328.5V332M297.7 488V491.5M297.7 494.1V497.6M297.7 528.5V532M308.11 126.6V130.1M308.11 153.9V157.4M308.11 162.9V166.4M308.11 322.4V325.9M308.11 328.5V332M308.11 488V491.5M308.11 494.1V497.6M308.11 528.5V532M318.52 126.6V130.1M318.52 153.9V157.4M318.52 162.9V166.4M318.52 322.4V325.9M318.52 328.5V332M318.52 488V491.5M318.52 494.1V497.6M318.52 528.5V532M339.32 126.6V130.1M339.32 153.9V157.4M339.32 162.9V166.4M339.32 322.4V325.9M339.32 328.5V332M339.32 488V491.5M339.32 494.1V497.6M339.32 528.5V532M349.73 126.6V130.1M349.73 153.9V157.4M349.73 162.9V166.4M349.73 322.4V325.9M349.73 328.5V332M349.73 488V491.5M349.73 494.1V497.6M349.73 528.5V532M360.13 126.6V130.1M360.13 153.9V157.4M360.13 162.9V166.4M360.13 322.4V325.9M360.13 328.5V332M360.13 488V491.5M360.13 494.1V497.6M360.13 528.5V532M370.54 126.6V130.1M370.54 153.9V157.4M370.54 162.9V166.4M370.54 322.4V325.9M370.54 328.5V332M370.54 488V491.5M370.54 494.1V497.6M370.54 528.5V532M380.94 126.6V130.1M380.94 153.9V157.4M380.94 162.9V166.4M380.94 322.4V325.9M380.94 328.5V332M380.94 488V491.5M380.94 494.1V497.6M380.94 528.5V532M401.75 126.6V130.1M401.75 153.9V157.4M401.75 162.9V166.4M401.75 322.4V325.9M401.75 328.5V332M401.75 488V491.5M401.75 494.1V497.6M401.75 528.5V532M412.16 126.6V130.1M412.16 153.9V157.4M412.16 162.9V166.4M412.16 322.4V325.9M412.16 328.5V332M412.16 488V491.5M412.16 494.1V497.6M412.16 528.5V532M422.56 126.6V130.1M422.56 153.9V157.4M422.56 162.9V166.4M422.56 322.4V325.9M422.56 328.5V332M422.56 488V491.5M422.56 494.1V497.6M422.56 528.5V532M432.97 126.6V130.1M432.97 153.9V157.4M432.97 162.9V166.4M432.97 322.4V325.9M432.97 328.5V332M432.97 488V491.5M432.97 494.1V497.6M432.97 528.5V532M443.38 126.6V130.1M443.38 153.9V157.4M443.38 162.9V166.4M443.38 322.4V325.9M443.38 328.5V332M443.38 488V491.5M443.38 494.1V497.6M443.38 528.5V532M464.18 126.6V130.1M464.18 153.9V157.4M464.18 162.9V166.4M464.18 322.4V325.9M464.18 328.5V332M464.18 488V491.5M464.18 494.1V497.6M464.18 528.5V532M474.59 126.6V130.1M474.59 153.9V157.4M474.59 162.9V166.4M474.59 322.4V325.9M474.59 328.5V332M474.59 488V491.5M474.59 494.1V497.6M474.59 528.5V532M485 126.6V130.1M485 153.9V157.4M485 162.9V166.4M485 322.4V325.9M485 328.5V332M485 488V491.5M485 494.1V497.6M485 528.5V532M495.4 126.6V130.1M495.4 153.9V157.4M495.4 162.9V166.4M495.4 322.4V325.9M495.4 328.5V332M495.4 488V491.5M495.4 494.1V497.6M495.4 528.5V532M505.81 126.6V130.1M505.81 153.9V157.4M505.81 162.9V166.4M505.81 322.4V325.9M505.81 328.5V332M505.81 488V491.5M505.81 494.1V497.6M505.81 528.5V532M526.62 126.6V130.1M526.62 153.9V157.4M526.62 162.9V166.4M526.62 322.4V325.9M526.62 328.5V332M526.62 488V491.5M526.62 494.1V497.6M526.62 528.5V532M537.02 126.6V130.1M537.02 153.9V157.4M537.02 162.9V166.4M537.02 322.4V325.9M537.02 328.5V332M537.02 488V491.5M537.02 494.1V497.6M537.02 528.5V532M547.42 126.6V130.1M547.42 153.9V157.4M547.42 162.9V166.4M547.42 322.4V325.9M547.42 328.5V332M547.42 488V491.5M547.42 494.1V497.6M547.42 528.5V532M557.83 126.6V130.1M557.83 153.9V157.4M557.83 162.9V166.4M557.83 322.4V325.9M557.83 328.5V332M557.83 488V491.5M557.83 494.1V497.6M557.83 528.5V532M568.24 126.6V130.1M568.24 153.9V157.4M568.24 162.9V166.4M568.24 322.4V325.9M568.24 328.5V332M568.24 488V491.5M568.24 494.1V497.6M568.24 528.5V532M589.05 126.6V130.1M589.05 153.9V157.4M589.05 162.9V166.4M589.05 322.4V325.9M589.05 328.5V332M589.05 488V491.5M589.05 494.1V497.6M589.05 528.5V532M599.45 126.6V130.1M599.45 153.9V157.4M599.45 162.9V166.4M599.45 322.4V325.9M599.45 328.5V332M599.45 488V491.5M599.45 494.1V497.6M599.45 528.5V532M609.86 126.6V130.1M609.86 153.9V157.4M609.86 162.9V166.4M609.86 322.4V325.9M609.86 328.5V332M609.86 488V491.5M609.86 494.1V497.6M609.86 528.5V532M620.26 126.6V130.1M620.26 153.9V157.4M620.26 162.9V166.4M620.26 322.4V325.9M620.26 328.5V332M620.26 488V491.5M620.26 494.1V497.6M620.26 528.5V532M630.67 126.6V130.1M630.67 153.9V157.4M630.67 162.9V166.4M630.67 322.4V325.9M630.67 328.5V332M630.67 488V491.5M630.67 494.1V497.6M630.67 528.5V532M651.48 126.6V130.1M651.48 153.9V157.4M651.48 162.9V166.4M651.48 322.4V325.9M651.48 328.5V332M651.48 488V491.5M651.48 494.1V497.6M651.48 528.5V532M661.88 126.6V130.1M661.88 153.9V157.4M661.88 162.9V166.4M661.88 322.4V325.9M661.88 328.5V332M661.88 488V491.5M661.88 494.1V497.6M661.88 528.5V532M672.28 126.6V130.1M672.28 153.9V157.4M672.28 162.9V166.4M672.28 322.4V325.9M672.28 328.5V332M672.28 488V491.5M672.28 494.1V497.6M672.28 528.5V532M682.69 126.6V130.1M682.69 153.9V157.4M682.69 162.9V166.4M682.69 322.4V325.9M682.69 328.5V332M682.69 488V491.5M682.69 494.1V497.6M682.69 528.5V532M693.1 126.6V130.1M693.1 153.9V157.4M693.1 162.9V166.4M693.1 322.4V325.9M693.1 328.5V332M693.1 488V491.5M693.1 494.1V497.6M693.1 528.5V532" stroke="#444" stroke-width=".5" fill="none"/>
<path d="M141.63 126.6V136.6M141.63 147.4V166.4M141.63 322.4V332M141.63 488V497.6M141.63 528.5V538.6M204.06 126.6V136.6M204.06 147.4V166.4M204.06 322.4V332M204.06 488V497.6M204.06 528.5V538.6M266.49 126.6V136.6M266.49 147.4V166.4M266.49 322.4V332M266.49 488V497.6M266.49 528.5V538.6M328.92 126.6V136.6M328.92 147.4V166.4M328.92 322.4V332M328.92 488V497.6M328.92 528.5V538.6M391.35 126.6V136.6M391.35 147.4V166.4M391.35 322.4V332M391.35 488V497.6M391.35 528.5V538.6M453.78 126.6V136.6M453.78 147.4V166.4M453.78 322.4V332M453.78 488V497.6M453.78 528.5V538.6M516.21 126.6V136.6M516.21 147.4V166.4M516.21 322.4V332M516.21 488V497.6M516.21 528.5V538.6M578.64 126.6V136.6M578.64 147.4V166.4M578.64 322.4V332M578.64 488V497.6M578.64 528.5V538.6M641.07 126.6V136.6M641.07 147.4V166.4M641.07 322.4V332M641.07 488V497.6M641.07 528.5V538.6" stroke="#000" stroke-width="1.05" fill="none"/>
<rect x="719.3" y="201.6" width="8.8" height="108" fill="url(#cb)"/>
<path d="M728.3 201.6L728.3 309.6" stroke="#000" stroke-width="0.8" fill="none"/>
<path d="M728 201.8L731.6 201.8" stroke="#000" stroke-width="0.8" fill="none"/>
<path d="M728 228.75L731.6 228.75" stroke="#000" stroke-width="0.8" fill="none"/>
<path d="M728 255.7L731.6 255.7" stroke="#000" stroke-width="0.8" fill="none"/>
<path d="M728 282.65L731.6 282.65" stroke="#000" stroke-width="0.8" fill="none"/>
<path d="M728 309.6L731.6 309.6" stroke="#000" stroke-width="0.8" fill="none"/>
<rect x="719.3" y="366.9" width="8.8" height="108" fill="url(#cb)"/>
<path d="M728.3 366.9L728.3 474.9" stroke="#000" stroke-width="0.8" fill="none"/>
<path d="M728 367.1L731.6 367.1" stroke="#000" stroke-width="0.8" fill="none"/>
<path d="M728 394.05L731.6 394.05" stroke="#000" stroke-width="0.8" fill="none"/>
<path d="M728 421L731.6 421" stroke="#000" stroke-width="0.8" fill="none"/>
<path d="M728 447.95L731.6 447.95" stroke="#000" stroke-width="0.8" fill="none"/>
<path d="M728 474.9L731.6 474.9" stroke="#000" stroke-width="0.8" fill="none"/>
<g filter="url(#tb)">
<text x="732.8" y="204.2" font-size="7.2">-3</text>
<text x="732.8" y="231.15" font-size="7.2">-4</text>
<text x="732.8" y="258.1" font-size="7.2">-5</text>
<text x="732.8" y="285.05" font-size="7.2">-6</text>
<text x="732.8" y="312" font-size="7.2">-7</text>
<text transform="translate(751.3 260) rotate(-90)" font-size="6.8" text-anchor="middle" textLength="53" lengthAdjust="spacingAndGlyphs">log(PSD)(V<tspan dy="-2.5" font-size="5">2</tspan><tspan dy="2.5">/Hz)</tspan></text>
<text x="732.8" y="369.5" font-size="7.2">-3</text>
<text x="732.8" y="396.45" font-size="7.2">-4</text>
<text x="732.8" y="423.4" font-size="7.2">-5</text>
<text x="732.8" y="450.35" font-size="7.2">-6</text>
<text x="732.8" y="477.3" font-size="7.2">-7</text>
<text transform="translate(751.3 425.3) rotate(-90)" font-size="6.8" text-anchor="middle" textLength="53" lengthAdjust="spacingAndGlyphs">log(PSD)(V<tspan dy="-2.5" font-size="5">2</tspan><tspan dy="2.5">/Hz)</tspan></text>
<text x="79.5" y="123.2" font-size="11.6" textLength="67.3" lengthAdjust="spacing" xml:space="preserve">VLF Spectra</text>
<text x="251.2" y="123" font-size="9.2" textLength="23.2" lengthAdjust="spacing">Feb. 2</text>
<text x="282.2" y="123" font-size="9.2">,</text>
<text x="288.3" y="123" font-size="9.2" textLength="18.9" lengthAdjust="spacing">2026</text>
<text x="343.6" y="123" font-size="9.2" textLength="55.6" lengthAdjust="spacing">station=GAK</text>
<text x="437.6" y="123" font-size="9.2" textLength="18.4" lengthAdjust="spacing">start</text>
<text x="461.4" y="123" font-size="9.2" textLength="11.4" lengthAdjust="spacing">UT</text>
<text x="478.2" y="123" font-size="9.2">=</text>
<text x="493" y="123" font-size="9.2">0</text>
<text x="503" y="123" font-size="9.2">:</text>
<text x="507" y="123" font-size="9.2" textLength="12.3" lengthAdjust="spacing">50:</text>
<text x="524.3" y="123" font-size="9.2">0</text>
<text transform="translate(50.3 142.3) rotate(-90)" font-size="9.4" text-anchor="middle" textLength="31" lengthAdjust="spacing">ch.1(V)</text>
<text transform="translate(50.3 513.3) rotate(-90)" font-size="9.4" text-anchor="middle" textLength="31" lengthAdjust="spacing">ch.3(V)</text>
<text transform="translate(50.2 244.3) rotate(-90)" font-size="9.2" text-anchor="middle" textLength="17" lengthAdjust="spacing">ch.1</text>
<text transform="translate(57.2 231.7) rotate(-90)" font-size="9.2" text-anchor="middle" textLength="71" lengthAdjust="spacing">Frequency  (kHz)</text>
<text transform="translate(50.2 409.7) rotate(-90)" font-size="9.2" text-anchor="middle" textLength="17" lengthAdjust="spacing">ch.2</text>
<text transform="translate(57.2 397.1) rotate(-90)" font-size="9.2" text-anchor="middle" textLength="71" lengthAdjust="spacing">Frequency  (kHz)</text>
<text x="70.6" y="129.7" font-size="8.8" text-anchor="end">10</text>
<text x="70.6" y="160.9" font-size="8.8" text-anchor="end">-10</text>
<text x="70.6" y="501.1" font-size="8.8" text-anchor="end">5</text>
<text x="70.6" y="532" font-size="8.8" text-anchor="end">-5</text>
<text x="70.6" y="169.6" font-size="8.8" text-anchor="end">10</text>
<text x="70.6" y="200.8" font-size="8.8" text-anchor="end">8</text>
<text x="70.6" y="232" font-size="8.8" text-anchor="end">6</text>
<text x="70.6" y="263.2" font-size="8.8" text-anchor="end">4</text>
<text x="70.6" y="294.4" font-size="8.8" text-anchor="end">2</text>
<text x="70.6" y="325.6" font-size="8.8" text-anchor="end">0</text>
<text x="70.6" y="335.2" font-size="8.8" text-anchor="end">10</text>
<text x="70.6" y="366.4" font-size="8.8" text-anchor="end">8</text>
<text x="70.6" y="397.6" font-size="8.8" text-anchor="end">6</text>
<text x="70.6" y="428.8" font-size="8.8" text-anchor="end">4</text>
<text x="70.6" y="460" font-size="8.8" text-anchor="end">2</text>
<text x="70.6" y="491.2" font-size="8.8" text-anchor="end">0</text>
<text x="79.3" y="548.8" font-size="9.1" text-anchor="middle">0</text>
<text x="141.73" y="548.8" font-size="9.1" text-anchor="middle">1</text>
<text x="204.16" y="548.8" font-size="9.1" text-anchor="middle">2</text>
<text x="266.59" y="548.8" font-size="9.1" text-anchor="middle">3</text>
<text x="329.02" y="548.8" font-size="9.1" text-anchor="middle">4</text>
<text x="391.45" y="548.8" font-size="9.1" text-anchor="middle">5</text>
<text x="453.88" y="548.8" font-size="9.1" text-anchor="middle">6</text>
<text x="516.31" y="548.8" font-size="9.1" text-anchor="middle">7</text>
<text x="578.74" y="548.8" font-size="9.1" text-anchor="middle">8</text>
<text x="641.17" y="548.8" font-size="9.1" text-anchor="middle">9</text>
<text x="703.6" y="548.8" font-size="9.1" text-anchor="middle">10</text>
<text x="376.8" y="557.7" font-size="8.8" textLength="47.3" lengthAdjust="spacing" xml:space="preserve">Time  (min)</text>
</g>
</svg></body></html>
